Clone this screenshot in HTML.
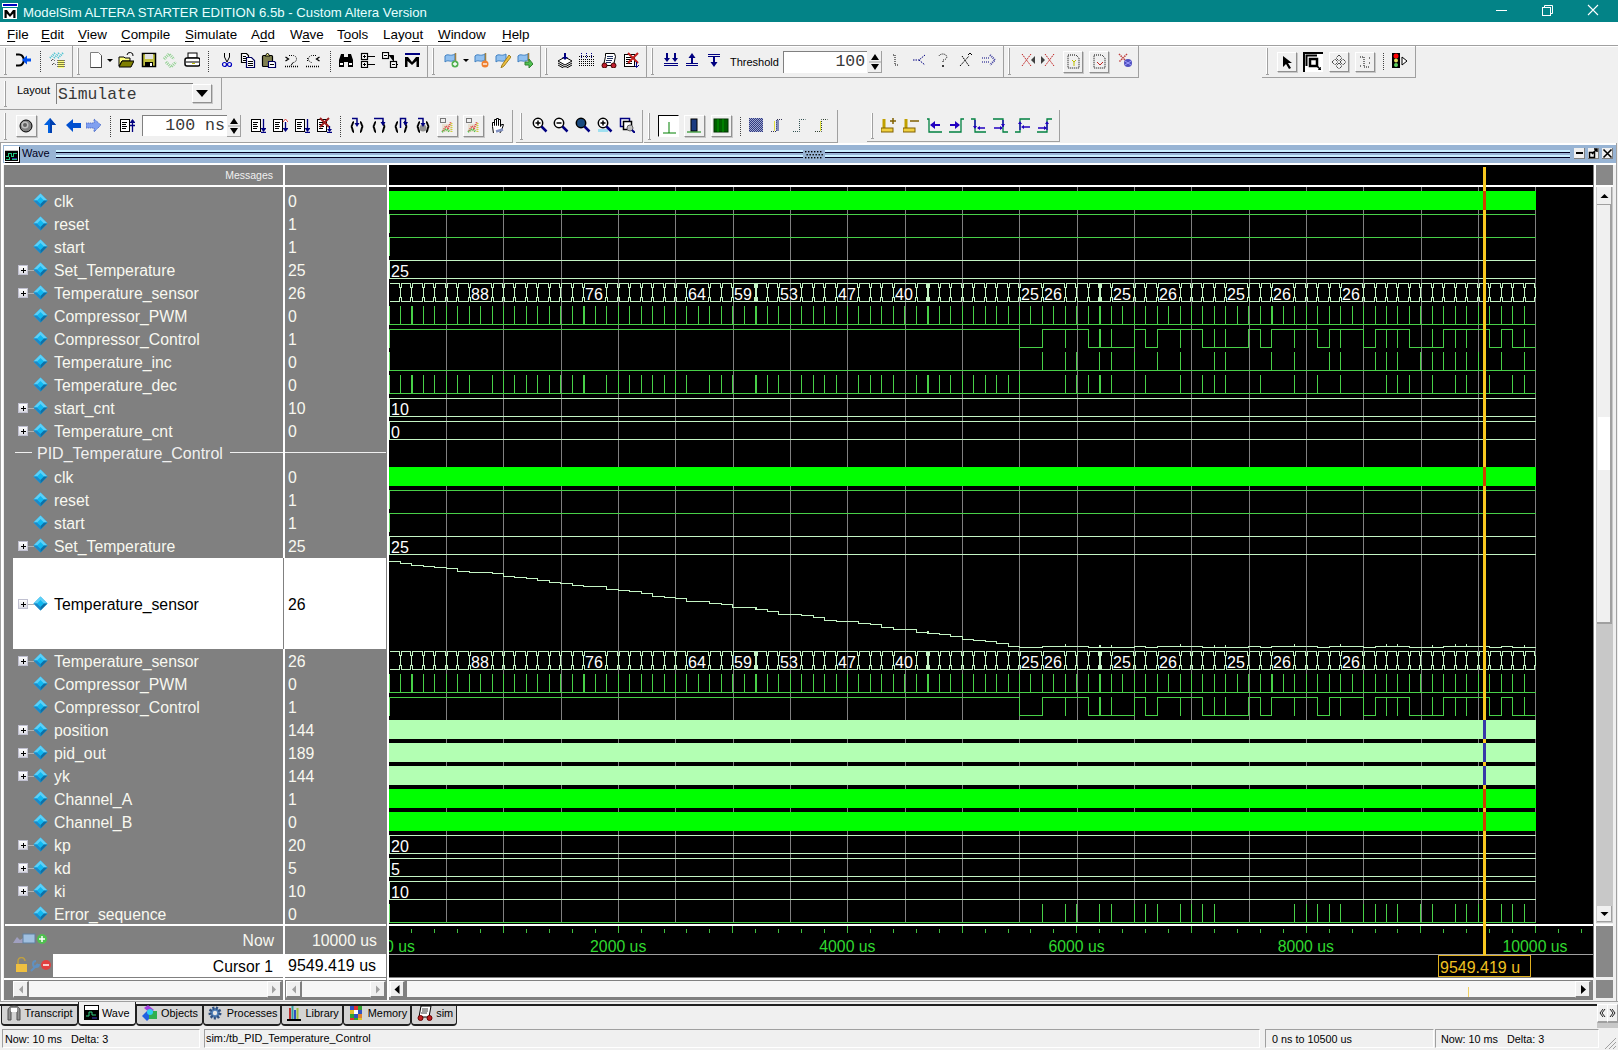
<!DOCTYPE html><html><head><meta charset="utf-8"><title>ModelSim</title><style>html,body{margin:0;padding:0;width:1618px;height:1050px;overflow:hidden;background:#f0f0f0;font-family:"Liberation Sans",sans-serif}svg{display:block}u{text-decoration:underline;text-underline-offset:2px}</style></head><body><div style="position:absolute;left:0px;top:0px;width:1618px;height:22px;background:#038387"></div><svg style="position:absolute;left:2px;top:3px" width="17" height="17" viewBox="0 0 17 17"><rect x="0.5" y="0.5" width="15" height="3" fill="#0000c0" stroke="#fff" stroke-width="1"/><rect x="1" y="5" width="14" height="11" fill="#fff"/><path d="M2.5 15V7h2.5l3 4 3-4h2.5v8h-2.2v-4.5L8 14l-3.3-3.5V15z" fill="#000"/></svg><div style="position:absolute;left:23px;top:5.83px;font-size:13.2px;color:#e8ffff;white-space:nowrap;line-height:1;">ModelSim ALTERA STARTER EDITION 6.5b - Custom Altera Version</div><div style="position:absolute;left:1496px;top:10px;width:11px;height:1px;background:#fff"></div><svg style="position:absolute;left:1541px;top:4px" width="14" height="14"><rect x="1.5" y="3.5" width="8" height="8" fill="none" stroke="#fff"/><path d="M3.5 3.5V1.5h8v8h-2" fill="none" stroke="#fff"/></svg><svg style="position:absolute;left:1587px;top:4px" width="14" height="14"><path d="M1 1L11 11M11 1L1 11" stroke="#fff" stroke-width="1.1"/></svg><div style="position:absolute;left:0px;top:22px;width:1618px;height:23px;background:#fff"></div><div style="position:absolute;left:7px;top:27.66px;font-size:13.4px;color:#000;white-space:nowrap;line-height:1;"><u>F</u>ile</div><div style="position:absolute;left:41px;top:27.66px;font-size:13.4px;color:#000;white-space:nowrap;line-height:1;"><u>E</u>dit</div><div style="position:absolute;left:78px;top:27.66px;font-size:13.4px;color:#000;white-space:nowrap;line-height:1;"><u>V</u>iew</div><div style="position:absolute;left:121px;top:27.66px;font-size:13.4px;color:#000;white-space:nowrap;line-height:1;"><u>C</u>ompile</div><div style="position:absolute;left:185px;top:27.66px;font-size:13.4px;color:#000;white-space:nowrap;line-height:1;"><u>S</u>imulate</div><div style="position:absolute;left:251px;top:27.66px;font-size:13.4px;color:#000;white-space:nowrap;line-height:1;">A<u>d</u>d</div><div style="position:absolute;left:290px;top:27.66px;font-size:13.4px;color:#000;white-space:nowrap;line-height:1;">W<u>a</u>ve</div><div style="position:absolute;left:337px;top:27.66px;font-size:13.4px;color:#000;white-space:nowrap;line-height:1;">T<u>o</u>ols</div><div style="position:absolute;left:383px;top:27.66px;font-size:13.4px;color:#000;white-space:nowrap;line-height:1;">Layo<u>u</u>t</div><div style="position:absolute;left:438px;top:27.66px;font-size:13.4px;color:#000;white-space:nowrap;line-height:1;"><u>W</u>indow</div><div style="position:absolute;left:502px;top:27.66px;font-size:13.4px;color:#000;white-space:nowrap;line-height:1;"><u>H</u>elp</div><div style="position:absolute;left:0px;top:45px;width:1618px;height:98px;background:#f0f0f0"></div><div style="position:absolute;left:0px;top:45px;width:1618px;height:1px;background:#a0a0a0"></div><div style="position:absolute;left:0px;top:46px;width:1618px;height:1px;background:#fff"></div><div style="position:absolute;left:0px;top:45px;width:73px;height:33px;border-right:1px solid #a0a0a0;border-bottom:1px solid #a0a0a0;box-sizing:border-box"></div><div style="position:absolute;left:4px;top:48px;width:1px;height:26px;background:#fff"></div><div style="position:absolute;left:5px;top:48px;width:1px;height:26px;background:#a0a0a0"></div><div style="position:absolute;left:4px;top:74px;width:3px;height:1px;background:#a0a0a0"></div><svg style="position:absolute;left:15px;top:52px;" width="16" height="16" viewBox="0 0 16 16"><path d="M1 2.5h3q4 0 5 5.5q-1 5.5-5 5.5H1" fill="none" stroke="#000" stroke-width="2"/><path d="M9 8h7" stroke="#0050f0" stroke-width="3"/><path d="M7 8l5-4.5v9z" fill="#0050f0"/></svg><div style="position:absolute;left:40px;top:51px;width:1px;height:21px;border-left:1px dotted #404040"></div><svg style="position:absolute;left:49px;top:52px;" width="16" height="16" viewBox="0 0 16 16"><path d="M1 6l5-5M5 6l5-5M9 6l5-5" stroke="#40c0d0" stroke-width="2" stroke-dasharray="1 1"/><path d="M2 9l2-2 2 2M3 13l2-2 2 2" stroke="#000" fill="none" stroke-dasharray="1 1"/><rect x="9" y="8" width="6" height="8" fill="#ffff80"/><path d="M9 8v8M11 8v8M13 8v8M15 8v8" stroke="#000" stroke-dasharray="1 1"/></svg><div style="position:absolute;left:73px;top:45px;width:355px;height:33px;border-right:1px solid #a0a0a0;border-bottom:1px solid #a0a0a0;box-sizing:border-box"></div><div style="position:absolute;left:77px;top:48px;width:1px;height:26px;background:#fff"></div><div style="position:absolute;left:78px;top:48px;width:1px;height:26px;background:#a0a0a0"></div><div style="position:absolute;left:77px;top:74px;width:3px;height:1px;background:#a0a0a0"></div><svg style="position:absolute;left:89px;top:52px;" width="16" height="16" viewBox="0 0 16 16"><path d="M1.5 0.5h8l3 3v12h-11z" fill="#fff" stroke="#808080"/><path d="M12.5 3.5v12h-11" fill="none" stroke="#404040"/></svg><svg style="position:absolute;left:118px;top:52px;" width="16" height="16" viewBox="0 0 16 16"><path d="M1 5h5l1 1h5v3H4L1 14z" fill="#ffff80" stroke="#000"/><path d="M4 9h12l-3 6H1z" fill="#808000" stroke="#000"/><path d="M9 3a3 3 0 0 1 6 1" fill="none" stroke="#000"/></svg><svg style="position:absolute;left:141px;top:52px;" width="16" height="16" viewBox="0 0 16 16"><rect x="1.5" y="1.5" width="13" height="13" fill="#c0c040" stroke="#000" stroke-width="1.5"/><rect x="4" y="2" width="8" height="5" fill="#e0e0e0"/><rect x="4" y="10" width="8" height="5" fill="#000"/><rect x="9" y="11" width="2" height="3" fill="#fff"/></svg><svg style="position:absolute;left:162px;top:52px;" width="16" height="16" viewBox="0 0 16 16"><path d="M2 7l5-5 5 5M4 10l5 5 5-5" stroke="#90d090" stroke-width="3" fill="none" stroke-dasharray="1 1"/></svg><svg style="position:absolute;left:184px;top:52px;" width="16" height="16" viewBox="0 0 16 16"><rect x="4" y="1" width="9" height="5" fill="#fff" stroke="#000"/><rect x="1" y="6" width="15" height="8" rx="2" fill="#fff" stroke="#000" stroke-width="1.5"/><path d="M2 10h13" stroke="#000"/><rect x="8" y="11" width="3" height="1" fill="#c0c000"/></svg><svg style="position:absolute;left:106px;top:58px;" width="8" height="5" viewBox="0 0 8 5"><path d="M1 1h6l-3 3z" fill="#000"/></svg><div style="position:absolute;left:208px;top:51px;width:1px;height:21px;border-left:1px dotted #404040"></div><svg style="position:absolute;left:219px;top:52px;" width="16" height="16" viewBox="0 0 16 16"><path d="M5.5 1v4l2.5 5M10.5 1v4L8 10" stroke="#000" fill="none"/><circle cx="5.5" cy="12.5" r="2" fill="none" stroke="#0000c0" stroke-width="1.2"/><circle cx="10.5" cy="12.5" r="2" fill="none" stroke="#0000c0" stroke-width="1.2"/></svg><svg style="position:absolute;left:240px;top:52px;" width="16" height="16" viewBox="0 0 16 16"><path d="M1.5 1.5h5l2 2v7h-7z" fill="#fff" stroke="#000" stroke-width="1.2"/><path d="M6.5 5.5h5l3 3v7h-8z" fill="#fff" stroke="#000060" stroke-width="1.2"/><path d="M3 4.5h3M3 6.5h4M3 8.5h3M8 9.5h5M8 11.5h5M8 13.5h5" stroke="#000"/></svg><svg style="position:absolute;left:261px;top:52px;" width="16" height="16" viewBox="0 0 16 16"><rect x="1.5" y="3.5" width="10" height="11" rx="1" fill="#808050" stroke="#000" stroke-width="1.2"/><path d="M4 4l2.5-3 2.5 3z" fill="#ffff90" stroke="#000"/><path d="M7.5 9.5h6l1 1v5h-7z" fill="#fff" stroke="#000060" stroke-width="1.2"/><path d="M9 12.5h4" stroke="#000"/></svg><svg style="position:absolute;left:284px;top:52px;" width="16" height="16" viewBox="0 0 16 16"><path d="M5 3.5h4a3.5 3.5 0 0 1 0 7" fill="none" stroke="#000" stroke-dasharray="1 1"/><path d="M1.5 5l3 2-3 2" fill="none" stroke="#000" stroke-width="1.3"/><path d="M1 14.5h14" stroke="#000" stroke-width="1.3" stroke-dasharray="1 1"/><path d="M9 10.5l-2 3" stroke="#000"/></svg><svg style="position:absolute;left:305px;top:52px;" width="16" height="16" viewBox="0 0 16 16"><path d="M11 3.5H7a3.5 3.5 0 0 0 0 7" fill="none" stroke="#000" stroke-dasharray="1 1"/><path d="M14.5 5l-3 2 3 2" fill="none" stroke="#000" stroke-width="1.3"/><path d="M1 14.5h14" stroke="#000" stroke-width="1.3" stroke-dasharray="1 1"/><path d="M2.5 6v3" stroke="#000" stroke-dasharray="1 1"/></svg><div style="position:absolute;left:330px;top:51px;width:1px;height:21px;border-left:1px dotted #404040"></div><svg style="position:absolute;left:338px;top:52px;" width="16" height="16" viewBox="0 0 16 16"><path d="M1 15V8l2-6h3v13zM10 15V2h3l2 6v7z" fill="#000"/><rect x="6" y="5" width="4" height="5" fill="#000"/><rect x="2" y="11" width="3" height="2" fill="#fff"/><rect x="11" y="11" width="3" height="2" fill="#fff"/></svg><svg style="position:absolute;left:360px;top:52px;" width="16" height="16" viewBox="0 0 16 16"><rect x="1.5" y="1.5" width="6" height="6" fill="#fff" stroke="#000" stroke-width="1.2"/><rect x="1.5" y="9.5" width="6" height="6" fill="#fff" stroke="#000" stroke-width="1.2"/><path d="M3 4.5h3M4.5 3v3M3 12.5h3M4.5 11v3M8 4.5h7M8 12.5h7" stroke="#000"/></svg><svg style="position:absolute;left:382px;top:52px;" width="16" height="16" viewBox="0 0 16 16"><rect x="0.5" y="0.5" width="6" height="6" fill="#fff" stroke="#000" stroke-width="1.2"/><rect x="8.5" y="9.5" width="6" height="6" fill="#fff" stroke="#000" stroke-width="1.2"/><path d="M2 3.5h3M10 12.5h3M7 3.5h4.5v6M14.5 12.5h2M11.5 15.5v1" stroke="#000"/></svg><svg style="position:absolute;left:404px;top:52px;" width="16" height="16" viewBox="0 0 16 16"><rect x="1" y="1" width="15" height="2" fill="#000080"/><path d="M1 15V5h3l4 5 4-5h3v10h-2.5V9L8 13 3.5 9v6z" fill="#000"/></svg><div style="position:absolute;left:428px;top:45px;width:113px;height:33px;border-right:1px solid #a0a0a0;border-bottom:1px solid #a0a0a0;box-sizing:border-box"></div><div style="position:absolute;left:432px;top:48px;width:1px;height:26px;background:#fff"></div><div style="position:absolute;left:433px;top:48px;width:1px;height:26px;background:#a0a0a0"></div><div style="position:absolute;left:432px;top:74px;width:3px;height:1px;background:#a0a0a0"></div><svg style="position:absolute;left:444px;top:52px;" width="16" height="16" viewBox="0 0 16 16"><path d="M1 4c3-3 5 1 10-2v6c-5 3-7-1-10 2z" fill="#90c0f0" stroke="#4080c0"/><path d="M11.5 1v10" stroke="#a08040" stroke-width="1.5"/><circle cx="11" cy="12" r="3.5" fill="#50b050"/><path d="M9 12h4M11 10v4" stroke="#fff" stroke-width="1.3"/></svg><svg style="position:absolute;left:474px;top:52px;" width="16" height="16" viewBox="0 0 16 16"><path d="M1 4c3-3 5 1 10-2v6c-5 3-7-1-10 2z" fill="#90c0f0" stroke="#4080c0"/><path d="M11.5 1v10" stroke="#a08040" stroke-width="1.5"/><circle cx="11" cy="12" r="3.5" fill="#f08030"/><path d="M9 12h4" stroke="#fff" stroke-width="1.3"/></svg><svg style="position:absolute;left:495px;top:52px;" width="16" height="16" viewBox="0 0 16 16"><path d="M1 4c3-3 5 1 10-2v6c-5 3-7-1-10 2z" fill="#90c0f0" stroke="#4080c0"/><path d="M14 3L7 13l-1 3 3-2 7-9z" fill="#f0c040" stroke="#a08020"/></svg><svg style="position:absolute;left:517px;top:52px;" width="16" height="16" viewBox="0 0 16 16"><path d="M1 4c3-3 5 1 10-2v6c-5 3-7-1-10 2z" fill="#90c0f0" stroke="#4080c0"/><path d="M11.5 1v8" stroke="#a08040" stroke-width="1.5"/><path d="M8 10h4V7l4 5-4 4v-3H8z" fill="#50c050" stroke="#308030"/></svg><svg style="position:absolute;left:462px;top:58px;" width="8" height="5" viewBox="0 0 8 5"><path d="M1 1h6l-3 3z" fill="#000"/></svg><div style="position:absolute;left:541px;top:45px;width:106px;height:33px;border-right:1px solid #a0a0a0;border-bottom:1px solid #a0a0a0;box-sizing:border-box"></div><div style="position:absolute;left:545px;top:48px;width:1px;height:26px;background:#fff"></div><div style="position:absolute;left:546px;top:48px;width:1px;height:26px;background:#a0a0a0"></div><div style="position:absolute;left:545px;top:74px;width:3px;height:1px;background:#a0a0a0"></div><svg style="position:absolute;left:557px;top:52px;" width="16" height="16" viewBox="0 0 16 16"><path d="M1 9l7-4 7 4-7 4z" fill="#fff" stroke="#000"/><path d="M1 11l7 4 7-4M1 13l7 4 7-4" fill="none" stroke="#000"/><path d="M8 1v6" stroke="#000080" stroke-width="2"/><path d="M5 5l3 3 3-3z" fill="#000080"/></svg><svg style="position:absolute;left:578px;top:52px;" width="16" height="16" viewBox="0 0 16 16"><path d="M1 7.5h15M1 9.5h15M1 11.5h15M1 13.5h15" stroke="#000" stroke-dasharray="1 1"/><path d="M3.5 1v5M8.5 1v5M13.5 1v5" stroke="#000080" stroke-dasharray="1 1"/><path d="M1 4.5h15" stroke="#000" stroke-dasharray="1 1"/></svg><svg style="position:absolute;left:601px;top:52px;" width="16" height="16" viewBox="0 0 16 16"><path d="M4.5 1.5h9l1 3-2 9h-10l2-9z" fill="#fff" stroke="#000"/><path d="M6 4.5h6M6 6.5h6M5 8.5h6M5 10.5h5" stroke="#203060"/><circle cx="3.5" cy="13.5" r="2.5" fill="#c02030" stroke="#400"/><circle cx="12.5" cy="13.5" r="2.5" fill="#c02030" stroke="#400"/></svg><svg style="position:absolute;left:623px;top:52px;" width="16" height="16" viewBox="0 0 16 16"><rect x="1.5" y="2.5" width="10" height="12" fill="#fff" stroke="#000"/><path d="M3 5.5h6M3 7.5h6M3 9.5h6M3 11.5h6" stroke="#000"/><path d="M5 1l10 10M15 1L5 11" stroke="#c02020" stroke-width="2"/><path d="M13.5 10v5M11 13l2.5 2.5 2.5-2.5" stroke="#000080" fill="none"/></svg><div style="position:absolute;left:647px;top:45px;width:357px;height:33px;border-right:1px solid #a0a0a0;border-bottom:1px solid #a0a0a0;box-sizing:border-box"></div><div style="position:absolute;left:651px;top:48px;width:1px;height:26px;background:#fff"></div><div style="position:absolute;left:652px;top:48px;width:1px;height:26px;background:#a0a0a0"></div><div style="position:absolute;left:651px;top:74px;width:3px;height:1px;background:#a0a0a0"></div><svg style="position:absolute;left:663px;top:52px;" width="16" height="16" viewBox="0 0 16 16"><path d="M4 1v6M12 1v6" stroke="#000080" stroke-width="2"/><path d="M1 6l3 4 3-4zM9 6l3 4 3-4z" fill="#000080"/><path d="M1 11.5h14M1 13.5h14" stroke="#000080"/></svg><svg style="position:absolute;left:684px;top:52px;" width="16" height="16" viewBox="0 0 16 16"><path d="M8 5v6" stroke="#000080" stroke-width="2"/><path d="M4.5 6l3.5-5 3.5 5z" fill="#000080"/><path d="M2 11.5h12M2 13.5h12" stroke="#000080"/></svg><svg style="position:absolute;left:706px;top:52px;" width="16" height="16" viewBox="0 0 16 16"><path d="M2 2.5h12M2 4.5h12" stroke="#000080"/><path d="M8 5v6" stroke="#000080" stroke-width="2"/><path d="M4.5 10l3.5 5 3.5-5z" fill="#000080"/></svg><div style="position:absolute;left:730px;top:56.69px;font-size:11px;color:#000;white-space:nowrap;line-height:1;">Threshold</div><div style="position:absolute;left:783px;top:51px;width:84px;height:22px;background:#fff;border-top:1px solid #808080;border-left:1px solid #808080;box-sizing:border-box"></div><div style="position:absolute;right:753px;top:54.12px;font-size:16.4px;color:#383838;white-space:nowrap;line-height:1;font-family:'Liberation Mono',monospace">100</div><div style="position:absolute;left:868px;top:51px;width:14px;height:22px;background:#f0f0f0;border-bottom:1px solid #a0a0a0;border-right:1px solid #a0a0a0;box-sizing:border-box"></div><svg style="position:absolute;left:868px;top:51px;" width="14" height="22" viewBox="0 0 14 22"><path d="M3 9.0l4-6 4 6z M3 13.0l4 6 4-6z" fill="#000"/><path d="M1 11.0h12" stroke="#a0a0a0"/></svg><svg style="position:absolute;left:891px;top:52px;" width="16" height="16" viewBox="0 0 16 16"><path d="M2 3h2v10h4" stroke="#000" stroke-dasharray="1 1" fill="none"/></svg><svg style="position:absolute;left:912px;top:52px;" width="16" height="16" viewBox="0 0 16 16"><path d="M1 8h6l6-5M7 8l6 5" stroke="#000080" fill="none" stroke-dasharray="1.5 1"/></svg><svg style="position:absolute;left:935px;top:52px;" width="16" height="16" viewBox="0 0 16 16"><path d="M4 4a4 3 0 1 1 4 4v3" fill="none" stroke="#000" stroke-dasharray="1 1"/><circle cx="8" cy="14" r="1" fill="#000"/></svg><svg style="position:absolute;left:957px;top:52px;" width="16" height="16" viewBox="0 0 16 16"><path d="M3 14l9-10M5 4l7 10" stroke="#000" stroke-dasharray="1.5 0.7"/><path d="M11 3l2-2 2 2" fill="none" stroke="#000"/></svg><svg style="position:absolute;left:981px;top:52px;" width="16" height="16" viewBox="0 0 16 16"><path d="M1 6h8M1 10h8" stroke="#000080" stroke-dasharray="1 1"/><path d="M9 3l5 5-5 5" fill="none" stroke="#4040a0" stroke-width="2" stroke-dasharray="1 1"/></svg><div style="position:absolute;left:1004px;top:45px;width:135px;height:33px;border-right:1px solid #a0a0a0;border-bottom:1px solid #a0a0a0;box-sizing:border-box"></div><div style="position:absolute;left:1008px;top:48px;width:1px;height:26px;background:#fff"></div><div style="position:absolute;left:1009px;top:48px;width:1px;height:26px;background:#a0a0a0"></div><div style="position:absolute;left:1008px;top:74px;width:3px;height:1px;background:#a0a0a0"></div><svg style="position:absolute;left:1020px;top:52px;" width="16" height="16" viewBox="0 0 16 16"><path d="M2 2l9 12M11 2L2 14" stroke="#c02020" stroke-dasharray="1.5 0.8"/><path d="M15 4l-4 4 4 4z" fill="#404040"/></svg><svg style="position:absolute;left:1040px;top:52px;" width="16" height="16" viewBox="0 0 16 16"><path d="M5 2l9 12M14 2L5 14" stroke="#c02020" stroke-dasharray="1.5 0.8"/><path d="M1 4l4 4-4 4z" fill="#404040"/></svg><div style="position:absolute;left:1063px;top:51px;width:20px;height:22px;background:#f0f0f0;border-top:1px solid #fff;border-left:1px solid #fff;border-bottom:1px solid #909090;border-right:1px solid #909090;box-shadow:1px 1px 0 #c8c8c8;box-sizing:border-box"></div><svg style="position:absolute;left:1065px;top:53px;" width="16" height="16" viewBox="0 0 16 16"><path d="M3 2h8l3 3v10H3z" fill="none" stroke="#000" stroke-dasharray="1 1"/><path d="M7 7l2 2 2-2M9 9v4" stroke="#c0c000" fill="none"/></svg><div style="position:absolute;left:1089px;top:51px;width:20px;height:22px;background:#f0f0f0;border-top:1px solid #fff;border-left:1px solid #fff;border-bottom:1px solid #909090;border-right:1px solid #909090;box-shadow:1px 1px 0 #c8c8c8;box-sizing:border-box"></div><svg style="position:absolute;left:1091px;top:53px;" width="16" height="16" viewBox="0 0 16 16"><path d="M3 2h8l3 3v10H3z" fill="none" stroke="#000" stroke-dasharray="1 1"/><path d="M6 9l3 3 3-3" stroke="#c02020" fill="none"/></svg><svg style="position:absolute;left:1117px;top:52px;" width="16" height="16" viewBox="0 0 16 16"><path d="M2 2l8 8M10 2L2 10" stroke="#c04040" stroke-width="1.5" stroke-dasharray="1.5 0.8"/><circle cx="11" cy="11" r="4" fill="#5050c0"/><path d="M8 9l6 4M8 13l6-4" stroke="#a0a0ff"/></svg><div style="position:absolute;left:1262px;top:45px;width:154px;height:33px;border-right:1px solid #a0a0a0;border-bottom:1px solid #a0a0a0;box-sizing:border-box"></div><div style="position:absolute;left:1266px;top:48px;width:1px;height:26px;background:#fff"></div><div style="position:absolute;left:1267px;top:48px;width:1px;height:26px;background:#a0a0a0"></div><div style="position:absolute;left:1266px;top:74px;width:3px;height:1px;background:#a0a0a0"></div><div style="position:absolute;left:1277px;top:52px;width:20px;height:20px;background:#f0f0f0;border-top:1px solid #fff;border-left:1px solid #fff;border-bottom:1px solid #909090;border-right:1px solid #909090;box-shadow:1px 1px 0 #c8c8c8;box-sizing:border-box"></div><svg style="position:absolute;left:1279px;top:54px;" width="16" height="16" viewBox="0 0 16 16"><path d="M4 2v11l3-3 3 5 2-1-3-5h4z" fill="#000"/></svg><div style="position:absolute;left:1303px;top:52px;width:20px;height:20px;background:#fff;border-top:1px solid #000;border-left:1px solid #000;border-bottom:1px solid #fff;border-right:1px solid #fff;box-sizing:border-box"></div><div style="position:absolute;left:1303px;top:52px;width:2px;height:20px;background:#000"></div><div style="position:absolute;left:1303px;top:52px;width:20px;height:2px;background:#000"></div><svg style="position:absolute;left:1305px;top:54px;" width="16" height="16" viewBox="0 0 16 16"><path d="M1.5 12V1.5H12" fill="none" stroke="#000" stroke-width="2"/><rect x="5" y="5" width="7" height="7" fill="none" stroke="#000" stroke-width="2.5"/><path d="M12 12l4 4M13 16h3v-3" stroke="#000" stroke-width="1.5" fill="none"/></svg><div style="position:absolute;left:1329px;top:52px;width:20px;height:20px;background:#f0f0f0;border-top:1px solid #fff;border-left:1px solid #fff;border-bottom:1px solid #909090;border-right:1px solid #909090;box-shadow:1px 1px 0 #c8c8c8;box-sizing:border-box"></div><svg style="position:absolute;left:1331px;top:54px;" width="16" height="16" viewBox="0 0 16 16"><path d="M8 1l3 3-3 3-3-3zM8 9l3 3-3 3-3-3zM1 8l3-3 3 3-3 3zM9 8l3-3 3 3-3 3z" fill="none" stroke="#000" stroke-dasharray="1 1"/></svg><div style="position:absolute;left:1355px;top:52px;width:20px;height:20px;background:#f0f0f0;border-top:1px solid #fff;border-left:1px solid #fff;border-bottom:1px solid #909090;border-right:1px solid #909090;box-shadow:1px 1px 0 #c8c8c8;box-sizing:border-box"></div><svg style="position:absolute;left:1357px;top:54px;" width="16" height="16" viewBox="0 0 16 16"><path d="M3 3h4v10h6M3 12h2M12 4h2M12 9h2" stroke="#000" stroke-dasharray="1 1" fill="none"/></svg><div style="position:absolute;left:1383px;top:53px;width:1px;height:17px;border-left:1px dotted #404040"></div><svg style="position:absolute;left:1391px;top:52px;" width="16" height="16" viewBox="0 0 16 16"><rect x="1" y="1" width="8" height="15" fill="#000"/><circle cx="5" cy="4" r="2.5" fill="#f00"/><circle cx="5" cy="8.5" r="2" fill="#e0e060"/><circle cx="5" cy="13" r="2" fill="#60d060"/><path d="M11 5l5 4-5 4z" fill="#fff" stroke="#000"/></svg><div style="position:absolute;left:0px;top:78px;width:222px;height:32px;border-right:1px solid #a0a0a0;border-bottom:1px solid #a0a0a0;box-sizing:border-box"></div><div style="position:absolute;left:4px;top:81px;width:1px;height:25px;background:#fff"></div><div style="position:absolute;left:5px;top:81px;width:1px;height:25px;background:#a0a0a0"></div><div style="position:absolute;left:4px;top:106px;width:3px;height:1px;background:#a0a0a0"></div><div style="position:absolute;left:17px;top:85.19px;font-size:11px;color:#000;white-space:nowrap;line-height:1;">Layout</div><div style="position:absolute;left:56px;top:83px;width:137px;height:21px;border-top:1px solid #808080;border-left:1px solid #808080;box-sizing:border-box"></div><div style="position:absolute;left:58px;top:86.62px;font-size:16.4px;color:#383838;white-space:nowrap;line-height:1;font-family:'Liberation Mono',monospace">Simulate</div><div style="position:absolute;left:192px;top:84px;width:20px;height:19px;background:#f0f0f0;border-top:1px solid #fff;border-left:1px solid #fff;border-bottom:1px solid #909090;border-right:1px solid #909090;box-shadow:1px 1px 0 #c8c8c8;box-sizing:border-box"></div><svg style="position:absolute;left:195px;top:89px;" width="14" height="9" viewBox="0 0 14 9"><path d="M1 1h12l-6 7z" fill="#000"/></svg><div style="position:absolute;left:0px;top:110px;width:513px;height:33px;border-right:1px solid #a0a0a0;border-bottom:1px solid #a0a0a0;box-sizing:border-box"></div><div style="position:absolute;left:4px;top:113px;width:1px;height:26px;background:#fff"></div><div style="position:absolute;left:5px;top:113px;width:1px;height:26px;background:#a0a0a0"></div><div style="position:absolute;left:4px;top:139px;width:3px;height:1px;background:#a0a0a0"></div><div style="position:absolute;left:16px;top:115px;width:21px;height:22px;background:#f0f0f0;border-top:1px solid #fff;border-left:1px solid #fff;border-bottom:1px solid #909090;border-right:1px solid #909090;box-shadow:1px 1px 0 #c8c8c8;box-sizing:border-box"></div><svg style="position:absolute;left:18px;top:117px;" width="16" height="16" viewBox="0 0 16 16"><circle cx="8" cy="9" r="6" fill="#808080" stroke="#000"/><circle cx="7" cy="8" r="3.5" fill="#c0c0c0"/><circle cx="7" cy="8" r="2" fill="#606060"/></svg><svg style="position:absolute;left:43px;top:117px;" width="16" height="16" viewBox="0 0 16 16"><path d="M7 1l6 7H9v8H5V8H1z" fill="#0060e0"/><path d="M7 1l6 7H9v8H7z" fill="#0040b0"/></svg><svg style="position:absolute;left:65px;top:117px;" width="16" height="16" viewBox="0 0 16 16"><path d="M1 8l7-6v4h8v5H8v4z" fill="#0050d0"/></svg><svg style="position:absolute;left:86px;top:117px;" width="16" height="16" viewBox="0 0 16 16"><path d="M15 8l-7-6v4H0v5h8v4z" fill="#80a0f0" stroke="#4060c0" stroke-dasharray="1 1"/></svg><div style="position:absolute;left:110px;top:116px;width:1px;height:21px;border-left:1px dotted #404040"></div><svg style="position:absolute;left:119px;top:117px;" width="16" height="16" viewBox="0 0 16 16"><rect x="1.5" y="2.5" width="9" height="12" fill="#fff" stroke="#000"/><path d="M3 5.5h5M3 7.5h4M3 9.5h5M3 11.5h4" stroke="#000"/><path d="M13.5 3v12M11 8.5h5" stroke="#000080" stroke-width="1.3"/><path d="M10.5 6l3-4 3 4z" fill="#000080"/></svg><div style="position:absolute;left:142px;top:115px;width:85px;height:21px;background:#fff;border-top:1px solid #808080;border-left:1px solid #808080;box-sizing:border-box"></div><div style="position:absolute;right:1393px;top:118.45px;font-size:16.6px;color:#383838;white-space:nowrap;line-height:1;font-family:'Liberation Mono',monospace">100 ns</div><div style="position:absolute;left:227px;top:115px;width:14px;height:22px;background:#f0f0f0;border-bottom:1px solid #a0a0a0;border-right:1px solid #a0a0a0;box-sizing:border-box"></div><svg style="position:absolute;left:227px;top:115px;" width="14" height="22" viewBox="0 0 14 22"><path d="M3 9.0l4-6 4 6z M3 13.0l4 6 4-6z" fill="#000"/><path d="M1 11.0h12" stroke="#a0a0a0"/></svg><svg style="position:absolute;left:250px;top:117px;" width="16" height="16" viewBox="0 0 16 16"><rect x="1.5" y="2.5" width="9" height="12" fill="#fff" stroke="#000"/><path d="M3 5.5h5M3 7.5h4M3 9.5h5M3 11.5h4" stroke="#000"/><path d="M13.5 2v11M11 15.5h5" stroke="#000080" stroke-width="1.3"/><path d="M10.5 11l3 4 3-4z" fill="#000080"/></svg><svg style="position:absolute;left:272px;top:117px;" width="16" height="16" viewBox="0 0 16 16"><rect x="1.5" y="2.5" width="9" height="12" fill="#fff" stroke="#000"/><path d="M3 5.5h5M3 7.5h4M3 9.5h5M3 11.5h4" stroke="#000"/><path d="M13.5 4v9" stroke="#000080" stroke-width="1.3"/><path d="M10.5 11l3 4 3-4z" fill="#000080"/><path d="M11 5l2.5-3 2.5 3" stroke="#e04040" fill="#fff"/></svg><svg style="position:absolute;left:294px;top:117px;" width="16" height="16" viewBox="0 0 16 16"><rect x="1.5" y="2.5" width="9" height="12" fill="#fff" stroke="#000"/><path d="M3 5.5h5M3 7.5h4M3 9.5h5M3 11.5h4" stroke="#000"/><path d="M13.5 2v11M11 15.5h5" stroke="#000080" stroke-width="1.3"/><path d="M10.5 11l3 4 3-4z" fill="#000080"/></svg><svg style="position:absolute;left:316px;top:117px;" width="16" height="16" viewBox="0 0 16 16"><rect x="1.5" y="2.5" width="9" height="12" fill="#fff" stroke="#000"/><path d="M3 5.5h5M3 7.5h4M3 9.5h5M3 11.5h4" stroke="#000"/><path d="M4 1l9 9M13 1L4 10" stroke="#a02020" stroke-width="2"/><path d="M13.5 9v5M11 15.5h5" stroke="#000080" stroke-width="1.3"/><path d="M11 12l2.5 3 2.5-3z" fill="#000080"/></svg><div style="position:absolute;left:340px;top:116px;width:1px;height:21px;border-left:1px dotted #404040"></div><svg style="position:absolute;left:349px;top:117px;" width="16" height="16" viewBox="0 0 16 16"><path d="M5 5c-2 0-1 4-3 4.5 2 .5 1 5.5 3 5.5M11 5c2 0 1 4 3 4.5-2 .5-1 5.5-3 5.5" fill="none" stroke="#000" stroke-width="2"/><path d="M3 1.5h5v6" fill="none" stroke="#000080" stroke-width="1.5"/><path d="M5.5 6l2.5 4 2.5-4z" fill="#000080"/></svg><svg style="position:absolute;left:371px;top:117px;" width="16" height="16" viewBox="0 0 16 16"><path d="M5 5c-2 0-1 4-3 4.5 2 .5 1 5.5 3 5.5M11 5c2 0 1 4 3 4.5-2 .5-1 5.5-3 5.5" fill="none" stroke="#000" stroke-width="2"/><path d="M3 1.5h9v5" fill="none" stroke="#000080" stroke-width="1.5"/><path d="M9.5 5l2.5 4 2.5-4z" fill="#000080"/></svg><svg style="position:absolute;left:393px;top:117px;" width="16" height="16" viewBox="0 0 16 16"><path d="M5 5c-2 0-1 4-3 4.5 2 .5 1 5.5 3 5.5M11 5c2 0 1 4 3 4.5-2 .5-1 5.5-3 5.5" fill="none" stroke="#000" stroke-width="2"/><path d="M7.5 11V1.5h5v5" fill="none" stroke="#000080" stroke-width="1.5"/><path d="M10 5l2.5 4 2.5-4z" fill="#000080"/></svg><svg style="position:absolute;left:415px;top:117px;" width="16" height="16" viewBox="0 0 16 16"><path d="M5 5c-2 0-1 4-3 4.5 2 .5 1 5.5 3 5.5M11 5c2 0 1 4 3 4.5-2 .5-1 5.5-3 5.5" fill="none" stroke="#000" stroke-width="2"/><circle cx="8" cy="11" r="3.5" fill="#909090"/><path d="M3 1.5h5v6" fill="none" stroke="#000080" stroke-width="1.5"/><path d="M5.5 6l2.5 4 2.5-4z" fill="#000080"/></svg><div style="position:absolute;left:437px;top:115px;width:21px;height:22px;background:#f0f0f0;border-top:1px solid #fff;border-left:1px solid #fff;border-bottom:1px solid #909090;border-right:1px solid #909090;box-shadow:1px 1px 0 #c8c8c8;box-sizing:border-box"></div><svg style="position:absolute;left:439px;top:117px;" width="16" height="16" viewBox="0 0 16 16"><path d="M1.5 1.5h5v4h-5z" fill="none" stroke="#000" stroke-dasharray="1 1"/><path d="M3 7h10v8H3z" fill="#e8e0d0"/><path d="M4 14l3-5 2 2 3-6" stroke="#e04040" stroke-width="2" stroke-dasharray="1 1" fill="none"/><path d="M3 15l4-3 4 3" stroke="#40c040" stroke-width="2" stroke-dasharray="1 1" fill="none"/><path d="M12.5 6v9" stroke="#d0d040" stroke-width="2" stroke-dasharray="1 1"/></svg><div style="position:absolute;left:463px;top:115px;width:21px;height:22px;background:#f0f0f0;border-top:1px solid #fff;border-left:1px solid #fff;border-bottom:1px solid #909090;border-right:1px solid #909090;box-shadow:1px 1px 0 #c8c8c8;box-sizing:border-box"></div><svg style="position:absolute;left:465px;top:117px;" width="16" height="16" viewBox="0 0 16 16"><path d="M1.5 1.5h5v4h-5z" fill="none" stroke="#000" stroke-dasharray="1 1"/><path d="M3 7h10v8H3z" fill="#e8e0d0"/><path d="M4 14l3-5 2 2 3-6" stroke="#e04040" stroke-width="2" stroke-dasharray="1 1" fill="none"/><path d="M3 15l4-3 4 3" stroke="#40c040" stroke-width="2" stroke-dasharray="1 1" fill="none"/><path d="M12.5 6v9" stroke="#d0d040" stroke-width="2" stroke-dasharray="1 1"/></svg><svg style="position:absolute;left:489px;top:117px;" width="16" height="16" viewBox="0 0 16 16"><path d="M3.5 9.5v-4h2v3v-6h2v6v-7h2v7v-6h2v7l1-2h2l-2 6-2 3h-6z" fill="#fff" stroke="#000"/><path d="M7 14.5l7-2" stroke="#8090c0" stroke-width="2.5"/></svg><div style="position:absolute;left:516px;top:110px;width:127px;height:33px;border-right:1px solid #a0a0a0;border-bottom:1px solid #a0a0a0;box-sizing:border-box"></div><div style="position:absolute;left:520px;top:113px;width:1px;height:26px;background:#fff"></div><div style="position:absolute;left:521px;top:113px;width:1px;height:26px;background:#a0a0a0"></div><div style="position:absolute;left:520px;top:139px;width:3px;height:1px;background:#a0a0a0"></div><svg style="position:absolute;left:532px;top:117px;" width="16" height="16" viewBox="0 0 16 16"><circle cx="6" cy="6" r="4.7" fill="#fff" stroke="#000" stroke-width="1.5"/><path d="M3.5 6h5M6 3.5v5" stroke="#000" stroke-width="1.5"/><path d="M9.5 9.5l5 5" stroke="#000080" stroke-width="2.5"/></svg><svg style="position:absolute;left:553px;top:117px;" width="16" height="16" viewBox="0 0 16 16"><circle cx="6" cy="6" r="4.7" fill="#fff" stroke="#000" stroke-width="1.5"/><path d="M3.5 6h5" stroke="#000" stroke-width="1.5"/><path d="M9.5 9.5l5 5" stroke="#000080" stroke-width="2.5"/></svg><svg style="position:absolute;left:575px;top:117px;" width="16" height="16" viewBox="0 0 16 16"><circle cx="6" cy="6" r="4.7" fill="#1a4a80" stroke="#000" stroke-width="1.5"/><path d="M9.5 9.5l5 5" stroke="#000080" stroke-width="2.5"/></svg><svg style="position:absolute;left:597px;top:117px;" width="16" height="16" viewBox="0 0 16 16"><rect x="1" y="12" width="10" height="3" fill="#a0e0f0"/><circle cx="6" cy="6" r="4.7" fill="#fff" stroke="#000" stroke-width="1.5"/><path d="M3.5 6h5M6 3.5v5" stroke="#000" stroke-width="1.5"/><path d="M9.5 9.5l5 5" stroke="#000080" stroke-width="2.5"/></svg><svg style="position:absolute;left:619px;top:117px;" width="16" height="16" viewBox="0 0 16 16"><rect x="1.5" y="1.5" width="9" height="8" fill="#fff" stroke="#000080" stroke-width="1.5"/><rect x="4.5" y="4.5" width="8" height="8" fill="#fff" stroke="#000" stroke-width="1.5"/><circle cx="11" cy="11" r="3" fill="#c0c0c0" stroke="#606060"/><path d="M13 13l3 3" stroke="#000080" stroke-width="2"/></svg><div style="position:absolute;left:644px;top:110px;width:194px;height:33px;border-right:1px solid #a0a0a0;border-bottom:1px solid #a0a0a0;box-sizing:border-box"></div><div style="position:absolute;left:648px;top:113px;width:1px;height:26px;background:#fff"></div><div style="position:absolute;left:649px;top:113px;width:1px;height:26px;background:#a0a0a0"></div><div style="position:absolute;left:648px;top:139px;width:3px;height:1px;background:#a0a0a0"></div><div style="position:absolute;left:658px;top:115px;width:21px;height:22px;background:#fff;border-top:1px solid #000;border-left:1px solid #000;border-bottom:1px solid #fff;border-right:1px solid #fff;box-sizing:border-box"></div><svg style="position:absolute;left:661px;top:118px;" width="16" height="16" viewBox="0 0 16 16"><path d="M8 4v11M2 15h13" stroke="#008000"/></svg><div style="position:absolute;left:684px;top:115px;width:21px;height:22px;background:#f0f0f0;border-top:1px solid #fff;border-left:1px solid #fff;border-bottom:1px solid #909090;border-right:1px solid #909090;box-shadow:1px 1px 0 #c8c8c8;box-sizing:border-box"></div><svg style="position:absolute;left:686px;top:117px;" width="16" height="16" viewBox="0 0 16 16"><rect x="5" y="2" width="6" height="12" fill="#1a3a80" stroke="#000"/><path d="M1 15h14" stroke="#008000"/></svg><div style="position:absolute;left:711px;top:115px;width:21px;height:22px;background:#f0f0f0;border-top:1px solid #fff;border-left:1px solid #fff;border-bottom:1px solid #909090;border-right:1px solid #909090;box-shadow:1px 1px 0 #c8c8c8;box-sizing:border-box"></div><svg style="position:absolute;left:713px;top:117px;" width="16" height="16" viewBox="0 0 16 16"><rect x="1" y="2" width="14" height="13" fill="#006000" stroke="#003000"/><path d="M5 2v13M10 2v13" stroke="#00a000"/></svg><div style="position:absolute;left:740px;top:117px;width:1px;height:19px;border-left:1px dotted #404040"></div><svg style="position:absolute;left:748px;top:117px;" width="16" height="16" viewBox="0 0 16 16"><defs><pattern id="chk" width="2" height="2" patternUnits="userSpaceOnUse"><rect width="1" height="1" fill="#303a80"/><rect x="1" y="1" width="1" height="1" fill="#303a80"/><rect x="1" width="1" height="1" fill="#a0a8d0"/><rect y="1" width="1" height="1" fill="#a0a8d0"/></pattern></defs><rect x="1" y="1" width="14" height="14" fill="url(#chk)"/></svg><svg style="position:absolute;left:770px;top:117px;" width="16" height="16" viewBox="0 0 16 16"><path d="M1 14.5h5.5V2.5h6" stroke="#303050" stroke-dasharray="1 1" fill="none"/><path d="M4.5 4v10" stroke="#e0e040"/><rect x="6" y="3" width="3" height="11" fill="#5060a0" opacity="0.7"/></svg><svg style="position:absolute;left:792px;top:117px;" width="16" height="16" viewBox="0 0 16 16"><path d="M1 14.5h6.5V2.5h6" stroke="#305050" stroke-dasharray="1 1" fill="none"/></svg><svg style="position:absolute;left:814px;top:117px;" width="16" height="16" viewBox="0 0 16 16"><path d="M1 14.5h6.5V2.5h6" stroke="#304030" stroke-dasharray="1 1" fill="none"/><path d="M6.5 4v10" stroke="#e0e040"/></svg><div style="position:absolute;left:867px;top:110px;width:193px;height:32px;border-right:1px solid #a0a0a0;border-bottom:1px solid #a0a0a0;box-sizing:border-box"></div><div style="position:absolute;left:871px;top:113px;width:1px;height:25px;background:#fff"></div><div style="position:absolute;left:872px;top:113px;width:1px;height:25px;background:#a0a0a0"></div><div style="position:absolute;left:871px;top:138px;width:3px;height:1px;background:#a0a0a0"></div><svg style="position:absolute;left:881px;top:117px;" width="16" height="16" viewBox="0 0 16 16"><path d="M3 2v10" stroke="#c0a000" stroke-width="3"/><rect x="0" y="11" width="12" height="4" fill="#f0d040" stroke="#806000"/><path d="M9 4h6M12 1v6" stroke="#806000" stroke-width="1.5"/></svg><svg style="position:absolute;left:903px;top:117px;" width="16" height="16" viewBox="0 0 16 16"><path d="M3 2v10" stroke="#c0a000" stroke-width="3"/><rect x="0" y="11" width="12" height="4" fill="#f0d040" stroke="#806000"/><path d="M7 4h9" stroke="#806000" stroke-width="1.5"/></svg><svg style="position:absolute;left:926px;top:117px;" width="16" height="16" viewBox="0 0 16 16"><path d="M1 2h2v13h13" stroke="#008040" fill="none" stroke-width="1.3"/><path d="M5 8h9" stroke="#2000c0" stroke-width="2"/><path d="M4 8l5-4v8z" fill="#2000c0"/></svg><svg style="position:absolute;left:948px;top:117px;" width="16" height="16" viewBox="0 0 16 16"><path d="M1 15h12V2h3" stroke="#008040" fill="none" stroke-width="1.3"/><path d="M2 8h9" stroke="#2000c0" stroke-width="2"/><path d="M12 8l-5-4v8z" fill="#2000c0"/></svg><svg style="position:absolute;left:970px;top:117px;" width="16" height="16" viewBox="0 0 16 16"><path d="M1 2h4v13h11" stroke="#008040" fill="none" stroke-width="1.3"/><path d="M5 3v8M8 11h7" stroke="#2000c0" stroke-width="1.3"/><path d="M3 9l2 3 2-3zM7 11l3-2v4z" fill="#2000c0"/></svg><svg style="position:absolute;left:992px;top:117px;" width="16" height="16" viewBox="0 0 16 16"><path d="M1 2h10v13h5" stroke="#008040" fill="none" stroke-width="1.3"/><path d="M11 3v7M2 11h8" stroke="#2000c0" stroke-width="1.3"/><path d="M9 7l2 3 2-3zM11 11l-3-2v4z" fill="#2000c0"/></svg><svg style="position:absolute;left:1014px;top:117px;" width="16" height="16" viewBox="0 0 16 16"><path d="M1 15h5V2h10" stroke="#008040" fill="none" stroke-width="1.3"/><path d="M6 13V6M9 10h7" stroke="#2000c0" stroke-width="1.3"/><path d="M4 7l2-3 2 3zM7 10l3-2v4z" fill="#2000c0"/></svg><svg style="position:absolute;left:1036px;top:117px;" width="16" height="16" viewBox="0 0 16 16"><path d="M1 15h10V2h5" stroke="#008040" fill="none" stroke-width="1.3"/><path d="M11 13V6M2 11h8" stroke="#2000c0" stroke-width="1.3"/><path d="M9 7l2-3 2 3zM11 11l-3-2v4z" fill="#2000c0"/></svg><div style="position:absolute;left:0px;top:143px;width:1618px;height:860px;background:#f0f0f0"></div><div style="position:absolute;left:0px;top:143px;width:1px;height:860px;background:#a0a0a0"></div><div style="position:absolute;left:1616px;top:143px;width:1px;height:860px;background:#a0a0a0"></div><div style="position:absolute;left:1px;top:143px;width:1615px;height:2px;background:#fff"></div><div style="position:absolute;left:1px;top:145px;width:2px;height:857px;background:#fff"></div><div style="position:absolute;left:3px;top:145px;width:1613px;height:18px;background:#98b4d4"></div><svg style="position:absolute;left:4px;top:146px;shape-rendering:crispEdges" width="16" height="17" viewBox="0 0 16 17"><rect x="0" y="0" width="15" height="16" fill="#fff"/><rect x="1" y="4" width="13" height="1" fill="#c0c0c0"/><rect x="1" y="5" width="13" height="10" fill="#000"/><path d="M2 10.5h2.5v-3h3v3h2v-3h3M2 13.5h3v-3M7.5 13.5h5" stroke="#20c080" fill="none"/><path d="M8 12.5h5" stroke="#3030a0"/><path d="M15.5 1v15.5H1" stroke="#000" fill="none"/></svg><div style="position:absolute;left:22px;top:148.39px;font-size:11px;color:#000020;white-space:nowrap;line-height:1;">Wave</div><div style="position:absolute;left:56px;top:150px;width:747px;height:2px;background:#c8f0ff"></div><div style="position:absolute;left:56px;top:152px;width:747px;height:1px;background:#000020"></div><div style="position:absolute;left:56px;top:155px;width:747px;height:2px;background:#c8f0ff"></div><div style="position:absolute;left:56px;top:157px;width:747px;height:1px;background:#000020"></div><div style="position:absolute;left:825px;top:150px;width:745px;height:2px;background:#c8f0ff"></div><div style="position:absolute;left:825px;top:152px;width:745px;height:1px;background:#000020"></div><div style="position:absolute;left:825px;top:155px;width:745px;height:2px;background:#c8f0ff"></div><div style="position:absolute;left:825px;top:157px;width:745px;height:1px;background:#000020"></div><svg style="position:absolute;left:804px;top:150px;" width="20" height="9" viewBox="0 0 20 9"><rect x="1" y="1" width="1.4" height="1.4" fill="#000"/><rect x="4" y="1" width="1.4" height="1.4" fill="#000"/><rect x="7" y="1" width="1.4" height="1.4" fill="#000"/><rect x="10" y="1" width="1.4" height="1.4" fill="#000"/><rect x="13" y="1" width="1.4" height="1.4" fill="#000"/><rect x="16" y="1" width="1.4" height="1.4" fill="#000"/><rect x="2.5" y="4" width="1.4" height="1.4" fill="#000"/><rect x="5.5" y="4" width="1.4" height="1.4" fill="#000"/><rect x="8.5" y="4" width="1.4" height="1.4" fill="#000"/><rect x="11.5" y="4" width="1.4" height="1.4" fill="#000"/><rect x="14.5" y="4" width="1.4" height="1.4" fill="#000"/><rect x="17.5" y="4" width="1.4" height="1.4" fill="#000"/><rect x="1" y="7" width="1.4" height="1.4" fill="#000"/><rect x="4" y="7" width="1.4" height="1.4" fill="#000"/><rect x="7" y="7" width="1.4" height="1.4" fill="#000"/><rect x="10" y="7" width="1.4" height="1.4" fill="#000"/><rect x="13" y="7" width="1.4" height="1.4" fill="#000"/><rect x="16" y="7" width="1.4" height="1.4" fill="#000"/></svg><div style="position:absolute;left:1574px;top:148px;width:11px;height:11px;background:#f0f0f0;border-bottom:1px solid #808080;border-right:1px solid #808080;box-sizing:border-box"></div><svg style="position:absolute;left:1574px;top:148px;" width="11" height="11" viewBox="0 0 11 11"><path d="M2 5h7" stroke="#000" stroke-width="2"/></svg><div style="position:absolute;left:1588px;top:148px;width:11px;height:11px;background:#f0f0f0;border-bottom:1px solid #808080;border-right:1px solid #808080;box-sizing:border-box"></div><svg style="position:absolute;left:1588px;top:148px;" width="11" height="11" viewBox="0 0 11 11"><rect x="1.5" y="4.5" width="5" height="5" fill="none" stroke="#000" stroke-width="1.5"/><path d="M4 6l5-5M6 1h3v3" stroke="#000" stroke-width="1.5" fill="none"/></svg><div style="position:absolute;left:1602px;top:148px;width:11px;height:11px;background:#f0f0f0;border-bottom:1px solid #808080;border-right:1px solid #808080;box-sizing:border-box"></div><svg style="position:absolute;left:1602px;top:148px;" width="11" height="11" viewBox="0 0 11 11"><path d="M1.5 1.5l8 8M9.5 1.5l-8 8" stroke="#000" stroke-width="1.6"/></svg><div style="position:absolute;left:3px;top:163px;width:1613px;height:2px;background:#fff"></div><div style="position:absolute;left:4px;top:165px;width:279px;height:813px;background:#808080"></div><div style="position:absolute;left:283px;top:165px;width:2px;height:813px;background:#fff"></div><div style="position:absolute;left:285px;top:165px;width:101px;height:813px;background:#808080"></div><div style="position:absolute;left:386px;top:165px;width:1px;height:813px;background:#808080"></div><div style="position:absolute;left:387px;top:165px;width:2px;height:813px;background:#fff"></div><div style="position:absolute;right:1345px;top:169.91px;font-size:10.5px;color:#f0f0f0;white-space:nowrap;line-height:1;">Messages</div><div style="position:absolute;left:5px;top:185px;width:278px;height:2px;background:#fff"></div><div style="position:absolute;left:285px;top:185px;width:101px;height:2px;background:#fff"></div><div style="position:absolute;left:13px;top:558px;width:270px;height:91px;background:#fff"></div><div style="position:absolute;left:285px;top:558px;width:101px;height:91px;background:#fff"></div><div style="position:absolute;left:283px;top:558px;width:1px;height:91px;background:#808080"></div><div style="position:absolute;left:33px;top:193px;width:15px;height:15px"><svg width="15" height="15" viewBox="0 0 15 15"><path d="M7.5 0.5L14.5 7.5 7.5 14.5 0.5 7.5z" fill="#1ca8e0"/><path d="M7.5 0.5L14.5 7.5H0.5z" fill="#5cd0f8"/><path d="M0.5 7.5L7.5 14.5 7.5 10.5 4 7.5z" fill="#1c88c8"/><path d="M7.5 4L11 7.5 7.5 11 4 7.5z" fill="#10b8f0"/><path d="M7.5 14.5L14.5 7.5H11L7.5 11z" fill="#0c70a8"/></svg></div><div style="position:absolute;left:54px;top:193.63px;font-size:15.8px;color:#f8f8f0;white-space:nowrap;line-height:1;">clk</div><div style="position:absolute;left:288px;top:193.63px;font-size:15.8px;color:#f8f8f0;white-space:nowrap;line-height:1;">0</div><div style="position:absolute;left:33px;top:216px;width:15px;height:15px"><svg width="15" height="15" viewBox="0 0 15 15"><path d="M7.5 0.5L14.5 7.5 7.5 14.5 0.5 7.5z" fill="#1ca8e0"/><path d="M7.5 0.5L14.5 7.5H0.5z" fill="#5cd0f8"/><path d="M0.5 7.5L7.5 14.5 7.5 10.5 4 7.5z" fill="#1c88c8"/><path d="M7.5 4L11 7.5 7.5 11 4 7.5z" fill="#10b8f0"/><path d="M7.5 14.5L14.5 7.5H11L7.5 11z" fill="#0c70a8"/></svg></div><div style="position:absolute;left:54px;top:216.63px;font-size:15.8px;color:#f8f8f0;white-space:nowrap;line-height:1;">reset</div><div style="position:absolute;left:288px;top:216.63px;font-size:15.8px;color:#f8f8f0;white-space:nowrap;line-height:1;">1</div><div style="position:absolute;left:33px;top:239px;width:15px;height:15px"><svg width="15" height="15" viewBox="0 0 15 15"><path d="M7.5 0.5L14.5 7.5 7.5 14.5 0.5 7.5z" fill="#1ca8e0"/><path d="M7.5 0.5L14.5 7.5H0.5z" fill="#5cd0f8"/><path d="M0.5 7.5L7.5 14.5 7.5 10.5 4 7.5z" fill="#1c88c8"/><path d="M7.5 4L11 7.5 7.5 11 4 7.5z" fill="#10b8f0"/><path d="M7.5 14.5L14.5 7.5H11L7.5 11z" fill="#0c70a8"/></svg></div><div style="position:absolute;left:54px;top:239.63px;font-size:15.8px;color:#f8f8f0;white-space:nowrap;line-height:1;">start</div><div style="position:absolute;left:288px;top:239.63px;font-size:15.8px;color:#f8f8f0;white-space:nowrap;line-height:1;">1</div><div style="position:absolute;left:33px;top:262px;width:15px;height:15px"><svg width="15" height="15" viewBox="0 0 15 15"><path d="M7.5 0.5L14.5 7.5 7.5 14.5 0.5 7.5z" fill="#1ca8e0"/><path d="M7.5 0.5L14.5 7.5H0.5z" fill="#5cd0f8"/><path d="M0.5 7.5L7.5 14.5 7.5 10.5 4 7.5z" fill="#1c88c8"/><path d="M7.5 4L11 7.5 7.5 11 4 7.5z" fill="#10b8f0"/><path d="M7.5 14.5L14.5 7.5H11L7.5 11z" fill="#0c70a8"/></svg></div><div style="position:absolute;left:18px;top:265px;width:11px;height:11px"><svg width="11" height="11" viewBox="0 0 11 11" shape-rendering="crispEdges"><defs><linearGradient id="pg" x1="0" y1="0" x2="0" y2="1"><stop offset="0" stop-color="#fff"/><stop offset="1" stop-color="#d8d8e0"/></linearGradient></defs><rect x="0.5" y="0.5" width="9" height="9" fill="url(#pg)" stroke="#c0c0d0"/><path d="M2.5 5.5h5M5.5 2.5v5" stroke="#000" stroke-width="1.4"/></svg></div><div style="position:absolute;left:28px;top:270px;width:6px;height:1px;background:#b0b0b0"></div><div style="position:absolute;left:54px;top:262.63px;font-size:15.8px;color:#f8f8f0;white-space:nowrap;line-height:1;">Set_Temperature</div><div style="position:absolute;left:288px;top:262.63px;font-size:15.8px;color:#f8f8f0;white-space:nowrap;line-height:1;">25</div><div style="position:absolute;left:33px;top:285px;width:15px;height:15px"><svg width="15" height="15" viewBox="0 0 15 15"><path d="M7.5 0.5L14.5 7.5 7.5 14.5 0.5 7.5z" fill="#1ca8e0"/><path d="M7.5 0.5L14.5 7.5H0.5z" fill="#5cd0f8"/><path d="M0.5 7.5L7.5 14.5 7.5 10.5 4 7.5z" fill="#1c88c8"/><path d="M7.5 4L11 7.5 7.5 11 4 7.5z" fill="#10b8f0"/><path d="M7.5 14.5L14.5 7.5H11L7.5 11z" fill="#0c70a8"/></svg></div><div style="position:absolute;left:18px;top:288px;width:11px;height:11px"><svg width="11" height="11" viewBox="0 0 11 11" shape-rendering="crispEdges"><defs><linearGradient id="pg" x1="0" y1="0" x2="0" y2="1"><stop offset="0" stop-color="#fff"/><stop offset="1" stop-color="#d8d8e0"/></linearGradient></defs><rect x="0.5" y="0.5" width="9" height="9" fill="url(#pg)" stroke="#c0c0d0"/><path d="M2.5 5.5h5M5.5 2.5v5" stroke="#000" stroke-width="1.4"/></svg></div><div style="position:absolute;left:28px;top:293px;width:6px;height:1px;background:#b0b0b0"></div><div style="position:absolute;left:54px;top:285.63px;font-size:15.8px;color:#f8f8f0;white-space:nowrap;line-height:1;">Temperature_sensor</div><div style="position:absolute;left:288px;top:285.63px;font-size:15.8px;color:#f8f8f0;white-space:nowrap;line-height:1;">26</div><div style="position:absolute;left:33px;top:308px;width:15px;height:15px"><svg width="15" height="15" viewBox="0 0 15 15"><path d="M7.5 0.5L14.5 7.5 7.5 14.5 0.5 7.5z" fill="#1ca8e0"/><path d="M7.5 0.5L14.5 7.5H0.5z" fill="#5cd0f8"/><path d="M0.5 7.5L7.5 14.5 7.5 10.5 4 7.5z" fill="#1c88c8"/><path d="M7.5 4L11 7.5 7.5 11 4 7.5z" fill="#10b8f0"/><path d="M7.5 14.5L14.5 7.5H11L7.5 11z" fill="#0c70a8"/></svg></div><div style="position:absolute;left:54px;top:308.63px;font-size:15.8px;color:#f8f8f0;white-space:nowrap;line-height:1;">Compressor_PWM</div><div style="position:absolute;left:288px;top:308.63px;font-size:15.8px;color:#f8f8f0;white-space:nowrap;line-height:1;">0</div><div style="position:absolute;left:33px;top:331px;width:15px;height:15px"><svg width="15" height="15" viewBox="0 0 15 15"><path d="M7.5 0.5L14.5 7.5 7.5 14.5 0.5 7.5z" fill="#1ca8e0"/><path d="M7.5 0.5L14.5 7.5H0.5z" fill="#5cd0f8"/><path d="M0.5 7.5L7.5 14.5 7.5 10.5 4 7.5z" fill="#1c88c8"/><path d="M7.5 4L11 7.5 7.5 11 4 7.5z" fill="#10b8f0"/><path d="M7.5 14.5L14.5 7.5H11L7.5 11z" fill="#0c70a8"/></svg></div><div style="position:absolute;left:54px;top:331.63px;font-size:15.8px;color:#f8f8f0;white-space:nowrap;line-height:1;">Compressor_Control</div><div style="position:absolute;left:288px;top:331.63px;font-size:15.8px;color:#f8f8f0;white-space:nowrap;line-height:1;">1</div><div style="position:absolute;left:33px;top:354px;width:15px;height:15px"><svg width="15" height="15" viewBox="0 0 15 15"><path d="M7.5 0.5L14.5 7.5 7.5 14.5 0.5 7.5z" fill="#1ca8e0"/><path d="M7.5 0.5L14.5 7.5H0.5z" fill="#5cd0f8"/><path d="M0.5 7.5L7.5 14.5 7.5 10.5 4 7.5z" fill="#1c88c8"/><path d="M7.5 4L11 7.5 7.5 11 4 7.5z" fill="#10b8f0"/><path d="M7.5 14.5L14.5 7.5H11L7.5 11z" fill="#0c70a8"/></svg></div><div style="position:absolute;left:54px;top:354.63px;font-size:15.8px;color:#f8f8f0;white-space:nowrap;line-height:1;">Temperature_inc</div><div style="position:absolute;left:288px;top:354.63px;font-size:15.8px;color:#f8f8f0;white-space:nowrap;line-height:1;">0</div><div style="position:absolute;left:33px;top:377px;width:15px;height:15px"><svg width="15" height="15" viewBox="0 0 15 15"><path d="M7.5 0.5L14.5 7.5 7.5 14.5 0.5 7.5z" fill="#1ca8e0"/><path d="M7.5 0.5L14.5 7.5H0.5z" fill="#5cd0f8"/><path d="M0.5 7.5L7.5 14.5 7.5 10.5 4 7.5z" fill="#1c88c8"/><path d="M7.5 4L11 7.5 7.5 11 4 7.5z" fill="#10b8f0"/><path d="M7.5 14.5L14.5 7.5H11L7.5 11z" fill="#0c70a8"/></svg></div><div style="position:absolute;left:54px;top:377.63px;font-size:15.8px;color:#f8f8f0;white-space:nowrap;line-height:1;">Temperature_dec</div><div style="position:absolute;left:288px;top:377.63px;font-size:15.8px;color:#f8f8f0;white-space:nowrap;line-height:1;">0</div><div style="position:absolute;left:33px;top:400px;width:15px;height:15px"><svg width="15" height="15" viewBox="0 0 15 15"><path d="M7.5 0.5L14.5 7.5 7.5 14.5 0.5 7.5z" fill="#1ca8e0"/><path d="M7.5 0.5L14.5 7.5H0.5z" fill="#5cd0f8"/><path d="M0.5 7.5L7.5 14.5 7.5 10.5 4 7.5z" fill="#1c88c8"/><path d="M7.5 4L11 7.5 7.5 11 4 7.5z" fill="#10b8f0"/><path d="M7.5 14.5L14.5 7.5H11L7.5 11z" fill="#0c70a8"/></svg></div><div style="position:absolute;left:18px;top:403px;width:11px;height:11px"><svg width="11" height="11" viewBox="0 0 11 11" shape-rendering="crispEdges"><defs><linearGradient id="pg" x1="0" y1="0" x2="0" y2="1"><stop offset="0" stop-color="#fff"/><stop offset="1" stop-color="#d8d8e0"/></linearGradient></defs><rect x="0.5" y="0.5" width="9" height="9" fill="url(#pg)" stroke="#c0c0d0"/><path d="M2.5 5.5h5M5.5 2.5v5" stroke="#000" stroke-width="1.4"/></svg></div><div style="position:absolute;left:28px;top:408px;width:6px;height:1px;background:#b0b0b0"></div><div style="position:absolute;left:54px;top:400.63px;font-size:15.8px;color:#f8f8f0;white-space:nowrap;line-height:1;">start_cnt</div><div style="position:absolute;left:288px;top:400.63px;font-size:15.8px;color:#f8f8f0;white-space:nowrap;line-height:1;">10</div><div style="position:absolute;left:33px;top:423px;width:15px;height:15px"><svg width="15" height="15" viewBox="0 0 15 15"><path d="M7.5 0.5L14.5 7.5 7.5 14.5 0.5 7.5z" fill="#1ca8e0"/><path d="M7.5 0.5L14.5 7.5H0.5z" fill="#5cd0f8"/><path d="M0.5 7.5L7.5 14.5 7.5 10.5 4 7.5z" fill="#1c88c8"/><path d="M7.5 4L11 7.5 7.5 11 4 7.5z" fill="#10b8f0"/><path d="M7.5 14.5L14.5 7.5H11L7.5 11z" fill="#0c70a8"/></svg></div><div style="position:absolute;left:18px;top:426px;width:11px;height:11px"><svg width="11" height="11" viewBox="0 0 11 11" shape-rendering="crispEdges"><defs><linearGradient id="pg" x1="0" y1="0" x2="0" y2="1"><stop offset="0" stop-color="#fff"/><stop offset="1" stop-color="#d8d8e0"/></linearGradient></defs><rect x="0.5" y="0.5" width="9" height="9" fill="url(#pg)" stroke="#c0c0d0"/><path d="M2.5 5.5h5M5.5 2.5v5" stroke="#000" stroke-width="1.4"/></svg></div><div style="position:absolute;left:28px;top:431px;width:6px;height:1px;background:#b0b0b0"></div><div style="position:absolute;left:54px;top:423.63px;font-size:15.8px;color:#f8f8f0;white-space:nowrap;line-height:1;">Temperature_cnt</div><div style="position:absolute;left:288px;top:423.63px;font-size:15.8px;color:#f8f8f0;white-space:nowrap;line-height:1;">0</div><div style="position:absolute;left:15px;top:452px;width:17px;height:1px;background:#f0f0f0"></div><div style="position:absolute;left:37px;top:446.46px;font-size:16px;color:#f0f0f0;white-space:nowrap;line-height:1;">PID_Temperature_Control</div><div style="position:absolute;left:230px;top:452px;width:53px;height:1px;background:#f0f0f0"></div><div style="position:absolute;left:285px;top:452px;width:101px;height:1px;background:#f0f0f0"></div><div style="position:absolute;left:33px;top:469px;width:15px;height:15px"><svg width="15" height="15" viewBox="0 0 15 15"><path d="M7.5 0.5L14.5 7.5 7.5 14.5 0.5 7.5z" fill="#1ca8e0"/><path d="M7.5 0.5L14.5 7.5H0.5z" fill="#5cd0f8"/><path d="M0.5 7.5L7.5 14.5 7.5 10.5 4 7.5z" fill="#1c88c8"/><path d="M7.5 4L11 7.5 7.5 11 4 7.5z" fill="#10b8f0"/><path d="M7.5 14.5L14.5 7.5H11L7.5 11z" fill="#0c70a8"/></svg></div><div style="position:absolute;left:54px;top:469.63px;font-size:15.8px;color:#f8f8f0;white-space:nowrap;line-height:1;">clk</div><div style="position:absolute;left:288px;top:469.63px;font-size:15.8px;color:#f8f8f0;white-space:nowrap;line-height:1;">0</div><div style="position:absolute;left:33px;top:492px;width:15px;height:15px"><svg width="15" height="15" viewBox="0 0 15 15"><path d="M7.5 0.5L14.5 7.5 7.5 14.5 0.5 7.5z" fill="#1ca8e0"/><path d="M7.5 0.5L14.5 7.5H0.5z" fill="#5cd0f8"/><path d="M0.5 7.5L7.5 14.5 7.5 10.5 4 7.5z" fill="#1c88c8"/><path d="M7.5 4L11 7.5 7.5 11 4 7.5z" fill="#10b8f0"/><path d="M7.5 14.5L14.5 7.5H11L7.5 11z" fill="#0c70a8"/></svg></div><div style="position:absolute;left:54px;top:492.63px;font-size:15.8px;color:#f8f8f0;white-space:nowrap;line-height:1;">reset</div><div style="position:absolute;left:288px;top:492.63px;font-size:15.8px;color:#f8f8f0;white-space:nowrap;line-height:1;">1</div><div style="position:absolute;left:33px;top:515px;width:15px;height:15px"><svg width="15" height="15" viewBox="0 0 15 15"><path d="M7.5 0.5L14.5 7.5 7.5 14.5 0.5 7.5z" fill="#1ca8e0"/><path d="M7.5 0.5L14.5 7.5H0.5z" fill="#5cd0f8"/><path d="M0.5 7.5L7.5 14.5 7.5 10.5 4 7.5z" fill="#1c88c8"/><path d="M7.5 4L11 7.5 7.5 11 4 7.5z" fill="#10b8f0"/><path d="M7.5 14.5L14.5 7.5H11L7.5 11z" fill="#0c70a8"/></svg></div><div style="position:absolute;left:54px;top:515.63px;font-size:15.8px;color:#f8f8f0;white-space:nowrap;line-height:1;">start</div><div style="position:absolute;left:288px;top:515.63px;font-size:15.8px;color:#f8f8f0;white-space:nowrap;line-height:1;">1</div><div style="position:absolute;left:33px;top:538px;width:15px;height:15px"><svg width="15" height="15" viewBox="0 0 15 15"><path d="M7.5 0.5L14.5 7.5 7.5 14.5 0.5 7.5z" fill="#1ca8e0"/><path d="M7.5 0.5L14.5 7.5H0.5z" fill="#5cd0f8"/><path d="M0.5 7.5L7.5 14.5 7.5 10.5 4 7.5z" fill="#1c88c8"/><path d="M7.5 4L11 7.5 7.5 11 4 7.5z" fill="#10b8f0"/><path d="M7.5 14.5L14.5 7.5H11L7.5 11z" fill="#0c70a8"/></svg></div><div style="position:absolute;left:18px;top:541px;width:11px;height:11px"><svg width="11" height="11" viewBox="0 0 11 11" shape-rendering="crispEdges"><defs><linearGradient id="pg" x1="0" y1="0" x2="0" y2="1"><stop offset="0" stop-color="#fff"/><stop offset="1" stop-color="#d8d8e0"/></linearGradient></defs><rect x="0.5" y="0.5" width="9" height="9" fill="url(#pg)" stroke="#c0c0d0"/><path d="M2.5 5.5h5M5.5 2.5v5" stroke="#000" stroke-width="1.4"/></svg></div><div style="position:absolute;left:28px;top:546px;width:6px;height:1px;background:#b0b0b0"></div><div style="position:absolute;left:54px;top:538.63px;font-size:15.8px;color:#f8f8f0;white-space:nowrap;line-height:1;">Set_Temperature</div><div style="position:absolute;left:288px;top:538.63px;font-size:15.8px;color:#f8f8f0;white-space:nowrap;line-height:1;">25</div><div style="position:absolute;left:33px;top:596px;width:15px;height:15px"><svg width="15" height="15" viewBox="0 0 15 15"><path d="M7.5 0.5L14.5 7.5 7.5 14.5 0.5 7.5z" fill="#1ca8e0"/><path d="M7.5 0.5L14.5 7.5H0.5z" fill="#5cd0f8"/><path d="M0.5 7.5L7.5 14.5 7.5 10.5 4 7.5z" fill="#1c88c8"/><path d="M7.5 4L11 7.5 7.5 11 4 7.5z" fill="#10b8f0"/><path d="M7.5 14.5L14.5 7.5H11L7.5 11z" fill="#0c70a8"/></svg></div><div style="position:absolute;left:18px;top:599px;width:11px;height:11px"><svg width="11" height="11" viewBox="0 0 11 11" shape-rendering="crispEdges"><defs><linearGradient id="pg" x1="0" y1="0" x2="0" y2="1"><stop offset="0" stop-color="#fff"/><stop offset="1" stop-color="#d8d8e0"/></linearGradient></defs><rect x="0.5" y="0.5" width="9" height="9" fill="url(#pg)" stroke="#c0c0d0"/><path d="M2.5 5.5h5M5.5 2.5v5" stroke="#000" stroke-width="1.4"/></svg></div><div style="position:absolute;left:28px;top:604px;width:6px;height:1px;background:#b0b0b0"></div><div style="position:absolute;left:54px;top:596.63px;font-size:15.8px;color:#000;white-space:nowrap;line-height:1;">Temperature_sensor</div><div style="position:absolute;left:288px;top:596.63px;font-size:15.8px;color:#000;white-space:nowrap;line-height:1;">26</div><div style="position:absolute;left:33px;top:653px;width:15px;height:15px"><svg width="15" height="15" viewBox="0 0 15 15"><path d="M7.5 0.5L14.5 7.5 7.5 14.5 0.5 7.5z" fill="#1ca8e0"/><path d="M7.5 0.5L14.5 7.5H0.5z" fill="#5cd0f8"/><path d="M0.5 7.5L7.5 14.5 7.5 10.5 4 7.5z" fill="#1c88c8"/><path d="M7.5 4L11 7.5 7.5 11 4 7.5z" fill="#10b8f0"/><path d="M7.5 14.5L14.5 7.5H11L7.5 11z" fill="#0c70a8"/></svg></div><div style="position:absolute;left:18px;top:656px;width:11px;height:11px"><svg width="11" height="11" viewBox="0 0 11 11" shape-rendering="crispEdges"><defs><linearGradient id="pg" x1="0" y1="0" x2="0" y2="1"><stop offset="0" stop-color="#fff"/><stop offset="1" stop-color="#d8d8e0"/></linearGradient></defs><rect x="0.5" y="0.5" width="9" height="9" fill="url(#pg)" stroke="#c0c0d0"/><path d="M2.5 5.5h5M5.5 2.5v5" stroke="#000" stroke-width="1.4"/></svg></div><div style="position:absolute;left:28px;top:661px;width:6px;height:1px;background:#b0b0b0"></div><div style="position:absolute;left:54px;top:653.63px;font-size:15.8px;color:#f8f8f0;white-space:nowrap;line-height:1;">Temperature_sensor</div><div style="position:absolute;left:288px;top:653.63px;font-size:15.8px;color:#f8f8f0;white-space:nowrap;line-height:1;">26</div><div style="position:absolute;left:33px;top:676px;width:15px;height:15px"><svg width="15" height="15" viewBox="0 0 15 15"><path d="M7.5 0.5L14.5 7.5 7.5 14.5 0.5 7.5z" fill="#1ca8e0"/><path d="M7.5 0.5L14.5 7.5H0.5z" fill="#5cd0f8"/><path d="M0.5 7.5L7.5 14.5 7.5 10.5 4 7.5z" fill="#1c88c8"/><path d="M7.5 4L11 7.5 7.5 11 4 7.5z" fill="#10b8f0"/><path d="M7.5 14.5L14.5 7.5H11L7.5 11z" fill="#0c70a8"/></svg></div><div style="position:absolute;left:54px;top:676.63px;font-size:15.8px;color:#f8f8f0;white-space:nowrap;line-height:1;">Compressor_PWM</div><div style="position:absolute;left:288px;top:676.63px;font-size:15.8px;color:#f8f8f0;white-space:nowrap;line-height:1;">0</div><div style="position:absolute;left:33px;top:699px;width:15px;height:15px"><svg width="15" height="15" viewBox="0 0 15 15"><path d="M7.5 0.5L14.5 7.5 7.5 14.5 0.5 7.5z" fill="#1ca8e0"/><path d="M7.5 0.5L14.5 7.5H0.5z" fill="#5cd0f8"/><path d="M0.5 7.5L7.5 14.5 7.5 10.5 4 7.5z" fill="#1c88c8"/><path d="M7.5 4L11 7.5 7.5 11 4 7.5z" fill="#10b8f0"/><path d="M7.5 14.5L14.5 7.5H11L7.5 11z" fill="#0c70a8"/></svg></div><div style="position:absolute;left:54px;top:699.63px;font-size:15.8px;color:#f8f8f0;white-space:nowrap;line-height:1;">Compressor_Control</div><div style="position:absolute;left:288px;top:699.63px;font-size:15.8px;color:#f8f8f0;white-space:nowrap;line-height:1;">1</div><div style="position:absolute;left:33px;top:722px;width:15px;height:15px"><svg width="15" height="15" viewBox="0 0 15 15"><path d="M7.5 0.5L14.5 7.5 7.5 14.5 0.5 7.5z" fill="#1ca8e0"/><path d="M7.5 0.5L14.5 7.5H0.5z" fill="#5cd0f8"/><path d="M0.5 7.5L7.5 14.5 7.5 10.5 4 7.5z" fill="#1c88c8"/><path d="M7.5 4L11 7.5 7.5 11 4 7.5z" fill="#10b8f0"/><path d="M7.5 14.5L14.5 7.5H11L7.5 11z" fill="#0c70a8"/></svg></div><div style="position:absolute;left:18px;top:725px;width:11px;height:11px"><svg width="11" height="11" viewBox="0 0 11 11" shape-rendering="crispEdges"><defs><linearGradient id="pg" x1="0" y1="0" x2="0" y2="1"><stop offset="0" stop-color="#fff"/><stop offset="1" stop-color="#d8d8e0"/></linearGradient></defs><rect x="0.5" y="0.5" width="9" height="9" fill="url(#pg)" stroke="#c0c0d0"/><path d="M2.5 5.5h5M5.5 2.5v5" stroke="#000" stroke-width="1.4"/></svg></div><div style="position:absolute;left:28px;top:730px;width:6px;height:1px;background:#b0b0b0"></div><div style="position:absolute;left:54px;top:722.63px;font-size:15.8px;color:#f8f8f0;white-space:nowrap;line-height:1;">position</div><div style="position:absolute;left:288px;top:722.63px;font-size:15.8px;color:#f8f8f0;white-space:nowrap;line-height:1;">144</div><div style="position:absolute;left:33px;top:745px;width:15px;height:15px"><svg width="15" height="15" viewBox="0 0 15 15"><path d="M7.5 0.5L14.5 7.5 7.5 14.5 0.5 7.5z" fill="#1ca8e0"/><path d="M7.5 0.5L14.5 7.5H0.5z" fill="#5cd0f8"/><path d="M0.5 7.5L7.5 14.5 7.5 10.5 4 7.5z" fill="#1c88c8"/><path d="M7.5 4L11 7.5 7.5 11 4 7.5z" fill="#10b8f0"/><path d="M7.5 14.5L14.5 7.5H11L7.5 11z" fill="#0c70a8"/></svg></div><div style="position:absolute;left:18px;top:748px;width:11px;height:11px"><svg width="11" height="11" viewBox="0 0 11 11" shape-rendering="crispEdges"><defs><linearGradient id="pg" x1="0" y1="0" x2="0" y2="1"><stop offset="0" stop-color="#fff"/><stop offset="1" stop-color="#d8d8e0"/></linearGradient></defs><rect x="0.5" y="0.5" width="9" height="9" fill="url(#pg)" stroke="#c0c0d0"/><path d="M2.5 5.5h5M5.5 2.5v5" stroke="#000" stroke-width="1.4"/></svg></div><div style="position:absolute;left:28px;top:753px;width:6px;height:1px;background:#b0b0b0"></div><div style="position:absolute;left:54px;top:745.63px;font-size:15.8px;color:#f8f8f0;white-space:nowrap;line-height:1;">pid_out</div><div style="position:absolute;left:288px;top:745.63px;font-size:15.8px;color:#f8f8f0;white-space:nowrap;line-height:1;">189</div><div style="position:absolute;left:33px;top:768px;width:15px;height:15px"><svg width="15" height="15" viewBox="0 0 15 15"><path d="M7.5 0.5L14.5 7.5 7.5 14.5 0.5 7.5z" fill="#1ca8e0"/><path d="M7.5 0.5L14.5 7.5H0.5z" fill="#5cd0f8"/><path d="M0.5 7.5L7.5 14.5 7.5 10.5 4 7.5z" fill="#1c88c8"/><path d="M7.5 4L11 7.5 7.5 11 4 7.5z" fill="#10b8f0"/><path d="M7.5 14.5L14.5 7.5H11L7.5 11z" fill="#0c70a8"/></svg></div><div style="position:absolute;left:18px;top:771px;width:11px;height:11px"><svg width="11" height="11" viewBox="0 0 11 11" shape-rendering="crispEdges"><defs><linearGradient id="pg" x1="0" y1="0" x2="0" y2="1"><stop offset="0" stop-color="#fff"/><stop offset="1" stop-color="#d8d8e0"/></linearGradient></defs><rect x="0.5" y="0.5" width="9" height="9" fill="url(#pg)" stroke="#c0c0d0"/><path d="M2.5 5.5h5M5.5 2.5v5" stroke="#000" stroke-width="1.4"/></svg></div><div style="position:absolute;left:28px;top:776px;width:6px;height:1px;background:#b0b0b0"></div><div style="position:absolute;left:54px;top:768.63px;font-size:15.8px;color:#f8f8f0;white-space:nowrap;line-height:1;">yk</div><div style="position:absolute;left:288px;top:768.63px;font-size:15.8px;color:#f8f8f0;white-space:nowrap;line-height:1;">144</div><div style="position:absolute;left:33px;top:791px;width:15px;height:15px"><svg width="15" height="15" viewBox="0 0 15 15"><path d="M7.5 0.5L14.5 7.5 7.5 14.5 0.5 7.5z" fill="#1ca8e0"/><path d="M7.5 0.5L14.5 7.5H0.5z" fill="#5cd0f8"/><path d="M0.5 7.5L7.5 14.5 7.5 10.5 4 7.5z" fill="#1c88c8"/><path d="M7.5 4L11 7.5 7.5 11 4 7.5z" fill="#10b8f0"/><path d="M7.5 14.5L14.5 7.5H11L7.5 11z" fill="#0c70a8"/></svg></div><div style="position:absolute;left:54px;top:791.63px;font-size:15.8px;color:#f8f8f0;white-space:nowrap;line-height:1;">Channel_A</div><div style="position:absolute;left:288px;top:791.63px;font-size:15.8px;color:#f8f8f0;white-space:nowrap;line-height:1;">1</div><div style="position:absolute;left:33px;top:814px;width:15px;height:15px"><svg width="15" height="15" viewBox="0 0 15 15"><path d="M7.5 0.5L14.5 7.5 7.5 14.5 0.5 7.5z" fill="#1ca8e0"/><path d="M7.5 0.5L14.5 7.5H0.5z" fill="#5cd0f8"/><path d="M0.5 7.5L7.5 14.5 7.5 10.5 4 7.5z" fill="#1c88c8"/><path d="M7.5 4L11 7.5 7.5 11 4 7.5z" fill="#10b8f0"/><path d="M7.5 14.5L14.5 7.5H11L7.5 11z" fill="#0c70a8"/></svg></div><div style="position:absolute;left:54px;top:814.63px;font-size:15.8px;color:#f8f8f0;white-space:nowrap;line-height:1;">Channel_B</div><div style="position:absolute;left:288px;top:814.63px;font-size:15.8px;color:#f8f8f0;white-space:nowrap;line-height:1;">0</div><div style="position:absolute;left:33px;top:837px;width:15px;height:15px"><svg width="15" height="15" viewBox="0 0 15 15"><path d="M7.5 0.5L14.5 7.5 7.5 14.5 0.5 7.5z" fill="#1ca8e0"/><path d="M7.5 0.5L14.5 7.5H0.5z" fill="#5cd0f8"/><path d="M0.5 7.5L7.5 14.5 7.5 10.5 4 7.5z" fill="#1c88c8"/><path d="M7.5 4L11 7.5 7.5 11 4 7.5z" fill="#10b8f0"/><path d="M7.5 14.5L14.5 7.5H11L7.5 11z" fill="#0c70a8"/></svg></div><div style="position:absolute;left:18px;top:840px;width:11px;height:11px"><svg width="11" height="11" viewBox="0 0 11 11" shape-rendering="crispEdges"><defs><linearGradient id="pg" x1="0" y1="0" x2="0" y2="1"><stop offset="0" stop-color="#fff"/><stop offset="1" stop-color="#d8d8e0"/></linearGradient></defs><rect x="0.5" y="0.5" width="9" height="9" fill="url(#pg)" stroke="#c0c0d0"/><path d="M2.5 5.5h5M5.5 2.5v5" stroke="#000" stroke-width="1.4"/></svg></div><div style="position:absolute;left:28px;top:845px;width:6px;height:1px;background:#b0b0b0"></div><div style="position:absolute;left:54px;top:837.63px;font-size:15.8px;color:#f8f8f0;white-space:nowrap;line-height:1;">kp</div><div style="position:absolute;left:288px;top:837.63px;font-size:15.8px;color:#f8f8f0;white-space:nowrap;line-height:1;">20</div><div style="position:absolute;left:33px;top:860px;width:15px;height:15px"><svg width="15" height="15" viewBox="0 0 15 15"><path d="M7.5 0.5L14.5 7.5 7.5 14.5 0.5 7.5z" fill="#1ca8e0"/><path d="M7.5 0.5L14.5 7.5H0.5z" fill="#5cd0f8"/><path d="M0.5 7.5L7.5 14.5 7.5 10.5 4 7.5z" fill="#1c88c8"/><path d="M7.5 4L11 7.5 7.5 11 4 7.5z" fill="#10b8f0"/><path d="M7.5 14.5L14.5 7.5H11L7.5 11z" fill="#0c70a8"/></svg></div><div style="position:absolute;left:18px;top:863px;width:11px;height:11px"><svg width="11" height="11" viewBox="0 0 11 11" shape-rendering="crispEdges"><defs><linearGradient id="pg" x1="0" y1="0" x2="0" y2="1"><stop offset="0" stop-color="#fff"/><stop offset="1" stop-color="#d8d8e0"/></linearGradient></defs><rect x="0.5" y="0.5" width="9" height="9" fill="url(#pg)" stroke="#c0c0d0"/><path d="M2.5 5.5h5M5.5 2.5v5" stroke="#000" stroke-width="1.4"/></svg></div><div style="position:absolute;left:28px;top:868px;width:6px;height:1px;background:#b0b0b0"></div><div style="position:absolute;left:54px;top:860.63px;font-size:15.8px;color:#f8f8f0;white-space:nowrap;line-height:1;">kd</div><div style="position:absolute;left:288px;top:860.63px;font-size:15.8px;color:#f8f8f0;white-space:nowrap;line-height:1;">5</div><div style="position:absolute;left:33px;top:883px;width:15px;height:15px"><svg width="15" height="15" viewBox="0 0 15 15"><path d="M7.5 0.5L14.5 7.5 7.5 14.5 0.5 7.5z" fill="#1ca8e0"/><path d="M7.5 0.5L14.5 7.5H0.5z" fill="#5cd0f8"/><path d="M0.5 7.5L7.5 14.5 7.5 10.5 4 7.5z" fill="#1c88c8"/><path d="M7.5 4L11 7.5 7.5 11 4 7.5z" fill="#10b8f0"/><path d="M7.5 14.5L14.5 7.5H11L7.5 11z" fill="#0c70a8"/></svg></div><div style="position:absolute;left:18px;top:886px;width:11px;height:11px"><svg width="11" height="11" viewBox="0 0 11 11" shape-rendering="crispEdges"><defs><linearGradient id="pg" x1="0" y1="0" x2="0" y2="1"><stop offset="0" stop-color="#fff"/><stop offset="1" stop-color="#d8d8e0"/></linearGradient></defs><rect x="0.5" y="0.5" width="9" height="9" fill="url(#pg)" stroke="#c0c0d0"/><path d="M2.5 5.5h5M5.5 2.5v5" stroke="#000" stroke-width="1.4"/></svg></div><div style="position:absolute;left:28px;top:891px;width:6px;height:1px;background:#b0b0b0"></div><div style="position:absolute;left:54px;top:883.63px;font-size:15.8px;color:#f8f8f0;white-space:nowrap;line-height:1;">ki</div><div style="position:absolute;left:288px;top:883.63px;font-size:15.8px;color:#f8f8f0;white-space:nowrap;line-height:1;">10</div><div style="position:absolute;left:33px;top:906px;width:15px;height:15px"><svg width="15" height="15" viewBox="0 0 15 15"><path d="M7.5 0.5L14.5 7.5 7.5 14.5 0.5 7.5z" fill="#1ca8e0"/><path d="M7.5 0.5L14.5 7.5H0.5z" fill="#5cd0f8"/><path d="M0.5 7.5L7.5 14.5 7.5 10.5 4 7.5z" fill="#1c88c8"/><path d="M7.5 4L11 7.5 7.5 11 4 7.5z" fill="#10b8f0"/><path d="M7.5 14.5L14.5 7.5H11L7.5 11z" fill="#0c70a8"/></svg></div><div style="position:absolute;left:54px;top:906.63px;font-size:15.8px;color:#f8f8f0;white-space:nowrap;line-height:1;">Error_sequence</div><div style="position:absolute;left:288px;top:906.63px;font-size:15.8px;color:#f8f8f0;white-space:nowrap;line-height:1;">0</div><div style="position:absolute;left:5px;top:924px;width:278px;height:2px;background:#fff"></div><div style="position:absolute;left:285px;top:924px;width:101px;height:2px;background:#fff"></div><div style="position:absolute;right:1344px;top:932.71px;font-size:15.7px;color:#f8f8f0;white-space:nowrap;line-height:1;">Now</div><div style="position:absolute;right:1241px;top:932.63px;font-size:15.8px;color:#f8f8f0;white-space:nowrap;line-height:1;">10000 us</div><div style="position:absolute;left:53px;top:954px;width:230px;height:24px;background:#fff"></div><div style="position:absolute;left:285px;top:954px;width:101px;height:24px;background:#fff"></div><div style="position:absolute;right:1345px;top:958.71px;font-size:15.7px;color:#000;white-space:nowrap;line-height:1;">Cursor 1</div><div style="position:absolute;left:288px;top:958.46px;font-size:16px;color:#000;white-space:nowrap;line-height:1;">9549.419 us</div><svg style="position:absolute;left:12px;top:931px;" width="38" height="14" viewBox="0 0 38 14"><path d="M1 12l4-6 3 3 3-2v5z" fill="#a0a0c0"/><rect x="11" y="3" width="12" height="9" fill="#a0c0e0" stroke="#6080a0"/><circle cx="30" cy="8" r="5" fill="#50c050"/><path d="M27 8h6M30 5v6" stroke="#fff" stroke-width="1.5"/></svg><svg style="position:absolute;left:14px;top:957px;" width="38" height="16" viewBox="0 0 38 16"><rect x="2" y="7" width="11" height="8" fill="#f0c040"/><path d="M4 7V4a3.5 3.5 0 0 1 7 0" stroke="#c0a040" fill="none" stroke-width="1.5"/><path d="M17 14l7-7M22 4a3 3 0 1 0 3 3" stroke="#6090c0" stroke-width="2" fill="none"/><circle cx="32" cy="8" r="5" fill="#e04040"/><path d="M29 8h6" stroke="#fff" stroke-width="1.5"/></svg><div style="position:absolute;left:5px;top:978px;width:381px;height:2px;background:#fff"></div><svg style="position:absolute;left:389px;top:165px" width="1204" height="813" viewBox="389 165 1204 813" shape-rendering="crispEdges" font-family="Liberation Sans, sans-serif"><rect x="389" y="165" width="1204" height="813" fill="#000"/><rect x="389" y="185" width="1204" height="2" fill="#fff"/><rect x="446" y="187" width="1" height="736" fill="#808080"/><rect x="503" y="187" width="1" height="736" fill="#808080"/><rect x="561" y="187" width="1" height="736" fill="#808080"/><rect x="618" y="187" width="1" height="736" fill="#808080"/><rect x="675" y="187" width="1" height="736" fill="#808080"/><rect x="733" y="187" width="1" height="736" fill="#808080"/><rect x="790" y="187" width="1" height="736" fill="#808080"/><rect x="847" y="187" width="1" height="736" fill="#808080"/><rect x="905" y="187" width="1" height="736" fill="#808080"/><rect x="962" y="187" width="1" height="736" fill="#808080"/><rect x="1019" y="187" width="1" height="736" fill="#808080"/><rect x="1077" y="187" width="1" height="736" fill="#808080"/><rect x="1134" y="187" width="1" height="736" fill="#808080"/><rect x="1191" y="187" width="1" height="736" fill="#808080"/><rect x="1249" y="187" width="1" height="736" fill="#808080"/><rect x="1306" y="187" width="1" height="736" fill="#808080"/><rect x="1363" y="187" width="1" height="736" fill="#808080"/><rect x="1421" y="187" width="1" height="736" fill="#808080"/><rect x="1478" y="187" width="1" height="736" fill="#808080"/><rect x="1535" y="187" width="1" height="736" fill="#808080"/><rect x="389" y="191" width="1147" height="19" fill="#00ff00"/><path d="M389 214.5L1536 214.5" stroke="#48d048" stroke-width="1"/><path d="M389.5 214L389.5 233" stroke="#70e070" stroke-width="1"/><path d="M389 237.5L1536 237.5" stroke="#48d048" stroke-width="1"/><path d="M389.5 237L389.5 256" stroke="#70e070" stroke-width="1"/><rect x="390" y="260" width="1146" height="1" fill="#c4f4c4"/><rect x="390" y="278" width="1146" height="1" fill="#c4f4c4"/><rect x="389" y="260" width="1" height="19" fill="#c4f4c4"/><text x="391" y="277" font-size="16" fill="#fff">25</text><rect x="390" y="283" width="9" height="1" fill="#c4f4c4"/><rect x="390" y="301" width="9" height="1" fill="#c4f4c4"/><rect x="402" y="283" width="8" height="1" fill="#c4f4c4"/><rect x="402" y="301" width="8" height="1" fill="#c4f4c4"/><rect x="413" y="283" width="9" height="1" fill="#c4f4c4"/><rect x="413" y="301" width="9" height="1" fill="#c4f4c4"/><rect x="425" y="283" width="8" height="1" fill="#c4f4c4"/><rect x="425" y="301" width="8" height="1" fill="#c4f4c4"/><rect x="436" y="283" width="9" height="1" fill="#c4f4c4"/><rect x="436" y="301" width="9" height="1" fill="#c4f4c4"/><rect x="448" y="283" width="8" height="1" fill="#c4f4c4"/><rect x="448" y="301" width="8" height="1" fill="#c4f4c4"/><rect x="459" y="283" width="9" height="1" fill="#c4f4c4"/><rect x="459" y="301" width="9" height="1" fill="#c4f4c4"/><rect x="471" y="283" width="20" height="1" fill="#c4f4c4"/><rect x="471" y="301" width="20" height="1" fill="#c4f4c4"/><rect x="494" y="283" width="8" height="1" fill="#c4f4c4"/><rect x="494" y="301" width="8" height="1" fill="#c4f4c4"/><rect x="505" y="283" width="8" height="1" fill="#c4f4c4"/><rect x="505" y="301" width="8" height="1" fill="#c4f4c4"/><rect x="516" y="283" width="9" height="1" fill="#c4f4c4"/><rect x="516" y="301" width="9" height="1" fill="#c4f4c4"/><rect x="528" y="283" width="8" height="1" fill="#c4f4c4"/><rect x="528" y="301" width="8" height="1" fill="#c4f4c4"/><rect x="539" y="283" width="9" height="1" fill="#c4f4c4"/><rect x="539" y="301" width="9" height="1" fill="#c4f4c4"/><rect x="551" y="283" width="8" height="1" fill="#c4f4c4"/><rect x="551" y="301" width="8" height="1" fill="#c4f4c4"/><rect x="562" y="283" width="9" height="1" fill="#c4f4c4"/><rect x="562" y="301" width="9" height="1" fill="#c4f4c4"/><rect x="574" y="283" width="8" height="1" fill="#c4f4c4"/><rect x="574" y="301" width="8" height="1" fill="#c4f4c4"/><rect x="585" y="283" width="20" height="1" fill="#c4f4c4"/><rect x="585" y="301" width="20" height="1" fill="#c4f4c4"/><rect x="608" y="283" width="9" height="1" fill="#c4f4c4"/><rect x="608" y="301" width="9" height="1" fill="#c4f4c4"/><rect x="620" y="283" width="8" height="1" fill="#c4f4c4"/><rect x="620" y="301" width="8" height="1" fill="#c4f4c4"/><rect x="631" y="283" width="9" height="1" fill="#c4f4c4"/><rect x="631" y="301" width="9" height="1" fill="#c4f4c4"/><rect x="643" y="283" width="8" height="1" fill="#c4f4c4"/><rect x="643" y="301" width="8" height="1" fill="#c4f4c4"/><rect x="654" y="283" width="9" height="1" fill="#c4f4c4"/><rect x="654" y="301" width="9" height="1" fill="#c4f4c4"/><rect x="666" y="283" width="8" height="1" fill="#c4f4c4"/><rect x="666" y="301" width="8" height="1" fill="#c4f4c4"/><rect x="677" y="283" width="8" height="1" fill="#c4f4c4"/><rect x="677" y="301" width="8" height="1" fill="#c4f4c4"/><rect x="688" y="283" width="20" height="1" fill="#c4f4c4"/><rect x="688" y="301" width="20" height="1" fill="#c4f4c4"/><rect x="711" y="283" width="9" height="1" fill="#c4f4c4"/><rect x="711" y="301" width="9" height="1" fill="#c4f4c4"/><rect x="723" y="283" width="8" height="1" fill="#c4f4c4"/><rect x="723" y="301" width="8" height="1" fill="#c4f4c4"/><rect x="734" y="283" width="20" height="1" fill="#c4f4c4"/><rect x="734" y="301" width="20" height="1" fill="#c4f4c4"/><rect x="757" y="283" width="9" height="1" fill="#c4f4c4"/><rect x="757" y="301" width="9" height="1" fill="#c4f4c4"/><rect x="769" y="283" width="8" height="1" fill="#c4f4c4"/><rect x="769" y="301" width="8" height="1" fill="#c4f4c4"/><rect x="780" y="283" width="20" height="1" fill="#c4f4c4"/><rect x="780" y="301" width="20" height="1" fill="#c4f4c4"/><rect x="803" y="283" width="9" height="1" fill="#c4f4c4"/><rect x="803" y="301" width="9" height="1" fill="#c4f4c4"/><rect x="815" y="283" width="8" height="1" fill="#c4f4c4"/><rect x="815" y="301" width="8" height="1" fill="#c4f4c4"/><rect x="826" y="283" width="9" height="1" fill="#c4f4c4"/><rect x="826" y="301" width="9" height="1" fill="#c4f4c4"/><rect x="838" y="283" width="19" height="1" fill="#c4f4c4"/><rect x="838" y="301" width="19" height="1" fill="#c4f4c4"/><rect x="860" y="283" width="9" height="1" fill="#c4f4c4"/><rect x="860" y="301" width="9" height="1" fill="#c4f4c4"/><rect x="872" y="283" width="8" height="1" fill="#c4f4c4"/><rect x="872" y="301" width="8" height="1" fill="#c4f4c4"/><rect x="883" y="283" width="9" height="1" fill="#c4f4c4"/><rect x="883" y="301" width="9" height="1" fill="#c4f4c4"/><rect x="895" y="283" width="20" height="1" fill="#c4f4c4"/><rect x="895" y="301" width="20" height="1" fill="#c4f4c4"/><rect x="918" y="283" width="8" height="1" fill="#c4f4c4"/><rect x="918" y="301" width="8" height="1" fill="#c4f4c4"/><rect x="929" y="283" width="9" height="1" fill="#c4f4c4"/><rect x="929" y="301" width="9" height="1" fill="#c4f4c4"/><rect x="941" y="283" width="8" height="1" fill="#c4f4c4"/><rect x="941" y="301" width="8" height="1" fill="#c4f4c4"/><rect x="952" y="283" width="9" height="1" fill="#c4f4c4"/><rect x="952" y="301" width="9" height="1" fill="#c4f4c4"/><rect x="964" y="283" width="8" height="1" fill="#c4f4c4"/><rect x="964" y="301" width="8" height="1" fill="#c4f4c4"/><rect x="975" y="283" width="9" height="1" fill="#c4f4c4"/><rect x="975" y="301" width="9" height="1" fill="#c4f4c4"/><rect x="987" y="283" width="8" height="1" fill="#c4f4c4"/><rect x="987" y="301" width="8" height="1" fill="#c4f4c4"/><rect x="998" y="283" width="9" height="1" fill="#c4f4c4"/><rect x="998" y="301" width="9" height="1" fill="#c4f4c4"/><rect x="1010" y="283" width="8" height="1" fill="#c4f4c4"/><rect x="1010" y="301" width="8" height="1" fill="#c4f4c4"/><rect x="1021" y="283" width="20" height="1" fill="#c4f4c4"/><rect x="1021" y="301" width="20" height="1" fill="#c4f4c4"/><rect x="1044" y="283" width="20" height="1" fill="#c4f4c4"/><rect x="1044" y="301" width="20" height="1" fill="#c4f4c4"/><rect x="1067" y="283" width="8" height="1" fill="#c4f4c4"/><rect x="1067" y="301" width="8" height="1" fill="#c4f4c4"/><rect x="1078" y="283" width="9" height="1" fill="#c4f4c4"/><rect x="1078" y="301" width="9" height="1" fill="#c4f4c4"/><rect x="1090" y="283" width="8" height="1" fill="#c4f4c4"/><rect x="1090" y="301" width="8" height="1" fill="#c4f4c4"/><rect x="1101" y="283" width="9" height="1" fill="#c4f4c4"/><rect x="1101" y="301" width="9" height="1" fill="#c4f4c4"/><rect x="1113" y="283" width="20" height="1" fill="#c4f4c4"/><rect x="1113" y="301" width="20" height="1" fill="#c4f4c4"/><rect x="1136" y="283" width="8" height="1" fill="#c4f4c4"/><rect x="1136" y="301" width="8" height="1" fill="#c4f4c4"/><rect x="1147" y="283" width="9" height="1" fill="#c4f4c4"/><rect x="1147" y="301" width="9" height="1" fill="#c4f4c4"/><rect x="1159" y="283" width="20" height="1" fill="#c4f4c4"/><rect x="1159" y="301" width="20" height="1" fill="#c4f4c4"/><rect x="1182" y="283" width="8" height="1" fill="#c4f4c4"/><rect x="1182" y="301" width="8" height="1" fill="#c4f4c4"/><rect x="1193" y="283" width="8" height="1" fill="#c4f4c4"/><rect x="1193" y="301" width="8" height="1" fill="#c4f4c4"/><rect x="1204" y="283" width="9" height="1" fill="#c4f4c4"/><rect x="1204" y="301" width="9" height="1" fill="#c4f4c4"/><rect x="1216" y="283" width="8" height="1" fill="#c4f4c4"/><rect x="1216" y="301" width="8" height="1" fill="#c4f4c4"/><rect x="1227" y="283" width="20" height="1" fill="#c4f4c4"/><rect x="1227" y="301" width="20" height="1" fill="#c4f4c4"/><rect x="1250" y="283" width="9" height="1" fill="#c4f4c4"/><rect x="1250" y="301" width="9" height="1" fill="#c4f4c4"/><rect x="1262" y="283" width="8" height="1" fill="#c4f4c4"/><rect x="1262" y="301" width="8" height="1" fill="#c4f4c4"/><rect x="1273" y="283" width="20" height="1" fill="#c4f4c4"/><rect x="1273" y="301" width="20" height="1" fill="#c4f4c4"/><rect x="1296" y="283" width="9" height="1" fill="#c4f4c4"/><rect x="1296" y="301" width="9" height="1" fill="#c4f4c4"/><rect x="1308" y="283" width="8" height="1" fill="#c4f4c4"/><rect x="1308" y="301" width="8" height="1" fill="#c4f4c4"/><rect x="1319" y="283" width="9" height="1" fill="#c4f4c4"/><rect x="1319" y="301" width="9" height="1" fill="#c4f4c4"/><rect x="1331" y="283" width="8" height="1" fill="#c4f4c4"/><rect x="1331" y="301" width="8" height="1" fill="#c4f4c4"/><rect x="1342" y="283" width="20" height="1" fill="#c4f4c4"/><rect x="1342" y="301" width="20" height="1" fill="#c4f4c4"/><rect x="1365" y="283" width="9" height="1" fill="#c4f4c4"/><rect x="1365" y="301" width="9" height="1" fill="#c4f4c4"/><rect x="1377" y="283" width="8" height="1" fill="#c4f4c4"/><rect x="1377" y="301" width="8" height="1" fill="#c4f4c4"/><rect x="1388" y="283" width="8" height="1" fill="#c4f4c4"/><rect x="1388" y="301" width="8" height="1" fill="#c4f4c4"/><rect x="1399" y="283" width="9" height="1" fill="#c4f4c4"/><rect x="1399" y="301" width="9" height="1" fill="#c4f4c4"/><rect x="1411" y="283" width="8" height="1" fill="#c4f4c4"/><rect x="1411" y="301" width="8" height="1" fill="#c4f4c4"/><rect x="1422" y="283" width="9" height="1" fill="#c4f4c4"/><rect x="1422" y="301" width="9" height="1" fill="#c4f4c4"/><rect x="1434" y="283" width="8" height="1" fill="#c4f4c4"/><rect x="1434" y="301" width="8" height="1" fill="#c4f4c4"/><rect x="1445" y="283" width="9" height="1" fill="#c4f4c4"/><rect x="1445" y="301" width="9" height="1" fill="#c4f4c4"/><rect x="1457" y="283" width="8" height="1" fill="#c4f4c4"/><rect x="1457" y="301" width="8" height="1" fill="#c4f4c4"/><rect x="1468" y="283" width="9" height="1" fill="#c4f4c4"/><rect x="1468" y="301" width="9" height="1" fill="#c4f4c4"/><rect x="1480" y="283" width="8" height="1" fill="#c4f4c4"/><rect x="1480" y="301" width="8" height="1" fill="#c4f4c4"/><rect x="1491" y="283" width="9" height="1" fill="#c4f4c4"/><rect x="1491" y="301" width="9" height="1" fill="#c4f4c4"/><rect x="1503" y="283" width="8" height="1" fill="#c4f4c4"/><rect x="1503" y="301" width="8" height="1" fill="#c4f4c4"/><rect x="1514" y="283" width="9" height="1" fill="#c4f4c4"/><rect x="1514" y="301" width="9" height="1" fill="#c4f4c4"/><rect x="1526" y="283" width="8" height="1" fill="#c4f4c4"/><rect x="1526" y="301" width="8" height="1" fill="#c4f4c4"/><rect x="388" y="283" width="1" height="19" fill="#c4f4c4"/><rect x="399" y="283" width="1" height="5" fill="#c4f4c4"/><rect x="401" y="283" width="1" height="5" fill="#c4f4c4"/><rect x="399" y="297" width="1" height="5" fill="#c4f4c4"/><rect x="401" y="297" width="1" height="5" fill="#c4f4c4"/><rect x="400" y="287" width="1" height="11" fill="#c4f4c4"/><rect x="410" y="283" width="1" height="5" fill="#c4f4c4"/><rect x="412" y="283" width="1" height="5" fill="#c4f4c4"/><rect x="410" y="297" width="1" height="5" fill="#c4f4c4"/><rect x="412" y="297" width="1" height="5" fill="#c4f4c4"/><rect x="411" y="287" width="1" height="11" fill="#c4f4c4"/><rect x="422" y="283" width="1" height="5" fill="#c4f4c4"/><rect x="424" y="283" width="1" height="5" fill="#c4f4c4"/><rect x="422" y="297" width="1" height="5" fill="#c4f4c4"/><rect x="424" y="297" width="1" height="5" fill="#c4f4c4"/><rect x="423" y="287" width="1" height="11" fill="#c4f4c4"/><rect x="433" y="283" width="1" height="5" fill="#c4f4c4"/><rect x="435" y="283" width="1" height="5" fill="#c4f4c4"/><rect x="433" y="297" width="1" height="5" fill="#c4f4c4"/><rect x="435" y="297" width="1" height="5" fill="#c4f4c4"/><rect x="434" y="287" width="1" height="11" fill="#c4f4c4"/><rect x="445" y="283" width="1" height="5" fill="#c4f4c4"/><rect x="447" y="283" width="1" height="5" fill="#c4f4c4"/><rect x="445" y="297" width="1" height="5" fill="#c4f4c4"/><rect x="447" y="297" width="1" height="5" fill="#c4f4c4"/><rect x="446" y="287" width="1" height="11" fill="#c4f4c4"/><rect x="456" y="283" width="1" height="5" fill="#c4f4c4"/><rect x="458" y="283" width="1" height="5" fill="#c4f4c4"/><rect x="456" y="297" width="1" height="5" fill="#c4f4c4"/><rect x="458" y="297" width="1" height="5" fill="#c4f4c4"/><rect x="457" y="287" width="1" height="11" fill="#c4f4c4"/><rect x="468" y="283" width="1" height="5" fill="#c4f4c4"/><rect x="470" y="283" width="1" height="5" fill="#c4f4c4"/><rect x="468" y="297" width="1" height="5" fill="#c4f4c4"/><rect x="470" y="297" width="1" height="5" fill="#c4f4c4"/><rect x="469" y="287" width="1" height="11" fill="#c4f4c4"/><rect x="491" y="283" width="1" height="5" fill="#c4f4c4"/><rect x="493" y="283" width="1" height="5" fill="#c4f4c4"/><rect x="491" y="297" width="1" height="5" fill="#c4f4c4"/><rect x="493" y="297" width="1" height="5" fill="#c4f4c4"/><rect x="492" y="287" width="1" height="11" fill="#c4f4c4"/><rect x="502" y="283" width="1" height="5" fill="#c4f4c4"/><rect x="504" y="283" width="1" height="5" fill="#c4f4c4"/><rect x="502" y="297" width="1" height="5" fill="#c4f4c4"/><rect x="504" y="297" width="1" height="5" fill="#c4f4c4"/><rect x="503" y="287" width="1" height="11" fill="#c4f4c4"/><rect x="513" y="283" width="1" height="5" fill="#c4f4c4"/><rect x="515" y="283" width="1" height="5" fill="#c4f4c4"/><rect x="513" y="297" width="1" height="5" fill="#c4f4c4"/><rect x="515" y="297" width="1" height="5" fill="#c4f4c4"/><rect x="514" y="287" width="1" height="11" fill="#c4f4c4"/><rect x="525" y="283" width="1" height="5" fill="#c4f4c4"/><rect x="527" y="283" width="1" height="5" fill="#c4f4c4"/><rect x="525" y="297" width="1" height="5" fill="#c4f4c4"/><rect x="527" y="297" width="1" height="5" fill="#c4f4c4"/><rect x="526" y="287" width="1" height="11" fill="#c4f4c4"/><rect x="536" y="283" width="1" height="5" fill="#c4f4c4"/><rect x="538" y="283" width="1" height="5" fill="#c4f4c4"/><rect x="536" y="297" width="1" height="5" fill="#c4f4c4"/><rect x="538" y="297" width="1" height="5" fill="#c4f4c4"/><rect x="537" y="287" width="1" height="11" fill="#c4f4c4"/><rect x="548" y="283" width="1" height="5" fill="#c4f4c4"/><rect x="550" y="283" width="1" height="5" fill="#c4f4c4"/><rect x="548" y="297" width="1" height="5" fill="#c4f4c4"/><rect x="550" y="297" width="1" height="5" fill="#c4f4c4"/><rect x="549" y="287" width="1" height="11" fill="#c4f4c4"/><rect x="559" y="283" width="1" height="5" fill="#c4f4c4"/><rect x="561" y="283" width="1" height="5" fill="#c4f4c4"/><rect x="559" y="297" width="1" height="5" fill="#c4f4c4"/><rect x="561" y="297" width="1" height="5" fill="#c4f4c4"/><rect x="560" y="287" width="1" height="11" fill="#c4f4c4"/><rect x="571" y="283" width="1" height="5" fill="#c4f4c4"/><rect x="573" y="283" width="1" height="5" fill="#c4f4c4"/><rect x="571" y="297" width="1" height="5" fill="#c4f4c4"/><rect x="573" y="297" width="1" height="5" fill="#c4f4c4"/><rect x="572" y="287" width="1" height="11" fill="#c4f4c4"/><rect x="582" y="283" width="1" height="5" fill="#c4f4c4"/><rect x="584" y="283" width="1" height="5" fill="#c4f4c4"/><rect x="582" y="297" width="1" height="5" fill="#c4f4c4"/><rect x="584" y="297" width="1" height="5" fill="#c4f4c4"/><rect x="583" y="287" width="1" height="11" fill="#c4f4c4"/><rect x="605" y="283" width="1" height="5" fill="#c4f4c4"/><rect x="607" y="283" width="1" height="5" fill="#c4f4c4"/><rect x="605" y="297" width="1" height="5" fill="#c4f4c4"/><rect x="607" y="297" width="1" height="5" fill="#c4f4c4"/><rect x="606" y="287" width="1" height="11" fill="#c4f4c4"/><rect x="617" y="283" width="1" height="5" fill="#c4f4c4"/><rect x="619" y="283" width="1" height="5" fill="#c4f4c4"/><rect x="617" y="297" width="1" height="5" fill="#c4f4c4"/><rect x="619" y="297" width="1" height="5" fill="#c4f4c4"/><rect x="618" y="287" width="1" height="11" fill="#c4f4c4"/><rect x="628" y="283" width="1" height="5" fill="#c4f4c4"/><rect x="630" y="283" width="1" height="5" fill="#c4f4c4"/><rect x="628" y="297" width="1" height="5" fill="#c4f4c4"/><rect x="630" y="297" width="1" height="5" fill="#c4f4c4"/><rect x="629" y="287" width="1" height="11" fill="#c4f4c4"/><rect x="640" y="283" width="1" height="5" fill="#c4f4c4"/><rect x="642" y="283" width="1" height="5" fill="#c4f4c4"/><rect x="640" y="297" width="1" height="5" fill="#c4f4c4"/><rect x="642" y="297" width="1" height="5" fill="#c4f4c4"/><rect x="641" y="287" width="1" height="11" fill="#c4f4c4"/><rect x="651" y="283" width="1" height="5" fill="#c4f4c4"/><rect x="653" y="283" width="1" height="5" fill="#c4f4c4"/><rect x="651" y="297" width="1" height="5" fill="#c4f4c4"/><rect x="653" y="297" width="1" height="5" fill="#c4f4c4"/><rect x="652" y="287" width="1" height="11" fill="#c4f4c4"/><rect x="663" y="283" width="1" height="5" fill="#c4f4c4"/><rect x="665" y="283" width="1" height="5" fill="#c4f4c4"/><rect x="663" y="297" width="1" height="5" fill="#c4f4c4"/><rect x="665" y="297" width="1" height="5" fill="#c4f4c4"/><rect x="664" y="287" width="1" height="11" fill="#c4f4c4"/><rect x="674" y="283" width="1" height="5" fill="#c4f4c4"/><rect x="676" y="283" width="1" height="5" fill="#c4f4c4"/><rect x="674" y="297" width="1" height="5" fill="#c4f4c4"/><rect x="676" y="297" width="1" height="5" fill="#c4f4c4"/><rect x="675" y="287" width="1" height="11" fill="#c4f4c4"/><rect x="685" y="283" width="1" height="5" fill="#c4f4c4"/><rect x="687" y="283" width="1" height="5" fill="#c4f4c4"/><rect x="685" y="297" width="1" height="5" fill="#c4f4c4"/><rect x="687" y="297" width="1" height="5" fill="#c4f4c4"/><rect x="686" y="287" width="1" height="11" fill="#c4f4c4"/><rect x="708" y="283" width="1" height="5" fill="#c4f4c4"/><rect x="710" y="283" width="1" height="5" fill="#c4f4c4"/><rect x="708" y="297" width="1" height="5" fill="#c4f4c4"/><rect x="710" y="297" width="1" height="5" fill="#c4f4c4"/><rect x="709" y="287" width="1" height="11" fill="#c4f4c4"/><rect x="720" y="283" width="1" height="5" fill="#c4f4c4"/><rect x="722" y="283" width="1" height="5" fill="#c4f4c4"/><rect x="720" y="297" width="1" height="5" fill="#c4f4c4"/><rect x="722" y="297" width="1" height="5" fill="#c4f4c4"/><rect x="721" y="287" width="1" height="11" fill="#c4f4c4"/><rect x="731" y="283" width="1" height="5" fill="#c4f4c4"/><rect x="733" y="283" width="1" height="5" fill="#c4f4c4"/><rect x="731" y="297" width="1" height="5" fill="#c4f4c4"/><rect x="733" y="297" width="1" height="5" fill="#c4f4c4"/><rect x="732" y="287" width="1" height="11" fill="#c4f4c4"/><rect x="754" y="283" width="4" height="5" fill="#c4f4c4"/><rect x="754" y="297" width="4" height="5" fill="#c4f4c4"/><rect x="755" y="287" width="2" height="11" fill="#c4f4c4"/><rect x="766" y="283" width="1" height="5" fill="#c4f4c4"/><rect x="768" y="283" width="1" height="5" fill="#c4f4c4"/><rect x="766" y="297" width="1" height="5" fill="#c4f4c4"/><rect x="768" y="297" width="1" height="5" fill="#c4f4c4"/><rect x="767" y="287" width="1" height="11" fill="#c4f4c4"/><rect x="777" y="283" width="1" height="5" fill="#c4f4c4"/><rect x="779" y="283" width="1" height="5" fill="#c4f4c4"/><rect x="777" y="297" width="1" height="5" fill="#c4f4c4"/><rect x="779" y="297" width="1" height="5" fill="#c4f4c4"/><rect x="778" y="287" width="1" height="11" fill="#c4f4c4"/><rect x="800" y="283" width="1" height="5" fill="#c4f4c4"/><rect x="802" y="283" width="1" height="5" fill="#c4f4c4"/><rect x="800" y="297" width="1" height="5" fill="#c4f4c4"/><rect x="802" y="297" width="1" height="5" fill="#c4f4c4"/><rect x="801" y="287" width="1" height="11" fill="#c4f4c4"/><rect x="812" y="283" width="1" height="5" fill="#c4f4c4"/><rect x="814" y="283" width="1" height="5" fill="#c4f4c4"/><rect x="812" y="297" width="1" height="5" fill="#c4f4c4"/><rect x="814" y="297" width="1" height="5" fill="#c4f4c4"/><rect x="813" y="287" width="1" height="11" fill="#c4f4c4"/><rect x="823" y="283" width="1" height="5" fill="#c4f4c4"/><rect x="825" y="283" width="1" height="5" fill="#c4f4c4"/><rect x="823" y="297" width="1" height="5" fill="#c4f4c4"/><rect x="825" y="297" width="1" height="5" fill="#c4f4c4"/><rect x="824" y="287" width="1" height="11" fill="#c4f4c4"/><rect x="835" y="283" width="1" height="5" fill="#c4f4c4"/><rect x="837" y="283" width="1" height="5" fill="#c4f4c4"/><rect x="835" y="297" width="1" height="5" fill="#c4f4c4"/><rect x="837" y="297" width="1" height="5" fill="#c4f4c4"/><rect x="836" y="287" width="1" height="11" fill="#c4f4c4"/><rect x="857" y="283" width="1" height="5" fill="#c4f4c4"/><rect x="859" y="283" width="1" height="5" fill="#c4f4c4"/><rect x="857" y="297" width="1" height="5" fill="#c4f4c4"/><rect x="859" y="297" width="1" height="5" fill="#c4f4c4"/><rect x="858" y="287" width="1" height="11" fill="#c4f4c4"/><rect x="869" y="283" width="1" height="5" fill="#c4f4c4"/><rect x="871" y="283" width="1" height="5" fill="#c4f4c4"/><rect x="869" y="297" width="1" height="5" fill="#c4f4c4"/><rect x="871" y="297" width="1" height="5" fill="#c4f4c4"/><rect x="870" y="287" width="1" height="11" fill="#c4f4c4"/><rect x="880" y="283" width="1" height="5" fill="#c4f4c4"/><rect x="882" y="283" width="1" height="5" fill="#c4f4c4"/><rect x="880" y="297" width="1" height="5" fill="#c4f4c4"/><rect x="882" y="297" width="1" height="5" fill="#c4f4c4"/><rect x="881" y="287" width="1" height="11" fill="#c4f4c4"/><rect x="892" y="283" width="1" height="5" fill="#c4f4c4"/><rect x="894" y="283" width="1" height="5" fill="#c4f4c4"/><rect x="892" y="297" width="1" height="5" fill="#c4f4c4"/><rect x="894" y="297" width="1" height="5" fill="#c4f4c4"/><rect x="893" y="287" width="1" height="11" fill="#c4f4c4"/><rect x="915" y="283" width="1" height="5" fill="#c4f4c4"/><rect x="917" y="283" width="1" height="5" fill="#c4f4c4"/><rect x="915" y="297" width="1" height="5" fill="#c4f4c4"/><rect x="917" y="297" width="1" height="5" fill="#c4f4c4"/><rect x="916" y="287" width="1" height="11" fill="#c4f4c4"/><rect x="926" y="283" width="4" height="5" fill="#c4f4c4"/><rect x="926" y="297" width="4" height="5" fill="#c4f4c4"/><rect x="927" y="287" width="2" height="11" fill="#c4f4c4"/><rect x="938" y="283" width="1" height="5" fill="#c4f4c4"/><rect x="940" y="283" width="1" height="5" fill="#c4f4c4"/><rect x="938" y="297" width="1" height="5" fill="#c4f4c4"/><rect x="940" y="297" width="1" height="5" fill="#c4f4c4"/><rect x="939" y="287" width="1" height="11" fill="#c4f4c4"/><rect x="949" y="283" width="1" height="5" fill="#c4f4c4"/><rect x="951" y="283" width="1" height="5" fill="#c4f4c4"/><rect x="949" y="297" width="1" height="5" fill="#c4f4c4"/><rect x="951" y="297" width="1" height="5" fill="#c4f4c4"/><rect x="950" y="287" width="1" height="11" fill="#c4f4c4"/><rect x="961" y="283" width="1" height="5" fill="#c4f4c4"/><rect x="963" y="283" width="1" height="5" fill="#c4f4c4"/><rect x="961" y="297" width="1" height="5" fill="#c4f4c4"/><rect x="963" y="297" width="1" height="5" fill="#c4f4c4"/><rect x="962" y="287" width="1" height="11" fill="#c4f4c4"/><rect x="972" y="283" width="1" height="5" fill="#c4f4c4"/><rect x="974" y="283" width="1" height="5" fill="#c4f4c4"/><rect x="972" y="297" width="1" height="5" fill="#c4f4c4"/><rect x="974" y="297" width="1" height="5" fill="#c4f4c4"/><rect x="973" y="287" width="1" height="11" fill="#c4f4c4"/><rect x="984" y="283" width="1" height="5" fill="#c4f4c4"/><rect x="986" y="283" width="1" height="5" fill="#c4f4c4"/><rect x="984" y="297" width="1" height="5" fill="#c4f4c4"/><rect x="986" y="297" width="1" height="5" fill="#c4f4c4"/><rect x="985" y="287" width="1" height="11" fill="#c4f4c4"/><rect x="995" y="283" width="1" height="5" fill="#c4f4c4"/><rect x="997" y="283" width="1" height="5" fill="#c4f4c4"/><rect x="995" y="297" width="1" height="5" fill="#c4f4c4"/><rect x="997" y="297" width="1" height="5" fill="#c4f4c4"/><rect x="996" y="287" width="1" height="11" fill="#c4f4c4"/><rect x="1007" y="283" width="1" height="5" fill="#c4f4c4"/><rect x="1009" y="283" width="1" height="5" fill="#c4f4c4"/><rect x="1007" y="297" width="1" height="5" fill="#c4f4c4"/><rect x="1009" y="297" width="1" height="5" fill="#c4f4c4"/><rect x="1008" y="287" width="1" height="11" fill="#c4f4c4"/><rect x="1018" y="283" width="1" height="5" fill="#c4f4c4"/><rect x="1020" y="283" width="1" height="5" fill="#c4f4c4"/><rect x="1018" y="297" width="1" height="5" fill="#c4f4c4"/><rect x="1020" y="297" width="1" height="5" fill="#c4f4c4"/><rect x="1019" y="287" width="1" height="11" fill="#c4f4c4"/><rect x="1041" y="283" width="1" height="5" fill="#c4f4c4"/><rect x="1043" y="283" width="1" height="5" fill="#c4f4c4"/><rect x="1041" y="297" width="1" height="5" fill="#c4f4c4"/><rect x="1043" y="297" width="1" height="5" fill="#c4f4c4"/><rect x="1042" y="287" width="1" height="11" fill="#c4f4c4"/><rect x="1064" y="283" width="1" height="5" fill="#c4f4c4"/><rect x="1066" y="283" width="1" height="5" fill="#c4f4c4"/><rect x="1064" y="297" width="1" height="5" fill="#c4f4c4"/><rect x="1066" y="297" width="1" height="5" fill="#c4f4c4"/><rect x="1065" y="287" width="1" height="11" fill="#c4f4c4"/><rect x="1075" y="283" width="1" height="5" fill="#c4f4c4"/><rect x="1077" y="283" width="1" height="5" fill="#c4f4c4"/><rect x="1075" y="297" width="1" height="5" fill="#c4f4c4"/><rect x="1077" y="297" width="1" height="5" fill="#c4f4c4"/><rect x="1076" y="287" width="1" height="11" fill="#c4f4c4"/><rect x="1087" y="283" width="1" height="5" fill="#c4f4c4"/><rect x="1089" y="283" width="1" height="5" fill="#c4f4c4"/><rect x="1087" y="297" width="1" height="5" fill="#c4f4c4"/><rect x="1089" y="297" width="1" height="5" fill="#c4f4c4"/><rect x="1088" y="287" width="1" height="11" fill="#c4f4c4"/><rect x="1098" y="283" width="4" height="5" fill="#c4f4c4"/><rect x="1098" y="297" width="4" height="5" fill="#c4f4c4"/><rect x="1099" y="287" width="2" height="11" fill="#c4f4c4"/><rect x="1110" y="283" width="1" height="5" fill="#c4f4c4"/><rect x="1112" y="283" width="1" height="5" fill="#c4f4c4"/><rect x="1110" y="297" width="1" height="5" fill="#c4f4c4"/><rect x="1112" y="297" width="1" height="5" fill="#c4f4c4"/><rect x="1111" y="287" width="1" height="11" fill="#c4f4c4"/><rect x="1133" y="283" width="1" height="5" fill="#c4f4c4"/><rect x="1135" y="283" width="1" height="5" fill="#c4f4c4"/><rect x="1133" y="297" width="1" height="5" fill="#c4f4c4"/><rect x="1135" y="297" width="1" height="5" fill="#c4f4c4"/><rect x="1134" y="287" width="1" height="11" fill="#c4f4c4"/><rect x="1144" y="283" width="1" height="5" fill="#c4f4c4"/><rect x="1146" y="283" width="1" height="5" fill="#c4f4c4"/><rect x="1144" y="297" width="1" height="5" fill="#c4f4c4"/><rect x="1146" y="297" width="1" height="5" fill="#c4f4c4"/><rect x="1145" y="287" width="1" height="11" fill="#c4f4c4"/><rect x="1156" y="283" width="1" height="5" fill="#c4f4c4"/><rect x="1158" y="283" width="1" height="5" fill="#c4f4c4"/><rect x="1156" y="297" width="1" height="5" fill="#c4f4c4"/><rect x="1158" y="297" width="1" height="5" fill="#c4f4c4"/><rect x="1157" y="287" width="1" height="11" fill="#c4f4c4"/><rect x="1179" y="283" width="1" height="5" fill="#c4f4c4"/><rect x="1181" y="283" width="1" height="5" fill="#c4f4c4"/><rect x="1179" y="297" width="1" height="5" fill="#c4f4c4"/><rect x="1181" y="297" width="1" height="5" fill="#c4f4c4"/><rect x="1180" y="287" width="1" height="11" fill="#c4f4c4"/><rect x="1190" y="283" width="1" height="5" fill="#c4f4c4"/><rect x="1192" y="283" width="1" height="5" fill="#c4f4c4"/><rect x="1190" y="297" width="1" height="5" fill="#c4f4c4"/><rect x="1192" y="297" width="1" height="5" fill="#c4f4c4"/><rect x="1191" y="287" width="1" height="11" fill="#c4f4c4"/><rect x="1201" y="283" width="1" height="5" fill="#c4f4c4"/><rect x="1203" y="283" width="1" height="5" fill="#c4f4c4"/><rect x="1201" y="297" width="1" height="5" fill="#c4f4c4"/><rect x="1203" y="297" width="1" height="5" fill="#c4f4c4"/><rect x="1202" y="287" width="1" height="11" fill="#c4f4c4"/><rect x="1213" y="283" width="1" height="5" fill="#c4f4c4"/><rect x="1215" y="283" width="1" height="5" fill="#c4f4c4"/><rect x="1213" y="297" width="1" height="5" fill="#c4f4c4"/><rect x="1215" y="297" width="1" height="5" fill="#c4f4c4"/><rect x="1214" y="287" width="1" height="11" fill="#c4f4c4"/><rect x="1224" y="283" width="1" height="5" fill="#c4f4c4"/><rect x="1226" y="283" width="1" height="5" fill="#c4f4c4"/><rect x="1224" y="297" width="1" height="5" fill="#c4f4c4"/><rect x="1226" y="297" width="1" height="5" fill="#c4f4c4"/><rect x="1225" y="287" width="1" height="11" fill="#c4f4c4"/><rect x="1247" y="283" width="1" height="5" fill="#c4f4c4"/><rect x="1249" y="283" width="1" height="5" fill="#c4f4c4"/><rect x="1247" y="297" width="1" height="5" fill="#c4f4c4"/><rect x="1249" y="297" width="1" height="5" fill="#c4f4c4"/><rect x="1248" y="287" width="1" height="11" fill="#c4f4c4"/><rect x="1259" y="283" width="1" height="5" fill="#c4f4c4"/><rect x="1261" y="283" width="1" height="5" fill="#c4f4c4"/><rect x="1259" y="297" width="1" height="5" fill="#c4f4c4"/><rect x="1261" y="297" width="1" height="5" fill="#c4f4c4"/><rect x="1260" y="287" width="1" height="11" fill="#c4f4c4"/><rect x="1270" y="283" width="1" height="5" fill="#c4f4c4"/><rect x="1272" y="283" width="1" height="5" fill="#c4f4c4"/><rect x="1270" y="297" width="1" height="5" fill="#c4f4c4"/><rect x="1272" y="297" width="1" height="5" fill="#c4f4c4"/><rect x="1271" y="287" width="1" height="11" fill="#c4f4c4"/><rect x="1293" y="283" width="1" height="5" fill="#c4f4c4"/><rect x="1295" y="283" width="1" height="5" fill="#c4f4c4"/><rect x="1293" y="297" width="1" height="5" fill="#c4f4c4"/><rect x="1295" y="297" width="1" height="5" fill="#c4f4c4"/><rect x="1294" y="287" width="1" height="11" fill="#c4f4c4"/><rect x="1305" y="283" width="1" height="5" fill="#c4f4c4"/><rect x="1307" y="283" width="1" height="5" fill="#c4f4c4"/><rect x="1305" y="297" width="1" height="5" fill="#c4f4c4"/><rect x="1307" y="297" width="1" height="5" fill="#c4f4c4"/><rect x="1306" y="287" width="1" height="11" fill="#c4f4c4"/><rect x="1316" y="283" width="1" height="5" fill="#c4f4c4"/><rect x="1318" y="283" width="1" height="5" fill="#c4f4c4"/><rect x="1316" y="297" width="1" height="5" fill="#c4f4c4"/><rect x="1318" y="297" width="1" height="5" fill="#c4f4c4"/><rect x="1317" y="287" width="1" height="11" fill="#c4f4c4"/><rect x="1328" y="283" width="1" height="5" fill="#c4f4c4"/><rect x="1330" y="283" width="1" height="5" fill="#c4f4c4"/><rect x="1328" y="297" width="1" height="5" fill="#c4f4c4"/><rect x="1330" y="297" width="1" height="5" fill="#c4f4c4"/><rect x="1329" y="287" width="1" height="11" fill="#c4f4c4"/><rect x="1339" y="283" width="1" height="5" fill="#c4f4c4"/><rect x="1341" y="283" width="1" height="5" fill="#c4f4c4"/><rect x="1339" y="297" width="1" height="5" fill="#c4f4c4"/><rect x="1341" y="297" width="1" height="5" fill="#c4f4c4"/><rect x="1340" y="287" width="1" height="11" fill="#c4f4c4"/><rect x="1362" y="283" width="1" height="5" fill="#c4f4c4"/><rect x="1364" y="283" width="1" height="5" fill="#c4f4c4"/><rect x="1362" y="297" width="1" height="5" fill="#c4f4c4"/><rect x="1364" y="297" width="1" height="5" fill="#c4f4c4"/><rect x="1363" y="287" width="1" height="11" fill="#c4f4c4"/><rect x="1374" y="283" width="1" height="5" fill="#c4f4c4"/><rect x="1376" y="283" width="1" height="5" fill="#c4f4c4"/><rect x="1374" y="297" width="1" height="5" fill="#c4f4c4"/><rect x="1376" y="297" width="1" height="5" fill="#c4f4c4"/><rect x="1375" y="287" width="1" height="11" fill="#c4f4c4"/><rect x="1385" y="283" width="1" height="5" fill="#c4f4c4"/><rect x="1387" y="283" width="1" height="5" fill="#c4f4c4"/><rect x="1385" y="297" width="1" height="5" fill="#c4f4c4"/><rect x="1387" y="297" width="1" height="5" fill="#c4f4c4"/><rect x="1386" y="287" width="1" height="11" fill="#c4f4c4"/><rect x="1396" y="283" width="1" height="5" fill="#c4f4c4"/><rect x="1398" y="283" width="1" height="5" fill="#c4f4c4"/><rect x="1396" y="297" width="1" height="5" fill="#c4f4c4"/><rect x="1398" y="297" width="1" height="5" fill="#c4f4c4"/><rect x="1397" y="287" width="1" height="11" fill="#c4f4c4"/><rect x="1408" y="283" width="1" height="5" fill="#c4f4c4"/><rect x="1410" y="283" width="1" height="5" fill="#c4f4c4"/><rect x="1408" y="297" width="1" height="5" fill="#c4f4c4"/><rect x="1410" y="297" width="1" height="5" fill="#c4f4c4"/><rect x="1409" y="287" width="1" height="11" fill="#c4f4c4"/><rect x="1419" y="283" width="1" height="5" fill="#c4f4c4"/><rect x="1421" y="283" width="1" height="5" fill="#c4f4c4"/><rect x="1419" y="297" width="1" height="5" fill="#c4f4c4"/><rect x="1421" y="297" width="1" height="5" fill="#c4f4c4"/><rect x="1420" y="287" width="1" height="11" fill="#c4f4c4"/><rect x="1431" y="283" width="1" height="5" fill="#c4f4c4"/><rect x="1433" y="283" width="1" height="5" fill="#c4f4c4"/><rect x="1431" y="297" width="1" height="5" fill="#c4f4c4"/><rect x="1433" y="297" width="1" height="5" fill="#c4f4c4"/><rect x="1432" y="287" width="1" height="11" fill="#c4f4c4"/><rect x="1442" y="283" width="1" height="5" fill="#c4f4c4"/><rect x="1444" y="283" width="1" height="5" fill="#c4f4c4"/><rect x="1442" y="297" width="1" height="5" fill="#c4f4c4"/><rect x="1444" y="297" width="1" height="5" fill="#c4f4c4"/><rect x="1443" y="287" width="1" height="11" fill="#c4f4c4"/><rect x="1454" y="283" width="1" height="5" fill="#c4f4c4"/><rect x="1456" y="283" width="1" height="5" fill="#c4f4c4"/><rect x="1454" y="297" width="1" height="5" fill="#c4f4c4"/><rect x="1456" y="297" width="1" height="5" fill="#c4f4c4"/><rect x="1455" y="287" width="1" height="11" fill="#c4f4c4"/><rect x="1465" y="283" width="1" height="5" fill="#c4f4c4"/><rect x="1467" y="283" width="1" height="5" fill="#c4f4c4"/><rect x="1465" y="297" width="1" height="5" fill="#c4f4c4"/><rect x="1467" y="297" width="1" height="5" fill="#c4f4c4"/><rect x="1466" y="287" width="1" height="11" fill="#c4f4c4"/><rect x="1477" y="283" width="1" height="5" fill="#c4f4c4"/><rect x="1479" y="283" width="1" height="5" fill="#c4f4c4"/><rect x="1477" y="297" width="1" height="5" fill="#c4f4c4"/><rect x="1479" y="297" width="1" height="5" fill="#c4f4c4"/><rect x="1478" y="287" width="1" height="11" fill="#c4f4c4"/><rect x="1488" y="283" width="1" height="5" fill="#c4f4c4"/><rect x="1490" y="283" width="1" height="5" fill="#c4f4c4"/><rect x="1488" y="297" width="1" height="5" fill="#c4f4c4"/><rect x="1490" y="297" width="1" height="5" fill="#c4f4c4"/><rect x="1489" y="287" width="1" height="11" fill="#c4f4c4"/><rect x="1500" y="283" width="1" height="5" fill="#c4f4c4"/><rect x="1502" y="283" width="1" height="5" fill="#c4f4c4"/><rect x="1500" y="297" width="1" height="5" fill="#c4f4c4"/><rect x="1502" y="297" width="1" height="5" fill="#c4f4c4"/><rect x="1501" y="287" width="1" height="11" fill="#c4f4c4"/><rect x="1511" y="283" width="1" height="5" fill="#c4f4c4"/><rect x="1513" y="283" width="1" height="5" fill="#c4f4c4"/><rect x="1511" y="297" width="1" height="5" fill="#c4f4c4"/><rect x="1513" y="297" width="1" height="5" fill="#c4f4c4"/><rect x="1512" y="287" width="1" height="11" fill="#c4f4c4"/><rect x="1523" y="283" width="1" height="5" fill="#c4f4c4"/><rect x="1525" y="283" width="1" height="5" fill="#c4f4c4"/><rect x="1523" y="297" width="1" height="5" fill="#c4f4c4"/><rect x="1525" y="297" width="1" height="5" fill="#c4f4c4"/><rect x="1524" y="287" width="1" height="11" fill="#c4f4c4"/><rect x="1534" y="283" width="1" height="5" fill="#c4f4c4"/><rect x="1535" y="287" width="1" height="11" fill="#c4f4c4"/><rect x="1534" y="297" width="1" height="5" fill="#c4f4c4"/><text x="471" y="300" font-size="16" fill="#fff">88</text><text x="585" y="300" font-size="16" fill="#fff">76</text><text x="688" y="300" font-size="16" fill="#fff">64</text><text x="734" y="300" font-size="16" fill="#fff">59</text><text x="780" y="300" font-size="16" fill="#fff">53</text><text x="838" y="300" font-size="16" fill="#fff">47</text><text x="895" y="300" font-size="16" fill="#fff">40</text><text x="1021" y="300" font-size="16" fill="#fff">25</text><text x="1044" y="300" font-size="16" fill="#fff">26</text><text x="1113" y="300" font-size="16" fill="#fff">25</text><text x="1159" y="300" font-size="16" fill="#fff">26</text><text x="1227" y="300" font-size="16" fill="#fff">25</text><text x="1273" y="300" font-size="16" fill="#fff">26</text><text x="1342" y="300" font-size="16" fill="#fff">26</text><path d="M389 324.5L1536 324.5" stroke="#48d048" stroke-width="1"/><path d="M389.5 306L389.5 325" stroke="#70e070" stroke-width="1"/><rect x="400" y="306" width="1" height="19" fill="#48d048"/><rect x="411" y="306" width="2" height="19" fill="#48d048"/><rect x="423" y="306" width="1" height="19" fill="#48d048"/><rect x="434" y="306" width="1" height="19" fill="#48d048"/><rect x="446" y="306" width="1" height="19" fill="#48d048"/><rect x="457" y="306" width="1" height="19" fill="#48d048"/><rect x="469" y="306" width="1" height="19" fill="#48d048"/><rect x="480" y="306" width="1" height="19" fill="#48d048"/><rect x="492" y="306" width="1" height="19" fill="#48d048"/><rect x="503" y="306" width="1" height="19" fill="#48d048"/><rect x="514" y="306" width="1" height="19" fill="#48d048"/><rect x="526" y="306" width="1" height="19" fill="#48d048"/><rect x="537" y="306" width="1" height="19" fill="#48d048"/><rect x="549" y="306" width="1" height="19" fill="#48d048"/><rect x="560" y="306" width="1" height="19" fill="#48d048"/><rect x="572" y="306" width="1" height="19" fill="#48d048"/><rect x="583" y="306" width="2" height="19" fill="#48d048"/><rect x="595" y="306" width="1" height="19" fill="#48d048"/><rect x="606" y="306" width="1" height="19" fill="#48d048"/><rect x="618" y="306" width="1" height="19" fill="#48d048"/><rect x="629" y="306" width="1" height="19" fill="#48d048"/><rect x="641" y="306" width="1" height="19" fill="#48d048"/><rect x="652" y="306" width="1" height="19" fill="#48d048"/><rect x="664" y="306" width="1" height="19" fill="#48d048"/><rect x="675" y="306" width="1" height="19" fill="#48d048"/><rect x="686" y="306" width="1" height="19" fill="#48d048"/><rect x="698" y="306" width="1" height="19" fill="#48d048"/><rect x="709" y="306" width="1" height="19" fill="#48d048"/><rect x="721" y="306" width="1" height="19" fill="#48d048"/><rect x="732" y="306" width="1" height="19" fill="#48d048"/><rect x="744" y="306" width="1" height="19" fill="#48d048"/><rect x="755" y="306" width="2" height="19" fill="#48d048"/><rect x="767" y="306" width="1" height="19" fill="#48d048"/><rect x="778" y="306" width="1" height="19" fill="#48d048"/><rect x="790" y="306" width="1" height="19" fill="#48d048"/><rect x="801" y="306" width="1" height="19" fill="#48d048"/><rect x="813" y="306" width="1" height="19" fill="#48d048"/><rect x="824" y="306" width="1" height="19" fill="#48d048"/><rect x="836" y="306" width="1" height="19" fill="#48d048"/><rect x="847" y="306" width="1" height="19" fill="#48d048"/><rect x="858" y="306" width="1" height="19" fill="#48d048"/><rect x="870" y="306" width="1" height="19" fill="#48d048"/><rect x="881" y="306" width="1" height="19" fill="#48d048"/><rect x="893" y="306" width="1" height="19" fill="#48d048"/><rect x="904" y="306" width="1" height="19" fill="#48d048"/><rect x="916" y="306" width="1" height="19" fill="#48d048"/><rect x="927" y="306" width="2" height="19" fill="#48d048"/><rect x="939" y="306" width="1" height="19" fill="#48d048"/><rect x="950" y="306" width="1" height="19" fill="#48d048"/><rect x="962" y="306" width="1" height="19" fill="#48d048"/><rect x="973" y="306" width="1" height="19" fill="#48d048"/><rect x="985" y="306" width="1" height="19" fill="#48d048"/><rect x="996" y="306" width="1" height="19" fill="#48d048"/><rect x="1008" y="306" width="1" height="19" fill="#48d048"/><rect x="1019" y="306" width="1" height="19" fill="#48d048"/><rect x="1030" y="306" width="1" height="19" fill="#48d048"/><rect x="1042" y="306" width="1" height="19" fill="#48d048"/><rect x="1053" y="306" width="1" height="19" fill="#48d048"/><rect x="1065" y="306" width="1" height="19" fill="#48d048"/><rect x="1076" y="306" width="1" height="19" fill="#48d048"/><rect x="1088" y="306" width="1" height="19" fill="#48d048"/><rect x="1099" y="306" width="2" height="19" fill="#48d048"/><rect x="1111" y="306" width="1" height="19" fill="#48d048"/><rect x="1122" y="306" width="1" height="19" fill="#48d048"/><rect x="1134" y="306" width="1" height="19" fill="#48d048"/><rect x="1145" y="306" width="1" height="19" fill="#48d048"/><rect x="1157" y="306" width="1" height="19" fill="#48d048"/><rect x="1168" y="306" width="1" height="19" fill="#48d048"/><rect x="1180" y="306" width="1" height="19" fill="#48d048"/><rect x="1191" y="306" width="1" height="19" fill="#48d048"/><rect x="1202" y="306" width="1" height="19" fill="#48d048"/><rect x="1214" y="306" width="1" height="19" fill="#48d048"/><rect x="1225" y="306" width="1" height="19" fill="#48d048"/><rect x="1237" y="306" width="1" height="19" fill="#48d048"/><rect x="1248" y="306" width="1" height="19" fill="#48d048"/><rect x="1260" y="306" width="1" height="19" fill="#48d048"/><rect x="1271" y="306" width="2" height="19" fill="#48d048"/><rect x="1283" y="306" width="1" height="19" fill="#48d048"/><rect x="1294" y="306" width="1" height="19" fill="#48d048"/><rect x="1306" y="306" width="1" height="19" fill="#48d048"/><rect x="1317" y="306" width="1" height="19" fill="#48d048"/><rect x="1329" y="306" width="1" height="19" fill="#48d048"/><rect x="1340" y="306" width="1" height="19" fill="#48d048"/><rect x="1352" y="306" width="1" height="19" fill="#48d048"/><rect x="1363" y="306" width="1" height="19" fill="#48d048"/><rect x="1375" y="306" width="1" height="19" fill="#48d048"/><rect x="1386" y="306" width="1" height="19" fill="#48d048"/><rect x="1397" y="306" width="1" height="19" fill="#48d048"/><rect x="1409" y="306" width="1" height="19" fill="#48d048"/><rect x="1420" y="306" width="1" height="19" fill="#48d048"/><rect x="1432" y="306" width="1" height="19" fill="#48d048"/><rect x="1443" y="306" width="1" height="19" fill="#48d048"/><rect x="1455" y="306" width="1" height="19" fill="#48d048"/><rect x="1466" y="306" width="1" height="19" fill="#48d048"/><rect x="1478" y="306" width="1" height="19" fill="#48d048"/><rect x="1489" y="306" width="1" height="19" fill="#48d048"/><rect x="1501" y="306" width="1" height="19" fill="#48d048"/><rect x="1512" y="306" width="1" height="19" fill="#48d048"/><rect x="1524" y="306" width="1" height="19" fill="#48d048"/><path d="M389.5 329L389.5 348" stroke="#70e070" stroke-width="1"/><rect x="388" y="329" width="632" height="1" fill="#48d048"/><rect x="1019" y="347" width="24" height="1" fill="#48d048"/><rect x="1019" y="329" width="1" height="19" fill="#48d048"/><rect x="1042" y="329" width="47" height="1" fill="#48d048"/><rect x="1042" y="329" width="1" height="19" fill="#48d048"/><rect x="1088" y="347" width="47" height="1" fill="#48d048"/><rect x="1088" y="329" width="1" height="19" fill="#48d048"/><rect x="1134" y="329" width="12" height="1" fill="#48d048"/><rect x="1134" y="329" width="1" height="19" fill="#48d048"/><rect x="1145" y="347" width="13" height="1" fill="#48d048"/><rect x="1145" y="329" width="1" height="19" fill="#48d048"/><rect x="1157" y="329" width="46" height="1" fill="#48d048"/><rect x="1157" y="329" width="1" height="19" fill="#48d048"/><rect x="1202" y="347" width="47" height="1" fill="#48d048"/><rect x="1202" y="329" width="1" height="19" fill="#48d048"/><rect x="1248" y="329" width="13" height="1" fill="#48d048"/><rect x="1248" y="329" width="1" height="19" fill="#48d048"/><rect x="1260" y="347" width="12" height="1" fill="#48d048"/><rect x="1260" y="329" width="1" height="19" fill="#48d048"/><rect x="1271" y="329" width="47" height="1" fill="#48d048"/><rect x="1271" y="329" width="1" height="19" fill="#48d048"/><rect x="1317" y="347" width="13" height="1" fill="#48d048"/><rect x="1317" y="329" width="1" height="19" fill="#48d048"/><rect x="1329" y="329" width="35" height="1" fill="#48d048"/><rect x="1329" y="329" width="1" height="19" fill="#48d048"/><rect x="1363" y="347" width="13" height="1" fill="#48d048"/><rect x="1363" y="329" width="1" height="19" fill="#48d048"/><rect x="1375" y="329" width="35" height="1" fill="#48d048"/><rect x="1375" y="329" width="1" height="19" fill="#48d048"/><rect x="1409" y="347" width="35" height="1" fill="#48d048"/><rect x="1409" y="329" width="1" height="19" fill="#48d048"/><rect x="1443" y="329" width="47" height="1" fill="#48d048"/><rect x="1443" y="329" width="1" height="19" fill="#48d048"/><rect x="1489" y="347" width="13" height="1" fill="#48d048"/><rect x="1489" y="329" width="1" height="19" fill="#48d048"/><rect x="1501" y="329" width="12" height="1" fill="#48d048"/><rect x="1501" y="329" width="1" height="19" fill="#48d048"/><rect x="1512" y="347" width="24" height="1" fill="#48d048"/><rect x="1512" y="329" width="1" height="19" fill="#48d048"/><rect x="1065" y="329" width="1" height="19" fill="#48d048"/><rect x="1099" y="329" width="2" height="19" fill="#48d048"/><rect x="1111" y="329" width="1" height="19" fill="#48d048"/><rect x="1180" y="329" width="1" height="19" fill="#48d048"/><rect x="1214" y="329" width="1" height="19" fill="#48d048"/><rect x="1225" y="329" width="1" height="19" fill="#48d048"/><rect x="1294" y="329" width="1" height="19" fill="#48d048"/><rect x="1340" y="329" width="1" height="19" fill="#48d048"/><rect x="1386" y="329" width="1" height="19" fill="#48d048"/><rect x="1397" y="329" width="1" height="19" fill="#48d048"/><rect x="1432" y="329" width="1" height="19" fill="#48d048"/><rect x="1455" y="329" width="1" height="19" fill="#48d048"/><rect x="1466" y="329" width="1" height="19" fill="#48d048"/><rect x="1524" y="329" width="1" height="19" fill="#48d048"/><path d="M389 370.5L1536 370.5" stroke="#48d048" stroke-width="1"/><path d="M389.5 352L389.5 371" stroke="#70e070" stroke-width="1"/><rect x="1042" y="352" width="1" height="19" fill="#48d048"/><rect x="1065" y="352" width="1" height="19" fill="#48d048"/><rect x="1076" y="352" width="1" height="19" fill="#48d048"/><rect x="1099" y="352" width="1" height="19" fill="#48d048"/><rect x="1111" y="352" width="1" height="19" fill="#48d048"/><rect x="1134" y="352" width="1" height="19" fill="#48d048"/><rect x="1157" y="352" width="1" height="19" fill="#48d048"/><rect x="1180" y="352" width="1" height="19" fill="#48d048"/><rect x="1214" y="352" width="1" height="19" fill="#48d048"/><rect x="1225" y="352" width="1" height="19" fill="#48d048"/><rect x="1271" y="352" width="1" height="19" fill="#48d048"/><rect x="1294" y="352" width="1" height="19" fill="#48d048"/><rect x="1329" y="352" width="1" height="19" fill="#48d048"/><rect x="1340" y="352" width="1" height="19" fill="#48d048"/><rect x="1375" y="352" width="1" height="19" fill="#48d048"/><rect x="1386" y="352" width="1" height="19" fill="#48d048"/><rect x="1397" y="352" width="1" height="19" fill="#48d048"/><rect x="1420" y="352" width="1" height="19" fill="#48d048"/><rect x="1432" y="352" width="1" height="19" fill="#48d048"/><rect x="1443" y="352" width="1" height="19" fill="#48d048"/><rect x="1455" y="352" width="1" height="19" fill="#48d048"/><rect x="1466" y="352" width="1" height="19" fill="#48d048"/><rect x="1478" y="352" width="1" height="19" fill="#48d048"/><rect x="1501" y="352" width="1" height="19" fill="#48d048"/><rect x="1524" y="352" width="1" height="19" fill="#48d048"/><path d="M389 393.5L1536 393.5" stroke="#48d048" stroke-width="1"/><path d="M389.5 375L389.5 394" stroke="#70e070" stroke-width="1"/><rect x="400" y="375" width="1" height="19" fill="#48d048"/><rect x="411" y="375" width="2" height="19" fill="#48d048"/><rect x="423" y="375" width="1" height="19" fill="#48d048"/><rect x="434" y="375" width="1" height="19" fill="#48d048"/><rect x="446" y="375" width="1" height="19" fill="#48d048"/><rect x="457" y="375" width="1" height="19" fill="#48d048"/><rect x="469" y="375" width="1" height="19" fill="#48d048"/><rect x="492" y="375" width="1" height="19" fill="#48d048"/><rect x="503" y="375" width="1" height="19" fill="#48d048"/><rect x="514" y="375" width="1" height="19" fill="#48d048"/><rect x="526" y="375" width="1" height="19" fill="#48d048"/><rect x="537" y="375" width="1" height="19" fill="#48d048"/><rect x="549" y="375" width="1" height="19" fill="#48d048"/><rect x="560" y="375" width="1" height="19" fill="#48d048"/><rect x="572" y="375" width="1" height="19" fill="#48d048"/><rect x="583" y="375" width="2" height="19" fill="#48d048"/><rect x="606" y="375" width="1" height="19" fill="#48d048"/><rect x="618" y="375" width="1" height="19" fill="#48d048"/><rect x="629" y="375" width="1" height="19" fill="#48d048"/><rect x="641" y="375" width="1" height="19" fill="#48d048"/><rect x="652" y="375" width="1" height="19" fill="#48d048"/><rect x="664" y="375" width="1" height="19" fill="#48d048"/><rect x="675" y="375" width="1" height="19" fill="#48d048"/><rect x="686" y="375" width="1" height="19" fill="#48d048"/><rect x="709" y="375" width="1" height="19" fill="#48d048"/><rect x="721" y="375" width="1" height="19" fill="#48d048"/><rect x="732" y="375" width="1" height="19" fill="#48d048"/><rect x="755" y="375" width="2" height="19" fill="#48d048"/><rect x="767" y="375" width="1" height="19" fill="#48d048"/><rect x="778" y="375" width="1" height="19" fill="#48d048"/><rect x="801" y="375" width="1" height="19" fill="#48d048"/><rect x="813" y="375" width="1" height="19" fill="#48d048"/><rect x="824" y="375" width="1" height="19" fill="#48d048"/><rect x="836" y="375" width="1" height="19" fill="#48d048"/><rect x="858" y="375" width="1" height="19" fill="#48d048"/><rect x="870" y="375" width="1" height="19" fill="#48d048"/><rect x="881" y="375" width="1" height="19" fill="#48d048"/><rect x="893" y="375" width="1" height="19" fill="#48d048"/><rect x="916" y="375" width="1" height="19" fill="#48d048"/><rect x="927" y="375" width="2" height="19" fill="#48d048"/><rect x="939" y="375" width="1" height="19" fill="#48d048"/><rect x="950" y="375" width="1" height="19" fill="#48d048"/><rect x="962" y="375" width="1" height="19" fill="#48d048"/><rect x="973" y="375" width="1" height="19" fill="#48d048"/><rect x="985" y="375" width="1" height="19" fill="#48d048"/><rect x="996" y="375" width="1" height="19" fill="#48d048"/><rect x="1008" y="375" width="1" height="19" fill="#48d048"/><rect x="1019" y="375" width="1" height="19" fill="#48d048"/><rect x="1065" y="375" width="1" height="19" fill="#48d048"/><rect x="1076" y="375" width="1" height="19" fill="#48d048"/><rect x="1088" y="375" width="1" height="19" fill="#48d048"/><rect x="1099" y="375" width="2" height="19" fill="#48d048"/><rect x="1111" y="375" width="1" height="19" fill="#48d048"/><rect x="1145" y="375" width="1" height="19" fill="#48d048"/><rect x="1180" y="375" width="1" height="19" fill="#48d048"/><rect x="1202" y="375" width="1" height="19" fill="#48d048"/><rect x="1214" y="375" width="1" height="19" fill="#48d048"/><rect x="1225" y="375" width="1" height="19" fill="#48d048"/><rect x="1260" y="375" width="1" height="19" fill="#48d048"/><rect x="1294" y="375" width="1" height="19" fill="#48d048"/><rect x="1317" y="375" width="1" height="19" fill="#48d048"/><rect x="1340" y="375" width="1" height="19" fill="#48d048"/><rect x="1386" y="375" width="1" height="19" fill="#48d048"/><rect x="1397" y="375" width="1" height="19" fill="#48d048"/><rect x="1409" y="375" width="1" height="19" fill="#48d048"/><rect x="1432" y="375" width="1" height="19" fill="#48d048"/><rect x="1455" y="375" width="1" height="19" fill="#48d048"/><rect x="1466" y="375" width="1" height="19" fill="#48d048"/><rect x="1489" y="375" width="1" height="19" fill="#48d048"/><rect x="1512" y="375" width="1" height="19" fill="#48d048"/><rect x="1524" y="375" width="1" height="19" fill="#48d048"/><rect x="390" y="398" width="1146" height="1" fill="#c4f4c4"/><rect x="390" y="416" width="1146" height="1" fill="#c4f4c4"/><rect x="389" y="398" width="1" height="19" fill="#c4f4c4"/><text x="391" y="415" font-size="16" fill="#fff">10</text><rect x="390" y="421" width="1146" height="1" fill="#c4f4c4"/><rect x="390" y="439" width="1146" height="1" fill="#c4f4c4"/><rect x="389" y="421" width="1" height="19" fill="#c4f4c4"/><text x="391" y="438" font-size="16" fill="#fff">0</text><rect x="389" y="467" width="1147" height="19" fill="#00ff00"/><path d="M389 490.5L1536 490.5" stroke="#48d048" stroke-width="1"/><path d="M389.5 490L389.5 509" stroke="#70e070" stroke-width="1"/><path d="M389 513.5L1536 513.5" stroke="#48d048" stroke-width="1"/><path d="M389.5 513L389.5 532" stroke="#70e070" stroke-width="1"/><rect x="390" y="536" width="1146" height="1" fill="#c4f4c4"/><rect x="390" y="554" width="1146" height="1" fill="#c4f4c4"/><rect x="389" y="536" width="1" height="19" fill="#c4f4c4"/><text x="391" y="553" font-size="16" fill="#fff">25</text><path d="M389 561.5L400.5 561.5L400.5 563.5L411.5 563.5L411.5 565.5L423.5 565.5L423.5 566.5L434.5 566.5L434.5 567.5L446.5 567.5L446.5 568.5L457.5 568.5L457.5 571.5L469.5 571.5L469.5 572.5L480.5 572.5L480.5 572.5L492.5 572.5L492.5 573.5L503.5 573.5L503.5 576.5L514.5 576.5L514.5 577.5L526.5 577.5L526.5 578.5L537.5 578.5L537.5 580.5L549.5 580.5L549.5 582.5L560.5 582.5L560.5 583.5L572.5 583.5L572.5 585.5L583.5 585.5L583.5 586.5L595.5 586.5L595.5 586.5L606.5 586.5L606.5 589.5L618.5 589.5L618.5 590.5L629.5 590.5L629.5 591.5L641.5 591.5L641.5 593.5L652.5 593.5L652.5 596.5L664.5 596.5L664.5 597.5L675.5 597.5L675.5 598.5L686.5 598.5L686.5 601.5L698.5 601.5L698.5 601.5L709.5 601.5L709.5 603.5L721.5 603.5L721.5 604.5L732.5 604.5L732.5 607.5L744.5 607.5L744.5 607.5L755.5 607.5L755.5 609.5L767.5 609.5L767.5 611.5L778.5 611.5L778.5 614.5L790.5 614.5L790.5 614.5L801.5 614.5L801.5 615.5L813.5 615.5L813.5 617.5L824.5 617.5L824.5 620.5L836.5 620.5L836.5 621.5L847.5 621.5L847.5 621.5L858.5 621.5L858.5 623.5L870.5 623.5L870.5 624.5L881.5 624.5L881.5 627.5L893.5 627.5L893.5 629.5L904.5 629.5L904.5 629.5L916.5 629.5L916.5 632.5L927.5 632.5L927.5 633.5L939.5 633.5L939.5 634.5L950.5 634.5L950.5 636.5L962.5 636.5L962.5 639.5L973.5 639.5L973.5 640.5L985.5 640.5L985.5 641.5L996.5 641.5L996.5 643.5L1008.5 643.5L1008.5 646.5L1019.5 646.5L1019.5 647.5L1030.5 647.5L1030.5 647.5L1042.5 647.5L1042.5 646.5L1053.5 646.5L1053.5 646.5L1065.5 646.5L1065.5 646.5L1076.5 646.5L1076.5 646.5L1088.5 646.5L1088.5 647.5L1099.5 647.5L1099.5 647.5L1111.5 647.5L1111.5 647.5L1122.5 647.5L1122.5 647.5L1134.5 647.5L1134.5 646.5L1145.5 646.5L1145.5 647.5L1157.5 647.5L1157.5 646.5L1168.5 646.5L1168.5 646.5L1180.5 646.5L1180.5 646.5L1191.5 646.5L1191.5 646.5L1202.5 646.5L1202.5 647.5L1214.5 647.5L1214.5 647.5L1225.5 647.5L1225.5 647.5L1237.5 647.5L1237.5 647.5L1248.5 647.5L1248.5 646.5L1260.5 646.5L1260.5 647.5L1271.5 647.5L1271.5 646.5L1283.5 646.5L1283.5 646.5L1294.5 646.5L1294.5 646.5L1306.5 646.5L1306.5 646.5L1317.5 646.5L1317.5 647.5L1329.5 647.5L1329.5 646.5L1340.5 646.5L1340.5 646.5L1352.5 646.5L1352.5 646.5L1363.5 646.5L1363.5 647.5L1375.5 647.5L1375.5 646.5L1386.5 646.5L1386.5 646.5L1397.5 646.5L1397.5 646.5L1409.5 646.5L1409.5 647.5L1420.5 647.5L1420.5 647.5L1432.5 647.5L1432.5 647.5L1443.5 647.5L1443.5 646.5L1455.5 646.5L1455.5 646.5L1466.5 646.5L1466.5 646.5L1478.5 646.5L1478.5 646.5L1489.5 646.5L1489.5 647.5L1501.5 647.5L1501.5 646.5L1512.5 646.5L1512.5 647.5L1524.5 647.5L1524.5 647.5L1535.5 647.5" stroke="#c4f4c4" fill="none" stroke-width="1"/><rect x="1065" y="644" width="1" height="3" fill="#c4f4c4"/><rect x="1099" y="645" width="2" height="3" fill="#c4f4c4"/><rect x="1111" y="645" width="1" height="3" fill="#c4f4c4"/><rect x="1180" y="644" width="1" height="3" fill="#c4f4c4"/><rect x="1214" y="645" width="1" height="3" fill="#c4f4c4"/><rect x="1225" y="645" width="1" height="3" fill="#c4f4c4"/><rect x="1294" y="644" width="1" height="3" fill="#c4f4c4"/><rect x="1340" y="644" width="1" height="3" fill="#c4f4c4"/><rect x="1386" y="644" width="1" height="3" fill="#c4f4c4"/><rect x="1397" y="644" width="1" height="3" fill="#c4f4c4"/><rect x="1432" y="645" width="1" height="3" fill="#c4f4c4"/><rect x="1455" y="644" width="1" height="3" fill="#c4f4c4"/><rect x="1466" y="644" width="1" height="3" fill="#c4f4c4"/><rect x="1524" y="645" width="1" height="3" fill="#c4f4c4"/><rect x="755" y="607" width="2" height="3" fill="#c4f4c4"/><rect x="927" y="631" width="2" height="3" fill="#c4f4c4"/><rect x="390" y="651" width="9" height="1" fill="#c4f4c4"/><rect x="390" y="669" width="9" height="1" fill="#c4f4c4"/><rect x="402" y="651" width="8" height="1" fill="#c4f4c4"/><rect x="402" y="669" width="8" height="1" fill="#c4f4c4"/><rect x="413" y="651" width="9" height="1" fill="#c4f4c4"/><rect x="413" y="669" width="9" height="1" fill="#c4f4c4"/><rect x="425" y="651" width="8" height="1" fill="#c4f4c4"/><rect x="425" y="669" width="8" height="1" fill="#c4f4c4"/><rect x="436" y="651" width="9" height="1" fill="#c4f4c4"/><rect x="436" y="669" width="9" height="1" fill="#c4f4c4"/><rect x="448" y="651" width="8" height="1" fill="#c4f4c4"/><rect x="448" y="669" width="8" height="1" fill="#c4f4c4"/><rect x="459" y="651" width="9" height="1" fill="#c4f4c4"/><rect x="459" y="669" width="9" height="1" fill="#c4f4c4"/><rect x="471" y="651" width="20" height="1" fill="#c4f4c4"/><rect x="471" y="669" width="20" height="1" fill="#c4f4c4"/><rect x="494" y="651" width="8" height="1" fill="#c4f4c4"/><rect x="494" y="669" width="8" height="1" fill="#c4f4c4"/><rect x="505" y="651" width="8" height="1" fill="#c4f4c4"/><rect x="505" y="669" width="8" height="1" fill="#c4f4c4"/><rect x="516" y="651" width="9" height="1" fill="#c4f4c4"/><rect x="516" y="669" width="9" height="1" fill="#c4f4c4"/><rect x="528" y="651" width="8" height="1" fill="#c4f4c4"/><rect x="528" y="669" width="8" height="1" fill="#c4f4c4"/><rect x="539" y="651" width="9" height="1" fill="#c4f4c4"/><rect x="539" y="669" width="9" height="1" fill="#c4f4c4"/><rect x="551" y="651" width="8" height="1" fill="#c4f4c4"/><rect x="551" y="669" width="8" height="1" fill="#c4f4c4"/><rect x="562" y="651" width="9" height="1" fill="#c4f4c4"/><rect x="562" y="669" width="9" height="1" fill="#c4f4c4"/><rect x="574" y="651" width="8" height="1" fill="#c4f4c4"/><rect x="574" y="669" width="8" height="1" fill="#c4f4c4"/><rect x="585" y="651" width="20" height="1" fill="#c4f4c4"/><rect x="585" y="669" width="20" height="1" fill="#c4f4c4"/><rect x="608" y="651" width="9" height="1" fill="#c4f4c4"/><rect x="608" y="669" width="9" height="1" fill="#c4f4c4"/><rect x="620" y="651" width="8" height="1" fill="#c4f4c4"/><rect x="620" y="669" width="8" height="1" fill="#c4f4c4"/><rect x="631" y="651" width="9" height="1" fill="#c4f4c4"/><rect x="631" y="669" width="9" height="1" fill="#c4f4c4"/><rect x="643" y="651" width="8" height="1" fill="#c4f4c4"/><rect x="643" y="669" width="8" height="1" fill="#c4f4c4"/><rect x="654" y="651" width="9" height="1" fill="#c4f4c4"/><rect x="654" y="669" width="9" height="1" fill="#c4f4c4"/><rect x="666" y="651" width="8" height="1" fill="#c4f4c4"/><rect x="666" y="669" width="8" height="1" fill="#c4f4c4"/><rect x="677" y="651" width="8" height="1" fill="#c4f4c4"/><rect x="677" y="669" width="8" height="1" fill="#c4f4c4"/><rect x="688" y="651" width="20" height="1" fill="#c4f4c4"/><rect x="688" y="669" width="20" height="1" fill="#c4f4c4"/><rect x="711" y="651" width="9" height="1" fill="#c4f4c4"/><rect x="711" y="669" width="9" height="1" fill="#c4f4c4"/><rect x="723" y="651" width="8" height="1" fill="#c4f4c4"/><rect x="723" y="669" width="8" height="1" fill="#c4f4c4"/><rect x="734" y="651" width="20" height="1" fill="#c4f4c4"/><rect x="734" y="669" width="20" height="1" fill="#c4f4c4"/><rect x="757" y="651" width="9" height="1" fill="#c4f4c4"/><rect x="757" y="669" width="9" height="1" fill="#c4f4c4"/><rect x="769" y="651" width="8" height="1" fill="#c4f4c4"/><rect x="769" y="669" width="8" height="1" fill="#c4f4c4"/><rect x="780" y="651" width="20" height="1" fill="#c4f4c4"/><rect x="780" y="669" width="20" height="1" fill="#c4f4c4"/><rect x="803" y="651" width="9" height="1" fill="#c4f4c4"/><rect x="803" y="669" width="9" height="1" fill="#c4f4c4"/><rect x="815" y="651" width="8" height="1" fill="#c4f4c4"/><rect x="815" y="669" width="8" height="1" fill="#c4f4c4"/><rect x="826" y="651" width="9" height="1" fill="#c4f4c4"/><rect x="826" y="669" width="9" height="1" fill="#c4f4c4"/><rect x="838" y="651" width="19" height="1" fill="#c4f4c4"/><rect x="838" y="669" width="19" height="1" fill="#c4f4c4"/><rect x="860" y="651" width="9" height="1" fill="#c4f4c4"/><rect x="860" y="669" width="9" height="1" fill="#c4f4c4"/><rect x="872" y="651" width="8" height="1" fill="#c4f4c4"/><rect x="872" y="669" width="8" height="1" fill="#c4f4c4"/><rect x="883" y="651" width="9" height="1" fill="#c4f4c4"/><rect x="883" y="669" width="9" height="1" fill="#c4f4c4"/><rect x="895" y="651" width="20" height="1" fill="#c4f4c4"/><rect x="895" y="669" width="20" height="1" fill="#c4f4c4"/><rect x="918" y="651" width="8" height="1" fill="#c4f4c4"/><rect x="918" y="669" width="8" height="1" fill="#c4f4c4"/><rect x="929" y="651" width="9" height="1" fill="#c4f4c4"/><rect x="929" y="669" width="9" height="1" fill="#c4f4c4"/><rect x="941" y="651" width="8" height="1" fill="#c4f4c4"/><rect x="941" y="669" width="8" height="1" fill="#c4f4c4"/><rect x="952" y="651" width="9" height="1" fill="#c4f4c4"/><rect x="952" y="669" width="9" height="1" fill="#c4f4c4"/><rect x="964" y="651" width="8" height="1" fill="#c4f4c4"/><rect x="964" y="669" width="8" height="1" fill="#c4f4c4"/><rect x="975" y="651" width="9" height="1" fill="#c4f4c4"/><rect x="975" y="669" width="9" height="1" fill="#c4f4c4"/><rect x="987" y="651" width="8" height="1" fill="#c4f4c4"/><rect x="987" y="669" width="8" height="1" fill="#c4f4c4"/><rect x="998" y="651" width="9" height="1" fill="#c4f4c4"/><rect x="998" y="669" width="9" height="1" fill="#c4f4c4"/><rect x="1010" y="651" width="8" height="1" fill="#c4f4c4"/><rect x="1010" y="669" width="8" height="1" fill="#c4f4c4"/><rect x="1021" y="651" width="20" height="1" fill="#c4f4c4"/><rect x="1021" y="669" width="20" height="1" fill="#c4f4c4"/><rect x="1044" y="651" width="20" height="1" fill="#c4f4c4"/><rect x="1044" y="669" width="20" height="1" fill="#c4f4c4"/><rect x="1067" y="651" width="8" height="1" fill="#c4f4c4"/><rect x="1067" y="669" width="8" height="1" fill="#c4f4c4"/><rect x="1078" y="651" width="9" height="1" fill="#c4f4c4"/><rect x="1078" y="669" width="9" height="1" fill="#c4f4c4"/><rect x="1090" y="651" width="8" height="1" fill="#c4f4c4"/><rect x="1090" y="669" width="8" height="1" fill="#c4f4c4"/><rect x="1101" y="651" width="9" height="1" fill="#c4f4c4"/><rect x="1101" y="669" width="9" height="1" fill="#c4f4c4"/><rect x="1113" y="651" width="20" height="1" fill="#c4f4c4"/><rect x="1113" y="669" width="20" height="1" fill="#c4f4c4"/><rect x="1136" y="651" width="8" height="1" fill="#c4f4c4"/><rect x="1136" y="669" width="8" height="1" fill="#c4f4c4"/><rect x="1147" y="651" width="9" height="1" fill="#c4f4c4"/><rect x="1147" y="669" width="9" height="1" fill="#c4f4c4"/><rect x="1159" y="651" width="20" height="1" fill="#c4f4c4"/><rect x="1159" y="669" width="20" height="1" fill="#c4f4c4"/><rect x="1182" y="651" width="8" height="1" fill="#c4f4c4"/><rect x="1182" y="669" width="8" height="1" fill="#c4f4c4"/><rect x="1193" y="651" width="8" height="1" fill="#c4f4c4"/><rect x="1193" y="669" width="8" height="1" fill="#c4f4c4"/><rect x="1204" y="651" width="9" height="1" fill="#c4f4c4"/><rect x="1204" y="669" width="9" height="1" fill="#c4f4c4"/><rect x="1216" y="651" width="8" height="1" fill="#c4f4c4"/><rect x="1216" y="669" width="8" height="1" fill="#c4f4c4"/><rect x="1227" y="651" width="20" height="1" fill="#c4f4c4"/><rect x="1227" y="669" width="20" height="1" fill="#c4f4c4"/><rect x="1250" y="651" width="9" height="1" fill="#c4f4c4"/><rect x="1250" y="669" width="9" height="1" fill="#c4f4c4"/><rect x="1262" y="651" width="8" height="1" fill="#c4f4c4"/><rect x="1262" y="669" width="8" height="1" fill="#c4f4c4"/><rect x="1273" y="651" width="20" height="1" fill="#c4f4c4"/><rect x="1273" y="669" width="20" height="1" fill="#c4f4c4"/><rect x="1296" y="651" width="9" height="1" fill="#c4f4c4"/><rect x="1296" y="669" width="9" height="1" fill="#c4f4c4"/><rect x="1308" y="651" width="8" height="1" fill="#c4f4c4"/><rect x="1308" y="669" width="8" height="1" fill="#c4f4c4"/><rect x="1319" y="651" width="9" height="1" fill="#c4f4c4"/><rect x="1319" y="669" width="9" height="1" fill="#c4f4c4"/><rect x="1331" y="651" width="8" height="1" fill="#c4f4c4"/><rect x="1331" y="669" width="8" height="1" fill="#c4f4c4"/><rect x="1342" y="651" width="20" height="1" fill="#c4f4c4"/><rect x="1342" y="669" width="20" height="1" fill="#c4f4c4"/><rect x="1365" y="651" width="9" height="1" fill="#c4f4c4"/><rect x="1365" y="669" width="9" height="1" fill="#c4f4c4"/><rect x="1377" y="651" width="8" height="1" fill="#c4f4c4"/><rect x="1377" y="669" width="8" height="1" fill="#c4f4c4"/><rect x="1388" y="651" width="8" height="1" fill="#c4f4c4"/><rect x="1388" y="669" width="8" height="1" fill="#c4f4c4"/><rect x="1399" y="651" width="9" height="1" fill="#c4f4c4"/><rect x="1399" y="669" width="9" height="1" fill="#c4f4c4"/><rect x="1411" y="651" width="8" height="1" fill="#c4f4c4"/><rect x="1411" y="669" width="8" height="1" fill="#c4f4c4"/><rect x="1422" y="651" width="9" height="1" fill="#c4f4c4"/><rect x="1422" y="669" width="9" height="1" fill="#c4f4c4"/><rect x="1434" y="651" width="8" height="1" fill="#c4f4c4"/><rect x="1434" y="669" width="8" height="1" fill="#c4f4c4"/><rect x="1445" y="651" width="9" height="1" fill="#c4f4c4"/><rect x="1445" y="669" width="9" height="1" fill="#c4f4c4"/><rect x="1457" y="651" width="8" height="1" fill="#c4f4c4"/><rect x="1457" y="669" width="8" height="1" fill="#c4f4c4"/><rect x="1468" y="651" width="9" height="1" fill="#c4f4c4"/><rect x="1468" y="669" width="9" height="1" fill="#c4f4c4"/><rect x="1480" y="651" width="8" height="1" fill="#c4f4c4"/><rect x="1480" y="669" width="8" height="1" fill="#c4f4c4"/><rect x="1491" y="651" width="9" height="1" fill="#c4f4c4"/><rect x="1491" y="669" width="9" height="1" fill="#c4f4c4"/><rect x="1503" y="651" width="8" height="1" fill="#c4f4c4"/><rect x="1503" y="669" width="8" height="1" fill="#c4f4c4"/><rect x="1514" y="651" width="9" height="1" fill="#c4f4c4"/><rect x="1514" y="669" width="9" height="1" fill="#c4f4c4"/><rect x="1526" y="651" width="8" height="1" fill="#c4f4c4"/><rect x="1526" y="669" width="8" height="1" fill="#c4f4c4"/><rect x="388" y="651" width="1" height="19" fill="#c4f4c4"/><rect x="399" y="651" width="1" height="5" fill="#c4f4c4"/><rect x="401" y="651" width="1" height="5" fill="#c4f4c4"/><rect x="399" y="665" width="1" height="5" fill="#c4f4c4"/><rect x="401" y="665" width="1" height="5" fill="#c4f4c4"/><rect x="400" y="655" width="1" height="11" fill="#c4f4c4"/><rect x="410" y="651" width="1" height="5" fill="#c4f4c4"/><rect x="412" y="651" width="1" height="5" fill="#c4f4c4"/><rect x="410" y="665" width="1" height="5" fill="#c4f4c4"/><rect x="412" y="665" width="1" height="5" fill="#c4f4c4"/><rect x="411" y="655" width="1" height="11" fill="#c4f4c4"/><rect x="422" y="651" width="1" height="5" fill="#c4f4c4"/><rect x="424" y="651" width="1" height="5" fill="#c4f4c4"/><rect x="422" y="665" width="1" height="5" fill="#c4f4c4"/><rect x="424" y="665" width="1" height="5" fill="#c4f4c4"/><rect x="423" y="655" width="1" height="11" fill="#c4f4c4"/><rect x="433" y="651" width="1" height="5" fill="#c4f4c4"/><rect x="435" y="651" width="1" height="5" fill="#c4f4c4"/><rect x="433" y="665" width="1" height="5" fill="#c4f4c4"/><rect x="435" y="665" width="1" height="5" fill="#c4f4c4"/><rect x="434" y="655" width="1" height="11" fill="#c4f4c4"/><rect x="445" y="651" width="1" height="5" fill="#c4f4c4"/><rect x="447" y="651" width="1" height="5" fill="#c4f4c4"/><rect x="445" y="665" width="1" height="5" fill="#c4f4c4"/><rect x="447" y="665" width="1" height="5" fill="#c4f4c4"/><rect x="446" y="655" width="1" height="11" fill="#c4f4c4"/><rect x="456" y="651" width="1" height="5" fill="#c4f4c4"/><rect x="458" y="651" width="1" height="5" fill="#c4f4c4"/><rect x="456" y="665" width="1" height="5" fill="#c4f4c4"/><rect x="458" y="665" width="1" height="5" fill="#c4f4c4"/><rect x="457" y="655" width="1" height="11" fill="#c4f4c4"/><rect x="468" y="651" width="1" height="5" fill="#c4f4c4"/><rect x="470" y="651" width="1" height="5" fill="#c4f4c4"/><rect x="468" y="665" width="1" height="5" fill="#c4f4c4"/><rect x="470" y="665" width="1" height="5" fill="#c4f4c4"/><rect x="469" y="655" width="1" height="11" fill="#c4f4c4"/><rect x="491" y="651" width="1" height="5" fill="#c4f4c4"/><rect x="493" y="651" width="1" height="5" fill="#c4f4c4"/><rect x="491" y="665" width="1" height="5" fill="#c4f4c4"/><rect x="493" y="665" width="1" height="5" fill="#c4f4c4"/><rect x="492" y="655" width="1" height="11" fill="#c4f4c4"/><rect x="502" y="651" width="1" height="5" fill="#c4f4c4"/><rect x="504" y="651" width="1" height="5" fill="#c4f4c4"/><rect x="502" y="665" width="1" height="5" fill="#c4f4c4"/><rect x="504" y="665" width="1" height="5" fill="#c4f4c4"/><rect x="503" y="655" width="1" height="11" fill="#c4f4c4"/><rect x="513" y="651" width="1" height="5" fill="#c4f4c4"/><rect x="515" y="651" width="1" height="5" fill="#c4f4c4"/><rect x="513" y="665" width="1" height="5" fill="#c4f4c4"/><rect x="515" y="665" width="1" height="5" fill="#c4f4c4"/><rect x="514" y="655" width="1" height="11" fill="#c4f4c4"/><rect x="525" y="651" width="1" height="5" fill="#c4f4c4"/><rect x="527" y="651" width="1" height="5" fill="#c4f4c4"/><rect x="525" y="665" width="1" height="5" fill="#c4f4c4"/><rect x="527" y="665" width="1" height="5" fill="#c4f4c4"/><rect x="526" y="655" width="1" height="11" fill="#c4f4c4"/><rect x="536" y="651" width="1" height="5" fill="#c4f4c4"/><rect x="538" y="651" width="1" height="5" fill="#c4f4c4"/><rect x="536" y="665" width="1" height="5" fill="#c4f4c4"/><rect x="538" y="665" width="1" height="5" fill="#c4f4c4"/><rect x="537" y="655" width="1" height="11" fill="#c4f4c4"/><rect x="548" y="651" width="1" height="5" fill="#c4f4c4"/><rect x="550" y="651" width="1" height="5" fill="#c4f4c4"/><rect x="548" y="665" width="1" height="5" fill="#c4f4c4"/><rect x="550" y="665" width="1" height="5" fill="#c4f4c4"/><rect x="549" y="655" width="1" height="11" fill="#c4f4c4"/><rect x="559" y="651" width="1" height="5" fill="#c4f4c4"/><rect x="561" y="651" width="1" height="5" fill="#c4f4c4"/><rect x="559" y="665" width="1" height="5" fill="#c4f4c4"/><rect x="561" y="665" width="1" height="5" fill="#c4f4c4"/><rect x="560" y="655" width="1" height="11" fill="#c4f4c4"/><rect x="571" y="651" width="1" height="5" fill="#c4f4c4"/><rect x="573" y="651" width="1" height="5" fill="#c4f4c4"/><rect x="571" y="665" width="1" height="5" fill="#c4f4c4"/><rect x="573" y="665" width="1" height="5" fill="#c4f4c4"/><rect x="572" y="655" width="1" height="11" fill="#c4f4c4"/><rect x="582" y="651" width="1" height="5" fill="#c4f4c4"/><rect x="584" y="651" width="1" height="5" fill="#c4f4c4"/><rect x="582" y="665" width="1" height="5" fill="#c4f4c4"/><rect x="584" y="665" width="1" height="5" fill="#c4f4c4"/><rect x="583" y="655" width="1" height="11" fill="#c4f4c4"/><rect x="605" y="651" width="1" height="5" fill="#c4f4c4"/><rect x="607" y="651" width="1" height="5" fill="#c4f4c4"/><rect x="605" y="665" width="1" height="5" fill="#c4f4c4"/><rect x="607" y="665" width="1" height="5" fill="#c4f4c4"/><rect x="606" y="655" width="1" height="11" fill="#c4f4c4"/><rect x="617" y="651" width="1" height="5" fill="#c4f4c4"/><rect x="619" y="651" width="1" height="5" fill="#c4f4c4"/><rect x="617" y="665" width="1" height="5" fill="#c4f4c4"/><rect x="619" y="665" width="1" height="5" fill="#c4f4c4"/><rect x="618" y="655" width="1" height="11" fill="#c4f4c4"/><rect x="628" y="651" width="1" height="5" fill="#c4f4c4"/><rect x="630" y="651" width="1" height="5" fill="#c4f4c4"/><rect x="628" y="665" width="1" height="5" fill="#c4f4c4"/><rect x="630" y="665" width="1" height="5" fill="#c4f4c4"/><rect x="629" y="655" width="1" height="11" fill="#c4f4c4"/><rect x="640" y="651" width="1" height="5" fill="#c4f4c4"/><rect x="642" y="651" width="1" height="5" fill="#c4f4c4"/><rect x="640" y="665" width="1" height="5" fill="#c4f4c4"/><rect x="642" y="665" width="1" height="5" fill="#c4f4c4"/><rect x="641" y="655" width="1" height="11" fill="#c4f4c4"/><rect x="651" y="651" width="1" height="5" fill="#c4f4c4"/><rect x="653" y="651" width="1" height="5" fill="#c4f4c4"/><rect x="651" y="665" width="1" height="5" fill="#c4f4c4"/><rect x="653" y="665" width="1" height="5" fill="#c4f4c4"/><rect x="652" y="655" width="1" height="11" fill="#c4f4c4"/><rect x="663" y="651" width="1" height="5" fill="#c4f4c4"/><rect x="665" y="651" width="1" height="5" fill="#c4f4c4"/><rect x="663" y="665" width="1" height="5" fill="#c4f4c4"/><rect x="665" y="665" width="1" height="5" fill="#c4f4c4"/><rect x="664" y="655" width="1" height="11" fill="#c4f4c4"/><rect x="674" y="651" width="1" height="5" fill="#c4f4c4"/><rect x="676" y="651" width="1" height="5" fill="#c4f4c4"/><rect x="674" y="665" width="1" height="5" fill="#c4f4c4"/><rect x="676" y="665" width="1" height="5" fill="#c4f4c4"/><rect x="675" y="655" width="1" height="11" fill="#c4f4c4"/><rect x="685" y="651" width="1" height="5" fill="#c4f4c4"/><rect x="687" y="651" width="1" height="5" fill="#c4f4c4"/><rect x="685" y="665" width="1" height="5" fill="#c4f4c4"/><rect x="687" y="665" width="1" height="5" fill="#c4f4c4"/><rect x="686" y="655" width="1" height="11" fill="#c4f4c4"/><rect x="708" y="651" width="1" height="5" fill="#c4f4c4"/><rect x="710" y="651" width="1" height="5" fill="#c4f4c4"/><rect x="708" y="665" width="1" height="5" fill="#c4f4c4"/><rect x="710" y="665" width="1" height="5" fill="#c4f4c4"/><rect x="709" y="655" width="1" height="11" fill="#c4f4c4"/><rect x="720" y="651" width="1" height="5" fill="#c4f4c4"/><rect x="722" y="651" width="1" height="5" fill="#c4f4c4"/><rect x="720" y="665" width="1" height="5" fill="#c4f4c4"/><rect x="722" y="665" width="1" height="5" fill="#c4f4c4"/><rect x="721" y="655" width="1" height="11" fill="#c4f4c4"/><rect x="731" y="651" width="1" height="5" fill="#c4f4c4"/><rect x="733" y="651" width="1" height="5" fill="#c4f4c4"/><rect x="731" y="665" width="1" height="5" fill="#c4f4c4"/><rect x="733" y="665" width="1" height="5" fill="#c4f4c4"/><rect x="732" y="655" width="1" height="11" fill="#c4f4c4"/><rect x="754" y="651" width="4" height="5" fill="#c4f4c4"/><rect x="754" y="665" width="4" height="5" fill="#c4f4c4"/><rect x="755" y="655" width="2" height="11" fill="#c4f4c4"/><rect x="766" y="651" width="1" height="5" fill="#c4f4c4"/><rect x="768" y="651" width="1" height="5" fill="#c4f4c4"/><rect x="766" y="665" width="1" height="5" fill="#c4f4c4"/><rect x="768" y="665" width="1" height="5" fill="#c4f4c4"/><rect x="767" y="655" width="1" height="11" fill="#c4f4c4"/><rect x="777" y="651" width="1" height="5" fill="#c4f4c4"/><rect x="779" y="651" width="1" height="5" fill="#c4f4c4"/><rect x="777" y="665" width="1" height="5" fill="#c4f4c4"/><rect x="779" y="665" width="1" height="5" fill="#c4f4c4"/><rect x="778" y="655" width="1" height="11" fill="#c4f4c4"/><rect x="800" y="651" width="1" height="5" fill="#c4f4c4"/><rect x="802" y="651" width="1" height="5" fill="#c4f4c4"/><rect x="800" y="665" width="1" height="5" fill="#c4f4c4"/><rect x="802" y="665" width="1" height="5" fill="#c4f4c4"/><rect x="801" y="655" width="1" height="11" fill="#c4f4c4"/><rect x="812" y="651" width="1" height="5" fill="#c4f4c4"/><rect x="814" y="651" width="1" height="5" fill="#c4f4c4"/><rect x="812" y="665" width="1" height="5" fill="#c4f4c4"/><rect x="814" y="665" width="1" height="5" fill="#c4f4c4"/><rect x="813" y="655" width="1" height="11" fill="#c4f4c4"/><rect x="823" y="651" width="1" height="5" fill="#c4f4c4"/><rect x="825" y="651" width="1" height="5" fill="#c4f4c4"/><rect x="823" y="665" width="1" height="5" fill="#c4f4c4"/><rect x="825" y="665" width="1" height="5" fill="#c4f4c4"/><rect x="824" y="655" width="1" height="11" fill="#c4f4c4"/><rect x="835" y="651" width="1" height="5" fill="#c4f4c4"/><rect x="837" y="651" width="1" height="5" fill="#c4f4c4"/><rect x="835" y="665" width="1" height="5" fill="#c4f4c4"/><rect x="837" y="665" width="1" height="5" fill="#c4f4c4"/><rect x="836" y="655" width="1" height="11" fill="#c4f4c4"/><rect x="857" y="651" width="1" height="5" fill="#c4f4c4"/><rect x="859" y="651" width="1" height="5" fill="#c4f4c4"/><rect x="857" y="665" width="1" height="5" fill="#c4f4c4"/><rect x="859" y="665" width="1" height="5" fill="#c4f4c4"/><rect x="858" y="655" width="1" height="11" fill="#c4f4c4"/><rect x="869" y="651" width="1" height="5" fill="#c4f4c4"/><rect x="871" y="651" width="1" height="5" fill="#c4f4c4"/><rect x="869" y="665" width="1" height="5" fill="#c4f4c4"/><rect x="871" y="665" width="1" height="5" fill="#c4f4c4"/><rect x="870" y="655" width="1" height="11" fill="#c4f4c4"/><rect x="880" y="651" width="1" height="5" fill="#c4f4c4"/><rect x="882" y="651" width="1" height="5" fill="#c4f4c4"/><rect x="880" y="665" width="1" height="5" fill="#c4f4c4"/><rect x="882" y="665" width="1" height="5" fill="#c4f4c4"/><rect x="881" y="655" width="1" height="11" fill="#c4f4c4"/><rect x="892" y="651" width="1" height="5" fill="#c4f4c4"/><rect x="894" y="651" width="1" height="5" fill="#c4f4c4"/><rect x="892" y="665" width="1" height="5" fill="#c4f4c4"/><rect x="894" y="665" width="1" height="5" fill="#c4f4c4"/><rect x="893" y="655" width="1" height="11" fill="#c4f4c4"/><rect x="915" y="651" width="1" height="5" fill="#c4f4c4"/><rect x="917" y="651" width="1" height="5" fill="#c4f4c4"/><rect x="915" y="665" width="1" height="5" fill="#c4f4c4"/><rect x="917" y="665" width="1" height="5" fill="#c4f4c4"/><rect x="916" y="655" width="1" height="11" fill="#c4f4c4"/><rect x="926" y="651" width="4" height="5" fill="#c4f4c4"/><rect x="926" y="665" width="4" height="5" fill="#c4f4c4"/><rect x="927" y="655" width="2" height="11" fill="#c4f4c4"/><rect x="938" y="651" width="1" height="5" fill="#c4f4c4"/><rect x="940" y="651" width="1" height="5" fill="#c4f4c4"/><rect x="938" y="665" width="1" height="5" fill="#c4f4c4"/><rect x="940" y="665" width="1" height="5" fill="#c4f4c4"/><rect x="939" y="655" width="1" height="11" fill="#c4f4c4"/><rect x="949" y="651" width="1" height="5" fill="#c4f4c4"/><rect x="951" y="651" width="1" height="5" fill="#c4f4c4"/><rect x="949" y="665" width="1" height="5" fill="#c4f4c4"/><rect x="951" y="665" width="1" height="5" fill="#c4f4c4"/><rect x="950" y="655" width="1" height="11" fill="#c4f4c4"/><rect x="961" y="651" width="1" height="5" fill="#c4f4c4"/><rect x="963" y="651" width="1" height="5" fill="#c4f4c4"/><rect x="961" y="665" width="1" height="5" fill="#c4f4c4"/><rect x="963" y="665" width="1" height="5" fill="#c4f4c4"/><rect x="962" y="655" width="1" height="11" fill="#c4f4c4"/><rect x="972" y="651" width="1" height="5" fill="#c4f4c4"/><rect x="974" y="651" width="1" height="5" fill="#c4f4c4"/><rect x="972" y="665" width="1" height="5" fill="#c4f4c4"/><rect x="974" y="665" width="1" height="5" fill="#c4f4c4"/><rect x="973" y="655" width="1" height="11" fill="#c4f4c4"/><rect x="984" y="651" width="1" height="5" fill="#c4f4c4"/><rect x="986" y="651" width="1" height="5" fill="#c4f4c4"/><rect x="984" y="665" width="1" height="5" fill="#c4f4c4"/><rect x="986" y="665" width="1" height="5" fill="#c4f4c4"/><rect x="985" y="655" width="1" height="11" fill="#c4f4c4"/><rect x="995" y="651" width="1" height="5" fill="#c4f4c4"/><rect x="997" y="651" width="1" height="5" fill="#c4f4c4"/><rect x="995" y="665" width="1" height="5" fill="#c4f4c4"/><rect x="997" y="665" width="1" height="5" fill="#c4f4c4"/><rect x="996" y="655" width="1" height="11" fill="#c4f4c4"/><rect x="1007" y="651" width="1" height="5" fill="#c4f4c4"/><rect x="1009" y="651" width="1" height="5" fill="#c4f4c4"/><rect x="1007" y="665" width="1" height="5" fill="#c4f4c4"/><rect x="1009" y="665" width="1" height="5" fill="#c4f4c4"/><rect x="1008" y="655" width="1" height="11" fill="#c4f4c4"/><rect x="1018" y="651" width="1" height="5" fill="#c4f4c4"/><rect x="1020" y="651" width="1" height="5" fill="#c4f4c4"/><rect x="1018" y="665" width="1" height="5" fill="#c4f4c4"/><rect x="1020" y="665" width="1" height="5" fill="#c4f4c4"/><rect x="1019" y="655" width="1" height="11" fill="#c4f4c4"/><rect x="1041" y="651" width="1" height="5" fill="#c4f4c4"/><rect x="1043" y="651" width="1" height="5" fill="#c4f4c4"/><rect x="1041" y="665" width="1" height="5" fill="#c4f4c4"/><rect x="1043" y="665" width="1" height="5" fill="#c4f4c4"/><rect x="1042" y="655" width="1" height="11" fill="#c4f4c4"/><rect x="1064" y="651" width="1" height="5" fill="#c4f4c4"/><rect x="1066" y="651" width="1" height="5" fill="#c4f4c4"/><rect x="1064" y="665" width="1" height="5" fill="#c4f4c4"/><rect x="1066" y="665" width="1" height="5" fill="#c4f4c4"/><rect x="1065" y="655" width="1" height="11" fill="#c4f4c4"/><rect x="1075" y="651" width="1" height="5" fill="#c4f4c4"/><rect x="1077" y="651" width="1" height="5" fill="#c4f4c4"/><rect x="1075" y="665" width="1" height="5" fill="#c4f4c4"/><rect x="1077" y="665" width="1" height="5" fill="#c4f4c4"/><rect x="1076" y="655" width="1" height="11" fill="#c4f4c4"/><rect x="1087" y="651" width="1" height="5" fill="#c4f4c4"/><rect x="1089" y="651" width="1" height="5" fill="#c4f4c4"/><rect x="1087" y="665" width="1" height="5" fill="#c4f4c4"/><rect x="1089" y="665" width="1" height="5" fill="#c4f4c4"/><rect x="1088" y="655" width="1" height="11" fill="#c4f4c4"/><rect x="1098" y="651" width="4" height="5" fill="#c4f4c4"/><rect x="1098" y="665" width="4" height="5" fill="#c4f4c4"/><rect x="1099" y="655" width="2" height="11" fill="#c4f4c4"/><rect x="1110" y="651" width="1" height="5" fill="#c4f4c4"/><rect x="1112" y="651" width="1" height="5" fill="#c4f4c4"/><rect x="1110" y="665" width="1" height="5" fill="#c4f4c4"/><rect x="1112" y="665" width="1" height="5" fill="#c4f4c4"/><rect x="1111" y="655" width="1" height="11" fill="#c4f4c4"/><rect x="1133" y="651" width="1" height="5" fill="#c4f4c4"/><rect x="1135" y="651" width="1" height="5" fill="#c4f4c4"/><rect x="1133" y="665" width="1" height="5" fill="#c4f4c4"/><rect x="1135" y="665" width="1" height="5" fill="#c4f4c4"/><rect x="1134" y="655" width="1" height="11" fill="#c4f4c4"/><rect x="1144" y="651" width="1" height="5" fill="#c4f4c4"/><rect x="1146" y="651" width="1" height="5" fill="#c4f4c4"/><rect x="1144" y="665" width="1" height="5" fill="#c4f4c4"/><rect x="1146" y="665" width="1" height="5" fill="#c4f4c4"/><rect x="1145" y="655" width="1" height="11" fill="#c4f4c4"/><rect x="1156" y="651" width="1" height="5" fill="#c4f4c4"/><rect x="1158" y="651" width="1" height="5" fill="#c4f4c4"/><rect x="1156" y="665" width="1" height="5" fill="#c4f4c4"/><rect x="1158" y="665" width="1" height="5" fill="#c4f4c4"/><rect x="1157" y="655" width="1" height="11" fill="#c4f4c4"/><rect x="1179" y="651" width="1" height="5" fill="#c4f4c4"/><rect x="1181" y="651" width="1" height="5" fill="#c4f4c4"/><rect x="1179" y="665" width="1" height="5" fill="#c4f4c4"/><rect x="1181" y="665" width="1" height="5" fill="#c4f4c4"/><rect x="1180" y="655" width="1" height="11" fill="#c4f4c4"/><rect x="1190" y="651" width="1" height="5" fill="#c4f4c4"/><rect x="1192" y="651" width="1" height="5" fill="#c4f4c4"/><rect x="1190" y="665" width="1" height="5" fill="#c4f4c4"/><rect x="1192" y="665" width="1" height="5" fill="#c4f4c4"/><rect x="1191" y="655" width="1" height="11" fill="#c4f4c4"/><rect x="1201" y="651" width="1" height="5" fill="#c4f4c4"/><rect x="1203" y="651" width="1" height="5" fill="#c4f4c4"/><rect x="1201" y="665" width="1" height="5" fill="#c4f4c4"/><rect x="1203" y="665" width="1" height="5" fill="#c4f4c4"/><rect x="1202" y="655" width="1" height="11" fill="#c4f4c4"/><rect x="1213" y="651" width="1" height="5" fill="#c4f4c4"/><rect x="1215" y="651" width="1" height="5" fill="#c4f4c4"/><rect x="1213" y="665" width="1" height="5" fill="#c4f4c4"/><rect x="1215" y="665" width="1" height="5" fill="#c4f4c4"/><rect x="1214" y="655" width="1" height="11" fill="#c4f4c4"/><rect x="1224" y="651" width="1" height="5" fill="#c4f4c4"/><rect x="1226" y="651" width="1" height="5" fill="#c4f4c4"/><rect x="1224" y="665" width="1" height="5" fill="#c4f4c4"/><rect x="1226" y="665" width="1" height="5" fill="#c4f4c4"/><rect x="1225" y="655" width="1" height="11" fill="#c4f4c4"/><rect x="1247" y="651" width="1" height="5" fill="#c4f4c4"/><rect x="1249" y="651" width="1" height="5" fill="#c4f4c4"/><rect x="1247" y="665" width="1" height="5" fill="#c4f4c4"/><rect x="1249" y="665" width="1" height="5" fill="#c4f4c4"/><rect x="1248" y="655" width="1" height="11" fill="#c4f4c4"/><rect x="1259" y="651" width="1" height="5" fill="#c4f4c4"/><rect x="1261" y="651" width="1" height="5" fill="#c4f4c4"/><rect x="1259" y="665" width="1" height="5" fill="#c4f4c4"/><rect x="1261" y="665" width="1" height="5" fill="#c4f4c4"/><rect x="1260" y="655" width="1" height="11" fill="#c4f4c4"/><rect x="1270" y="651" width="1" height="5" fill="#c4f4c4"/><rect x="1272" y="651" width="1" height="5" fill="#c4f4c4"/><rect x="1270" y="665" width="1" height="5" fill="#c4f4c4"/><rect x="1272" y="665" width="1" height="5" fill="#c4f4c4"/><rect x="1271" y="655" width="1" height="11" fill="#c4f4c4"/><rect x="1293" y="651" width="1" height="5" fill="#c4f4c4"/><rect x="1295" y="651" width="1" height="5" fill="#c4f4c4"/><rect x="1293" y="665" width="1" height="5" fill="#c4f4c4"/><rect x="1295" y="665" width="1" height="5" fill="#c4f4c4"/><rect x="1294" y="655" width="1" height="11" fill="#c4f4c4"/><rect x="1305" y="651" width="1" height="5" fill="#c4f4c4"/><rect x="1307" y="651" width="1" height="5" fill="#c4f4c4"/><rect x="1305" y="665" width="1" height="5" fill="#c4f4c4"/><rect x="1307" y="665" width="1" height="5" fill="#c4f4c4"/><rect x="1306" y="655" width="1" height="11" fill="#c4f4c4"/><rect x="1316" y="651" width="1" height="5" fill="#c4f4c4"/><rect x="1318" y="651" width="1" height="5" fill="#c4f4c4"/><rect x="1316" y="665" width="1" height="5" fill="#c4f4c4"/><rect x="1318" y="665" width="1" height="5" fill="#c4f4c4"/><rect x="1317" y="655" width="1" height="11" fill="#c4f4c4"/><rect x="1328" y="651" width="1" height="5" fill="#c4f4c4"/><rect x="1330" y="651" width="1" height="5" fill="#c4f4c4"/><rect x="1328" y="665" width="1" height="5" fill="#c4f4c4"/><rect x="1330" y="665" width="1" height="5" fill="#c4f4c4"/><rect x="1329" y="655" width="1" height="11" fill="#c4f4c4"/><rect x="1339" y="651" width="1" height="5" fill="#c4f4c4"/><rect x="1341" y="651" width="1" height="5" fill="#c4f4c4"/><rect x="1339" y="665" width="1" height="5" fill="#c4f4c4"/><rect x="1341" y="665" width="1" height="5" fill="#c4f4c4"/><rect x="1340" y="655" width="1" height="11" fill="#c4f4c4"/><rect x="1362" y="651" width="1" height="5" fill="#c4f4c4"/><rect x="1364" y="651" width="1" height="5" fill="#c4f4c4"/><rect x="1362" y="665" width="1" height="5" fill="#c4f4c4"/><rect x="1364" y="665" width="1" height="5" fill="#c4f4c4"/><rect x="1363" y="655" width="1" height="11" fill="#c4f4c4"/><rect x="1374" y="651" width="1" height="5" fill="#c4f4c4"/><rect x="1376" y="651" width="1" height="5" fill="#c4f4c4"/><rect x="1374" y="665" width="1" height="5" fill="#c4f4c4"/><rect x="1376" y="665" width="1" height="5" fill="#c4f4c4"/><rect x="1375" y="655" width="1" height="11" fill="#c4f4c4"/><rect x="1385" y="651" width="1" height="5" fill="#c4f4c4"/><rect x="1387" y="651" width="1" height="5" fill="#c4f4c4"/><rect x="1385" y="665" width="1" height="5" fill="#c4f4c4"/><rect x="1387" y="665" width="1" height="5" fill="#c4f4c4"/><rect x="1386" y="655" width="1" height="11" fill="#c4f4c4"/><rect x="1396" y="651" width="1" height="5" fill="#c4f4c4"/><rect x="1398" y="651" width="1" height="5" fill="#c4f4c4"/><rect x="1396" y="665" width="1" height="5" fill="#c4f4c4"/><rect x="1398" y="665" width="1" height="5" fill="#c4f4c4"/><rect x="1397" y="655" width="1" height="11" fill="#c4f4c4"/><rect x="1408" y="651" width="1" height="5" fill="#c4f4c4"/><rect x="1410" y="651" width="1" height="5" fill="#c4f4c4"/><rect x="1408" y="665" width="1" height="5" fill="#c4f4c4"/><rect x="1410" y="665" width="1" height="5" fill="#c4f4c4"/><rect x="1409" y="655" width="1" height="11" fill="#c4f4c4"/><rect x="1419" y="651" width="1" height="5" fill="#c4f4c4"/><rect x="1421" y="651" width="1" height="5" fill="#c4f4c4"/><rect x="1419" y="665" width="1" height="5" fill="#c4f4c4"/><rect x="1421" y="665" width="1" height="5" fill="#c4f4c4"/><rect x="1420" y="655" width="1" height="11" fill="#c4f4c4"/><rect x="1431" y="651" width="1" height="5" fill="#c4f4c4"/><rect x="1433" y="651" width="1" height="5" fill="#c4f4c4"/><rect x="1431" y="665" width="1" height="5" fill="#c4f4c4"/><rect x="1433" y="665" width="1" height="5" fill="#c4f4c4"/><rect x="1432" y="655" width="1" height="11" fill="#c4f4c4"/><rect x="1442" y="651" width="1" height="5" fill="#c4f4c4"/><rect x="1444" y="651" width="1" height="5" fill="#c4f4c4"/><rect x="1442" y="665" width="1" height="5" fill="#c4f4c4"/><rect x="1444" y="665" width="1" height="5" fill="#c4f4c4"/><rect x="1443" y="655" width="1" height="11" fill="#c4f4c4"/><rect x="1454" y="651" width="1" height="5" fill="#c4f4c4"/><rect x="1456" y="651" width="1" height="5" fill="#c4f4c4"/><rect x="1454" y="665" width="1" height="5" fill="#c4f4c4"/><rect x="1456" y="665" width="1" height="5" fill="#c4f4c4"/><rect x="1455" y="655" width="1" height="11" fill="#c4f4c4"/><rect x="1465" y="651" width="1" height="5" fill="#c4f4c4"/><rect x="1467" y="651" width="1" height="5" fill="#c4f4c4"/><rect x="1465" y="665" width="1" height="5" fill="#c4f4c4"/><rect x="1467" y="665" width="1" height="5" fill="#c4f4c4"/><rect x="1466" y="655" width="1" height="11" fill="#c4f4c4"/><rect x="1477" y="651" width="1" height="5" fill="#c4f4c4"/><rect x="1479" y="651" width="1" height="5" fill="#c4f4c4"/><rect x="1477" y="665" width="1" height="5" fill="#c4f4c4"/><rect x="1479" y="665" width="1" height="5" fill="#c4f4c4"/><rect x="1478" y="655" width="1" height="11" fill="#c4f4c4"/><rect x="1488" y="651" width="1" height="5" fill="#c4f4c4"/><rect x="1490" y="651" width="1" height="5" fill="#c4f4c4"/><rect x="1488" y="665" width="1" height="5" fill="#c4f4c4"/><rect x="1490" y="665" width="1" height="5" fill="#c4f4c4"/><rect x="1489" y="655" width="1" height="11" fill="#c4f4c4"/><rect x="1500" y="651" width="1" height="5" fill="#c4f4c4"/><rect x="1502" y="651" width="1" height="5" fill="#c4f4c4"/><rect x="1500" y="665" width="1" height="5" fill="#c4f4c4"/><rect x="1502" y="665" width="1" height="5" fill="#c4f4c4"/><rect x="1501" y="655" width="1" height="11" fill="#c4f4c4"/><rect x="1511" y="651" width="1" height="5" fill="#c4f4c4"/><rect x="1513" y="651" width="1" height="5" fill="#c4f4c4"/><rect x="1511" y="665" width="1" height="5" fill="#c4f4c4"/><rect x="1513" y="665" width="1" height="5" fill="#c4f4c4"/><rect x="1512" y="655" width="1" height="11" fill="#c4f4c4"/><rect x="1523" y="651" width="1" height="5" fill="#c4f4c4"/><rect x="1525" y="651" width="1" height="5" fill="#c4f4c4"/><rect x="1523" y="665" width="1" height="5" fill="#c4f4c4"/><rect x="1525" y="665" width="1" height="5" fill="#c4f4c4"/><rect x="1524" y="655" width="1" height="11" fill="#c4f4c4"/><rect x="1534" y="651" width="1" height="5" fill="#c4f4c4"/><rect x="1535" y="655" width="1" height="11" fill="#c4f4c4"/><rect x="1534" y="665" width="1" height="5" fill="#c4f4c4"/><text x="471" y="668" font-size="16" fill="#fff">88</text><text x="585" y="668" font-size="16" fill="#fff">76</text><text x="688" y="668" font-size="16" fill="#fff">64</text><text x="734" y="668" font-size="16" fill="#fff">59</text><text x="780" y="668" font-size="16" fill="#fff">53</text><text x="838" y="668" font-size="16" fill="#fff">47</text><text x="895" y="668" font-size="16" fill="#fff">40</text><text x="1021" y="668" font-size="16" fill="#fff">25</text><text x="1044" y="668" font-size="16" fill="#fff">26</text><text x="1113" y="668" font-size="16" fill="#fff">25</text><text x="1159" y="668" font-size="16" fill="#fff">26</text><text x="1227" y="668" font-size="16" fill="#fff">25</text><text x="1273" y="668" font-size="16" fill="#fff">26</text><text x="1342" y="668" font-size="16" fill="#fff">26</text><path d="M389 692.5L1536 692.5" stroke="#48d048" stroke-width="1"/><path d="M389.5 674L389.5 693" stroke="#70e070" stroke-width="1"/><rect x="400" y="674" width="1" height="19" fill="#48d048"/><rect x="411" y="674" width="2" height="19" fill="#48d048"/><rect x="423" y="674" width="1" height="19" fill="#48d048"/><rect x="434" y="674" width="1" height="19" fill="#48d048"/><rect x="446" y="674" width="1" height="19" fill="#48d048"/><rect x="457" y="674" width="1" height="19" fill="#48d048"/><rect x="469" y="674" width="1" height="19" fill="#48d048"/><rect x="480" y="674" width="1" height="19" fill="#48d048"/><rect x="492" y="674" width="1" height="19" fill="#48d048"/><rect x="503" y="674" width="1" height="19" fill="#48d048"/><rect x="514" y="674" width="1" height="19" fill="#48d048"/><rect x="526" y="674" width="1" height="19" fill="#48d048"/><rect x="537" y="674" width="1" height="19" fill="#48d048"/><rect x="549" y="674" width="1" height="19" fill="#48d048"/><rect x="560" y="674" width="1" height="19" fill="#48d048"/><rect x="572" y="674" width="1" height="19" fill="#48d048"/><rect x="583" y="674" width="2" height="19" fill="#48d048"/><rect x="595" y="674" width="1" height="19" fill="#48d048"/><rect x="606" y="674" width="1" height="19" fill="#48d048"/><rect x="618" y="674" width="1" height="19" fill="#48d048"/><rect x="629" y="674" width="1" height="19" fill="#48d048"/><rect x="641" y="674" width="1" height="19" fill="#48d048"/><rect x="652" y="674" width="1" height="19" fill="#48d048"/><rect x="664" y="674" width="1" height="19" fill="#48d048"/><rect x="675" y="674" width="1" height="19" fill="#48d048"/><rect x="686" y="674" width="1" height="19" fill="#48d048"/><rect x="698" y="674" width="1" height="19" fill="#48d048"/><rect x="709" y="674" width="1" height="19" fill="#48d048"/><rect x="721" y="674" width="1" height="19" fill="#48d048"/><rect x="732" y="674" width="1" height="19" fill="#48d048"/><rect x="744" y="674" width="1" height="19" fill="#48d048"/><rect x="755" y="674" width="2" height="19" fill="#48d048"/><rect x="767" y="674" width="1" height="19" fill="#48d048"/><rect x="778" y="674" width="1" height="19" fill="#48d048"/><rect x="790" y="674" width="1" height="19" fill="#48d048"/><rect x="801" y="674" width="1" height="19" fill="#48d048"/><rect x="813" y="674" width="1" height="19" fill="#48d048"/><rect x="824" y="674" width="1" height="19" fill="#48d048"/><rect x="836" y="674" width="1" height="19" fill="#48d048"/><rect x="847" y="674" width="1" height="19" fill="#48d048"/><rect x="858" y="674" width="1" height="19" fill="#48d048"/><rect x="870" y="674" width="1" height="19" fill="#48d048"/><rect x="881" y="674" width="1" height="19" fill="#48d048"/><rect x="893" y="674" width="1" height="19" fill="#48d048"/><rect x="904" y="674" width="1" height="19" fill="#48d048"/><rect x="916" y="674" width="1" height="19" fill="#48d048"/><rect x="927" y="674" width="2" height="19" fill="#48d048"/><rect x="939" y="674" width="1" height="19" fill="#48d048"/><rect x="950" y="674" width="1" height="19" fill="#48d048"/><rect x="962" y="674" width="1" height="19" fill="#48d048"/><rect x="973" y="674" width="1" height="19" fill="#48d048"/><rect x="985" y="674" width="1" height="19" fill="#48d048"/><rect x="996" y="674" width="1" height="19" fill="#48d048"/><rect x="1008" y="674" width="1" height="19" fill="#48d048"/><rect x="1019" y="674" width="1" height="19" fill="#48d048"/><rect x="1030" y="674" width="1" height="19" fill="#48d048"/><rect x="1042" y="674" width="1" height="19" fill="#48d048"/><rect x="1053" y="674" width="1" height="19" fill="#48d048"/><rect x="1065" y="674" width="1" height="19" fill="#48d048"/><rect x="1076" y="674" width="1" height="19" fill="#48d048"/><rect x="1088" y="674" width="1" height="19" fill="#48d048"/><rect x="1099" y="674" width="2" height="19" fill="#48d048"/><rect x="1111" y="674" width="1" height="19" fill="#48d048"/><rect x="1122" y="674" width="1" height="19" fill="#48d048"/><rect x="1134" y="674" width="1" height="19" fill="#48d048"/><rect x="1145" y="674" width="1" height="19" fill="#48d048"/><rect x="1157" y="674" width="1" height="19" fill="#48d048"/><rect x="1168" y="674" width="1" height="19" fill="#48d048"/><rect x="1180" y="674" width="1" height="19" fill="#48d048"/><rect x="1191" y="674" width="1" height="19" fill="#48d048"/><rect x="1202" y="674" width="1" height="19" fill="#48d048"/><rect x="1214" y="674" width="1" height="19" fill="#48d048"/><rect x="1225" y="674" width="1" height="19" fill="#48d048"/><rect x="1237" y="674" width="1" height="19" fill="#48d048"/><rect x="1248" y="674" width="1" height="19" fill="#48d048"/><rect x="1260" y="674" width="1" height="19" fill="#48d048"/><rect x="1271" y="674" width="2" height="19" fill="#48d048"/><rect x="1283" y="674" width="1" height="19" fill="#48d048"/><rect x="1294" y="674" width="1" height="19" fill="#48d048"/><rect x="1306" y="674" width="1" height="19" fill="#48d048"/><rect x="1317" y="674" width="1" height="19" fill="#48d048"/><rect x="1329" y="674" width="1" height="19" fill="#48d048"/><rect x="1340" y="674" width="1" height="19" fill="#48d048"/><rect x="1352" y="674" width="1" height="19" fill="#48d048"/><rect x="1363" y="674" width="1" height="19" fill="#48d048"/><rect x="1375" y="674" width="1" height="19" fill="#48d048"/><rect x="1386" y="674" width="1" height="19" fill="#48d048"/><rect x="1397" y="674" width="1" height="19" fill="#48d048"/><rect x="1409" y="674" width="1" height="19" fill="#48d048"/><rect x="1420" y="674" width="1" height="19" fill="#48d048"/><rect x="1432" y="674" width="1" height="19" fill="#48d048"/><rect x="1443" y="674" width="1" height="19" fill="#48d048"/><rect x="1455" y="674" width="1" height="19" fill="#48d048"/><rect x="1466" y="674" width="1" height="19" fill="#48d048"/><rect x="1478" y="674" width="1" height="19" fill="#48d048"/><rect x="1489" y="674" width="1" height="19" fill="#48d048"/><rect x="1501" y="674" width="1" height="19" fill="#48d048"/><rect x="1512" y="674" width="1" height="19" fill="#48d048"/><rect x="1524" y="674" width="1" height="19" fill="#48d048"/><path d="M389.5 697L389.5 716" stroke="#70e070" stroke-width="1"/><rect x="388" y="697" width="632" height="1" fill="#48d048"/><rect x="1019" y="715" width="24" height="1" fill="#48d048"/><rect x="1019" y="697" width="1" height="19" fill="#48d048"/><rect x="1042" y="697" width="47" height="1" fill="#48d048"/><rect x="1042" y="697" width="1" height="19" fill="#48d048"/><rect x="1088" y="715" width="47" height="1" fill="#48d048"/><rect x="1088" y="697" width="1" height="19" fill="#48d048"/><rect x="1134" y="697" width="12" height="1" fill="#48d048"/><rect x="1134" y="697" width="1" height="19" fill="#48d048"/><rect x="1145" y="715" width="13" height="1" fill="#48d048"/><rect x="1145" y="697" width="1" height="19" fill="#48d048"/><rect x="1157" y="697" width="46" height="1" fill="#48d048"/><rect x="1157" y="697" width="1" height="19" fill="#48d048"/><rect x="1202" y="715" width="47" height="1" fill="#48d048"/><rect x="1202" y="697" width="1" height="19" fill="#48d048"/><rect x="1248" y="697" width="13" height="1" fill="#48d048"/><rect x="1248" y="697" width="1" height="19" fill="#48d048"/><rect x="1260" y="715" width="12" height="1" fill="#48d048"/><rect x="1260" y="697" width="1" height="19" fill="#48d048"/><rect x="1271" y="697" width="47" height="1" fill="#48d048"/><rect x="1271" y="697" width="1" height="19" fill="#48d048"/><rect x="1317" y="715" width="13" height="1" fill="#48d048"/><rect x="1317" y="697" width="1" height="19" fill="#48d048"/><rect x="1329" y="697" width="35" height="1" fill="#48d048"/><rect x="1329" y="697" width="1" height="19" fill="#48d048"/><rect x="1363" y="715" width="13" height="1" fill="#48d048"/><rect x="1363" y="697" width="1" height="19" fill="#48d048"/><rect x="1375" y="697" width="35" height="1" fill="#48d048"/><rect x="1375" y="697" width="1" height="19" fill="#48d048"/><rect x="1409" y="715" width="35" height="1" fill="#48d048"/><rect x="1409" y="697" width="1" height="19" fill="#48d048"/><rect x="1443" y="697" width="47" height="1" fill="#48d048"/><rect x="1443" y="697" width="1" height="19" fill="#48d048"/><rect x="1489" y="715" width="13" height="1" fill="#48d048"/><rect x="1489" y="697" width="1" height="19" fill="#48d048"/><rect x="1501" y="697" width="12" height="1" fill="#48d048"/><rect x="1501" y="697" width="1" height="19" fill="#48d048"/><rect x="1512" y="715" width="24" height="1" fill="#48d048"/><rect x="1512" y="697" width="1" height="19" fill="#48d048"/><rect x="1065" y="697" width="1" height="19" fill="#48d048"/><rect x="1099" y="697" width="2" height="19" fill="#48d048"/><rect x="1111" y="697" width="1" height="19" fill="#48d048"/><rect x="1180" y="697" width="1" height="19" fill="#48d048"/><rect x="1214" y="697" width="1" height="19" fill="#48d048"/><rect x="1225" y="697" width="1" height="19" fill="#48d048"/><rect x="1294" y="697" width="1" height="19" fill="#48d048"/><rect x="1340" y="697" width="1" height="19" fill="#48d048"/><rect x="1386" y="697" width="1" height="19" fill="#48d048"/><rect x="1397" y="697" width="1" height="19" fill="#48d048"/><rect x="1432" y="697" width="1" height="19" fill="#48d048"/><rect x="1455" y="697" width="1" height="19" fill="#48d048"/><rect x="1466" y="697" width="1" height="19" fill="#48d048"/><rect x="1524" y="697" width="1" height="19" fill="#48d048"/><rect x="389" y="720" width="1147" height="19" fill="#b3ffb3"/><rect x="389" y="743" width="1147" height="19" fill="#b3ffb3"/><rect x="389" y="766" width="1147" height="19" fill="#b3ffb3"/><rect x="389" y="789" width="1147" height="19" fill="#00ff00"/><rect x="389" y="812" width="1147" height="19" fill="#00ff00"/><rect x="390" y="835" width="1146" height="1" fill="#c4f4c4"/><rect x="390" y="853" width="1146" height="1" fill="#c4f4c4"/><rect x="389" y="835" width="1" height="19" fill="#c4f4c4"/><text x="391" y="852" font-size="16" fill="#fff">20</text><rect x="390" y="858" width="1146" height="1" fill="#c4f4c4"/><rect x="390" y="876" width="1146" height="1" fill="#c4f4c4"/><rect x="389" y="858" width="1" height="19" fill="#c4f4c4"/><text x="391" y="875" font-size="16" fill="#fff">5</text><rect x="390" y="881" width="1146" height="1" fill="#c4f4c4"/><rect x="390" y="899" width="1146" height="1" fill="#c4f4c4"/><rect x="389" y="881" width="1" height="19" fill="#c4f4c4"/><text x="391" y="898" font-size="16" fill="#fff">10</text><path d="M389 922.5L1536 922.5" stroke="#48d048" stroke-width="1"/><path d="M389.5 904L389.5 923" stroke="#70e070" stroke-width="1"/><rect x="1042" y="904" width="1" height="19" fill="#48d048"/><rect x="1065" y="904" width="1" height="19" fill="#48d048"/><rect x="1076" y="904" width="1" height="19" fill="#48d048"/><rect x="1099" y="904" width="1" height="19" fill="#48d048"/><rect x="1111" y="904" width="1" height="19" fill="#48d048"/><rect x="1134" y="904" width="1" height="19" fill="#48d048"/><rect x="1145" y="904" width="1" height="19" fill="#48d048"/><rect x="1157" y="904" width="1" height="19" fill="#48d048"/><rect x="1180" y="904" width="1" height="19" fill="#48d048"/><rect x="1191" y="904" width="1" height="19" fill="#48d048"/><rect x="1202" y="904" width="1" height="19" fill="#48d048"/><rect x="1214" y="904" width="1" height="19" fill="#48d048"/><rect x="1294" y="904" width="1" height="19" fill="#48d048"/><rect x="1306" y="904" width="1" height="19" fill="#48d048"/><rect x="1317" y="904" width="1" height="19" fill="#48d048"/><rect x="1329" y="904" width="1" height="19" fill="#48d048"/><rect x="1340" y="904" width="1" height="19" fill="#48d048"/><rect x="1363" y="904" width="1" height="19" fill="#48d048"/><rect x="1375" y="904" width="1" height="19" fill="#48d048"/><rect x="1386" y="904" width="1" height="19" fill="#48d048"/><rect x="1397" y="904" width="1" height="19" fill="#48d048"/><rect x="1420" y="904" width="1" height="19" fill="#48d048"/><rect x="1432" y="904" width="1" height="19" fill="#48d048"/><rect x="1455" y="904" width="1" height="19" fill="#48d048"/><rect x="1466" y="904" width="1" height="19" fill="#48d048"/><rect x="1478" y="904" width="1" height="19" fill="#48d048"/><rect x="1501" y="904" width="1" height="19" fill="#48d048"/><rect x="1512" y="904" width="1" height="19" fill="#48d048"/><rect x="1524" y="904" width="1" height="19" fill="#48d048"/><rect x="389" y="924" width="1204" height="2" fill="#fff"/><rect x="388" y="926" width="1" height="7" fill="#40c040"/><rect x="411" y="929" width="1" height="4" fill="#40c040"/><rect x="434" y="929" width="1" height="4" fill="#40c040"/><rect x="457" y="929" width="1" height="4" fill="#40c040"/><rect x="480" y="929" width="1" height="4" fill="#40c040"/><rect x="503" y="926" width="1" height="7" fill="#40c040"/><rect x="526" y="929" width="1" height="4" fill="#40c040"/><rect x="549" y="929" width="1" height="4" fill="#40c040"/><rect x="572" y="929" width="1" height="4" fill="#40c040"/><rect x="595" y="929" width="1" height="4" fill="#40c040"/><rect x="618" y="926" width="1" height="7" fill="#40c040"/><rect x="641" y="929" width="1" height="4" fill="#40c040"/><rect x="664" y="929" width="1" height="4" fill="#40c040"/><rect x="686" y="929" width="1" height="4" fill="#40c040"/><rect x="709" y="929" width="1" height="4" fill="#40c040"/><rect x="732" y="926" width="1" height="7" fill="#40c040"/><rect x="755" y="929" width="1" height="4" fill="#40c040"/><rect x="778" y="929" width="1" height="4" fill="#40c040"/><rect x="801" y="929" width="1" height="4" fill="#40c040"/><rect x="824" y="929" width="1" height="4" fill="#40c040"/><rect x="847" y="926" width="1" height="7" fill="#40c040"/><rect x="870" y="929" width="1" height="4" fill="#40c040"/><rect x="893" y="929" width="1" height="4" fill="#40c040"/><rect x="916" y="929" width="1" height="4" fill="#40c040"/><rect x="939" y="929" width="1" height="4" fill="#40c040"/><rect x="962" y="926" width="1" height="7" fill="#40c040"/><rect x="985" y="929" width="1" height="4" fill="#40c040"/><rect x="1008" y="929" width="1" height="4" fill="#40c040"/><rect x="1030" y="929" width="1" height="4" fill="#40c040"/><rect x="1053" y="929" width="1" height="4" fill="#40c040"/><rect x="1076" y="926" width="1" height="7" fill="#40c040"/><rect x="1099" y="929" width="1" height="4" fill="#40c040"/><rect x="1122" y="929" width="1" height="4" fill="#40c040"/><rect x="1145" y="929" width="1" height="4" fill="#40c040"/><rect x="1168" y="929" width="1" height="4" fill="#40c040"/><rect x="1191" y="926" width="1" height="7" fill="#40c040"/><rect x="1214" y="929" width="1" height="4" fill="#40c040"/><rect x="1237" y="929" width="1" height="4" fill="#40c040"/><rect x="1260" y="929" width="1" height="4" fill="#40c040"/><rect x="1283" y="929" width="1" height="4" fill="#40c040"/><rect x="1306" y="926" width="1" height="7" fill="#40c040"/><rect x="1329" y="929" width="1" height="4" fill="#40c040"/><rect x="1352" y="929" width="1" height="4" fill="#40c040"/><rect x="1375" y="929" width="1" height="4" fill="#40c040"/><rect x="1397" y="929" width="1" height="4" fill="#40c040"/><rect x="1420" y="926" width="1" height="7" fill="#40c040"/><rect x="1443" y="929" width="1" height="4" fill="#40c040"/><rect x="1466" y="929" width="1" height="4" fill="#40c040"/><rect x="1489" y="929" width="1" height="4" fill="#40c040"/><rect x="1512" y="929" width="1" height="4" fill="#40c040"/><rect x="1535" y="926" width="1" height="7" fill="#40c040"/><rect x="1558" y="929" width="1" height="4" fill="#40c040"/><rect x="1581" y="929" width="1" height="4" fill="#40c040"/><text x="400.0" y="952" font-size="15.8" fill="#30d830" text-anchor="middle">0 us</text><text x="618.2" y="952" font-size="15.8" fill="#30d830" text-anchor="middle">2000 us</text><text x="847.4" y="952" font-size="15.8" fill="#30d830" text-anchor="middle">4000 us</text><text x="1076.6" y="952" font-size="15.8" fill="#30d830" text-anchor="middle">6000 us</text><text x="1305.8" y="952" font-size="15.8" fill="#30d830" text-anchor="middle">8000 us</text><text x="1535.0" y="952" font-size="15.8" fill="#30d830" text-anchor="middle">10000 us</text><rect x="389" y="954" width="1204" height="1" fill="#a0a0a0"/><rect x="1483" y="167" width="3" height="788" fill="#f8c820"/><rect x="1483" y="191" width="3" height="19" fill="#d04000"/><rect x="1483" y="467" width="3" height="19" fill="#d04000"/><rect x="1483" y="789" width="3" height="19" fill="#d04000"/><rect x="1483" y="812" width="3" height="19" fill="#d04000"/><rect x="1483" y="720" width="3" height="19" fill="#3838a8"/><rect x="1483" y="743" width="3" height="19" fill="#3838a8"/><rect x="1483" y="766" width="3" height="19" fill="#3838a8"/><rect x="1438.5" y="955.5" width="93" height="22" fill="none"/><rect x="1438.5" y="955.5" width="92" height="21" fill="none" stroke="#e0b020"/><text x="1440" y="973" font-size="16" fill="#f0c020">9549.419 u</text></svg><div style="position:absolute;left:1593px;top:165px;width:1px;height:813px;background:#808080"></div><div style="position:absolute;left:1594px;top:165px;width:2px;height:813px;background:#fff"></div><div style="position:absolute;left:1596px;top:165px;width:17px;height:20px;background:#888"></div><div style="position:absolute;left:1596px;top:185px;width:17px;height:2px;background:#fff"></div><div style="position:absolute;left:1596px;top:187px;width:17px;height:736px;background:#c8c8c8"></div><div style="position:absolute;left:1597px;top:187px;width:15px;height:18px;background:#f0f0f0;border-bottom:1px solid #a0a0a0;border-right:1px solid #a0a0a0;box-sizing:border-box"></div><svg style="position:absolute;left:1597px;top:187px;" width="15" height="18" viewBox="0 0 15 18"><path d="M3.5 11h8l-4-4z" fill="#000"/></svg><div style="position:absolute;left:1597px;top:205px;width:15px;height:419px;background:#f0f0f0;border-right:2px solid #a0a0a0;border-bottom:2px solid #a0a0a0;box-sizing:border-box"></div><div style="position:absolute;left:1598px;top:417px;width:12px;height:53px;background:#fff"></div><div style="position:absolute;left:1597px;top:906px;width:15px;height:16px;background:#f0f0f0;border-bottom:1px solid #a0a0a0;border-right:1px solid #a0a0a0;box-sizing:border-box"></div><svg style="position:absolute;left:1597px;top:906px;" width="15" height="16" viewBox="0 0 15 16"><path d="M3.5 6h8l-4 4z" fill="#000"/></svg><div style="position:absolute;left:1596px;top:924px;width:17px;height:2px;background:#fff"></div><div style="position:absolute;left:1596px;top:926px;width:17px;height:51px;background:#888"></div><div style="position:absolute;left:1596px;top:980px;width:17px;height:18px;background:#888"></div><div style="position:absolute;left:4px;top:977px;width:1589px;height:1px;background:#808080"></div><div style="position:absolute;left:4px;top:978px;width:1589px;height:2px;background:#fff"></div><div style="position:absolute;left:4px;top:980px;width:1589px;height:20px;background:#808080"></div><div style="position:absolute;left:283px;top:977px;width:2px;height:23px;background:#fff"></div><div style="position:absolute;left:386px;top:977px;width:1px;height:23px;background:#808080"></div><div style="position:absolute;left:387px;top:977px;width:2px;height:23px;background:#fff"></div><div style="position:absolute;left:13px;top:981px;width:269px;height:16px;background:#f6f6f6"></div><div style="position:absolute;left:286px;top:981px;width:100px;height:16px;background:#f6f6f6"></div><div style="position:absolute;left:389px;top:981px;width:1202px;height:16px;background:#f6f6f6"></div><div style="position:absolute;left:13px;top:981px;width:16px;height:17px;background:#f0f0f0;border-top:1px solid #fff;border-left:1px solid #fff;border-bottom:2px solid #808080;border-right:2px solid #808080;box-sizing:border-box"></div><svg style="position:absolute;left:13px;top:981px;" width="16" height="17" viewBox="0 0 16 17"><path d="M10 4.5v8l-4-4z" fill="#a0a0a0"/></svg><div style="position:absolute;left:267px;top:981px;width:15px;height:17px;background:#f0f0f0;border-top:1px solid #fff;border-left:1px solid #fff;border-bottom:2px solid #808080;border-right:2px solid #808080;box-sizing:border-box"></div><svg style="position:absolute;left:267px;top:981px;" width="15" height="17" viewBox="0 0 15 17"><path d="M5 4.5v8l4-4z" fill="#a0a0a0"/></svg><div style="position:absolute;left:286px;top:981px;width:16px;height:17px;background:#f0f0f0;border-top:1px solid #fff;border-left:1px solid #fff;border-bottom:2px solid #808080;border-right:2px solid #808080;box-sizing:border-box"></div><svg style="position:absolute;left:286px;top:981px;" width="16" height="17" viewBox="0 0 16 17"><path d="M10 4.5v8l-4-4z" fill="#a0a0a0"/></svg><div style="position:absolute;left:370px;top:981px;width:16px;height:17px;background:#f0f0f0;border-top:1px solid #fff;border-left:1px solid #fff;border-bottom:2px solid #808080;border-right:2px solid #808080;box-sizing:border-box"></div><svg style="position:absolute;left:370px;top:981px;" width="16" height="17" viewBox="0 0 16 17"><path d="M6 4.5v8l4-4z" fill="#a0a0a0"/></svg><div style="position:absolute;left:390px;top:981px;width:15px;height:17px;background:#f0f0f0;border-top:1px solid #fff;border-left:1px solid #fff;border-bottom:2px solid #808080;border-right:2px solid #808080;box-sizing:border-box"></div><svg style="position:absolute;left:390px;top:981px;" width="15" height="17" viewBox="0 0 15 17"><path d="M9.5 4v9l-5-4.5z" fill="#000"/></svg><div style="position:absolute;left:405px;top:981px;width:2px;height:16px;background:#808080"></div><div style="position:absolute;left:1575px;top:981px;width:16px;height:17px;background:#f0f0f0;border-top:1px solid #fff;border-left:1px solid #fff;border-bottom:2px solid #808080;border-right:2px solid #808080;box-sizing:border-box"></div><svg style="position:absolute;left:1575px;top:981px;" width="16" height="17" viewBox="0 0 16 17"><path d="M6 4v9l5-4.5z" fill="#000"/></svg><div style="position:absolute;left:1468px;top:987px;width:1px;height:10px;background:#f0d060"></div><div style="position:absolute;left:0px;top:1001px;width:1618px;height:49px;background:#f0f0f0"></div><div style="position:absolute;left:0px;top:1001px;width:1618px;height:1px;background:#a0a0a0"></div><div style="position:absolute;left:0px;top:1004px;width:1597px;height:2px;background:#202020"></div><div style="position:absolute;left:1px;top:1004px;width:77px;height:22px;background:#d4d4d4;border:1px solid #202020;border-top:2px solid #202020;border-bottom:2px solid #202020;border-radius:0 0 4px 4px;box-sizing:border-box"></div><div style="position:absolute;left:24.5px;top:1008.27px;font-size:10.9px;color:#000;white-space:nowrap;line-height:1;">Transcript</div><svg style="position:absolute;left:6px;top:1005px;" width="16" height="16" viewBox="0 0 16 16"><path d="M2 15V5a6 4 0 0 1 12 0v10h-3V6H5v9z" fill="#909090" stroke="#505050"/><rect x="5" y="3" width="6" height="4" fill="#fff"/></svg><div style="position:absolute;left:78px;top:1002px;width:58px;height:24px;background:#f0f0f0;border:1px solid #202020;border-top:none;border-bottom:2px solid #202020;border-radius:0 0 4px 4px;box-sizing:border-box"></div><div style="position:absolute;left:102px;top:1008.27px;font-size:10.9px;color:#000;white-space:nowrap;line-height:1;">Wave</div><svg style="position:absolute;left:84px;top:1005px;" width="16" height="16" viewBox="0 0 16 16"><rect x="0.5" y="0.5" width="14" height="14" fill="#fff" stroke="#000"/><rect x="1" y="5" width="13" height="9" fill="#000"/><path d="M2 11h3V7h3v3h4" stroke="#30d080" fill="none"/><path d="M8 13h5" stroke="#4040c0"/></svg><div style="position:absolute;left:136px;top:1004px;width:67px;height:22px;background:#d4d4d4;border:1px solid #202020;border-top:2px solid #202020;border-bottom:2px solid #202020;border-radius:0 0 4px 4px;box-sizing:border-box"></div><div style="position:absolute;left:161px;top:1008.27px;font-size:10.9px;color:#000;white-space:nowrap;line-height:1;">Objects</div><svg style="position:absolute;left:141px;top:1005px;" width="16" height="16" viewBox="0 0 16 16"><path d="M1 11l5-5 5 5-5 5z" fill="#2060e0"/><rect x="8" y="6" width="8" height="8" fill="#30b050"/><path d="M3 3l4-3 6 5-4 3z" fill="#a040e0"/><circle cx="9" cy="7" r="3" fill="#30d0f0"/></svg><div style="position:absolute;left:203px;top:1004px;width:78px;height:22px;background:#d4d4d4;border:1px solid #202020;border-top:2px solid #202020;border-bottom:2px solid #202020;border-radius:0 0 4px 4px;box-sizing:border-box"></div><div style="position:absolute;left:226.7px;top:1008.27px;font-size:10.9px;color:#000;white-space:nowrap;line-height:1;">Processes</div><svg style="position:absolute;left:207px;top:1005px;" width="16" height="16" viewBox="0 0 16 16"><circle cx="8" cy="8" r="5" fill="#5080b8" stroke="#305080" stroke-width="3" stroke-dasharray="2 1.4"/><circle cx="8" cy="8" r="2.2" fill="#e8e8e8"/></svg><div style="position:absolute;left:281px;top:1004px;width:62px;height:22px;background:#d4d4d4;border:1px solid #202020;border-top:2px solid #202020;border-bottom:2px solid #202020;border-radius:0 0 4px 4px;box-sizing:border-box"></div><div style="position:absolute;left:305.5px;top:1008.27px;font-size:10.9px;color:#000;white-space:nowrap;line-height:1;">Library</div><svg style="position:absolute;left:286px;top:1005px;" width="16" height="16" viewBox="0 0 16 16"><path d="M1 15h14" stroke="#000" stroke-width="2"/><rect x="3" y="3" width="2" height="11" fill="#c03030"/><rect x="5.5" y="1" width="2" height="13" fill="#30a0a0"/><rect x="8" y="5" width="2" height="9" fill="#3050c0"/><rect x="10.5" y="3" width="2" height="11" fill="#a0c040"/></svg><div style="position:absolute;left:343px;top:1004px;width:68px;height:22px;background:#d4d4d4;border:1px solid #202020;border-top:2px solid #202020;border-bottom:2px solid #202020;border-radius:0 0 4px 4px;box-sizing:border-box"></div><div style="position:absolute;left:367.8px;top:1008.27px;font-size:10.9px;color:#000;white-space:nowrap;line-height:1;">Memory</div><svg style="position:absolute;left:349px;top:1005px;" width="16" height="16" viewBox="0 0 16 16"><rect x="1" y="1" width="4" height="4" fill="#3050c0"/><rect x="5" y="1" width="4" height="4" fill="#e03030"/><rect x="9" y="1" width="4" height="4" fill="#30a030"/><rect x="1" y="5" width="4" height="4" fill="#e0c030"/><rect x="5" y="5" width="4" height="4" fill="#fff"/><rect x="9" y="5" width="4" height="4" fill="#3050c0"/><rect x="1" y="9" width="4" height="4" fill="#30a030"/><rect x="5" y="9" width="4" height="4" fill="#3050c0"/><rect x="9" y="9" width="4" height="4" fill="#e08030"/><rect x="1" y="13" width="4" height="2" fill="#e03030"/><rect x="5" y="13" width="4" height="2" fill="#30a030"/><rect x="9" y="13" width="4" height="2" fill="#e0c030"/></svg><div style="position:absolute;left:411px;top:1004px;width:46px;height:22px;background:#d4d4d4;border:1px solid #202020;border-top:2px solid #202020;border-bottom:2px solid #202020;border-radius:0 0 4px 4px;box-sizing:border-box"></div><div style="position:absolute;left:436.2px;top:1008.27px;font-size:10.9px;color:#000;white-space:nowrap;line-height:1;">sim</div><svg style="position:absolute;left:417px;top:1005px;" width="16" height="16" viewBox="0 0 16 16"><path d="M4 1h10l-2 11H2z" fill="#fff" stroke="#000"/><path d="M5 4h6M5 6h6M4 8h6" stroke="#404040"/><circle cx="3.5" cy="13" r="2.5" fill="#c02020" stroke="#600"/><circle cx="12.5" cy="13" r="2.5" fill="#c02020" stroke="#600"/></svg><div style="position:absolute;left:2px;top:1029px;width:198px;height:19px;border-top:1px solid #a0a0a0;border-left:1px solid #a0a0a0;border-right:1px solid #fff;border-bottom:1px solid #fff;box-sizing:border-box"></div><div style="position:absolute;left:204px;top:1029px;width:1056px;height:19px;border-top:1px solid #a0a0a0;border-left:1px solid #a0a0a0;border-right:1px solid #fff;border-bottom:1px solid #fff;box-sizing:border-box"></div><div style="position:absolute;left:1265px;top:1029px;width:169px;height:19px;border-top:1px solid #a0a0a0;border-left:1px solid #a0a0a0;border-right:1px solid #fff;border-bottom:1px solid #fff;box-sizing:border-box"></div><div style="position:absolute;left:1435px;top:1029px;width:164px;height:19px;border-top:1px solid #a0a0a0;border-left:1px solid #a0a0a0;border-right:1px solid #fff;border-bottom:1px solid #fff;box-sizing:border-box"></div><div style="position:absolute;left:5px;top:1033.56px;font-size:10.8px;color:#000;white-space:nowrap;line-height:1;">Now: 10 ms&nbsp;&nbsp;&nbsp;Delta: 3</div><div style="position:absolute;left:206px;top:1033.47px;font-size:10.9px;color:#000;white-space:nowrap;line-height:1;">sim:/tb_PID_Temperature_Control</div><div style="position:absolute;left:1272px;top:1033.56px;font-size:10.8px;color:#000;white-space:nowrap;line-height:1;">0 ns to 10500 us</div><div style="position:absolute;left:1441px;top:1033.56px;font-size:10.8px;color:#000;white-space:nowrap;line-height:1;">Now: 10 ms&nbsp;&nbsp;&nbsp;Delta: 3</div><div style="position:absolute;left:1597px;top:1023px;width:21px;height:5px;background:#c8c8c8"></div><div style="position:absolute;left:1597px;top:1004px;width:11px;height:19px;background:#f0f0f0;border-top:1px solid #fff;border-left:1px solid #fff;border-bottom:2px solid #a0a0a0;border-right:1px solid #a0a0a0;box-sizing:border-box"></div><svg style="position:absolute;left:1597px;top:1004px;" width="11" height="19" viewBox="0 0 11 19"><path d="M6 5l-3 4 3 4M8 5l-3 4 3 4" stroke="#202020" fill="none"/></svg><div style="position:absolute;left:1607px;top:1004px;width:11px;height:19px;background:#f0f0f0;border-top:1px solid #fff;border-left:1px solid #fff;border-bottom:2px solid #a0a0a0;border-right:1px solid #a0a0a0;box-sizing:border-box"></div><svg style="position:absolute;left:1607px;top:1004px;" width="11" height="19" viewBox="0 0 11 19"><path d="M3 5l3 4-3 4M5 5l3 4-3 4" stroke="#202020" fill="none"/></svg><svg style="position:absolute;left:1603px;top:1036px;" width="14" height="14" viewBox="0 0 14 14"><path d="M13 2L2 13M13 6L6 13M13 10L10 13" stroke="#a0a0a0"/></svg></body></html>
